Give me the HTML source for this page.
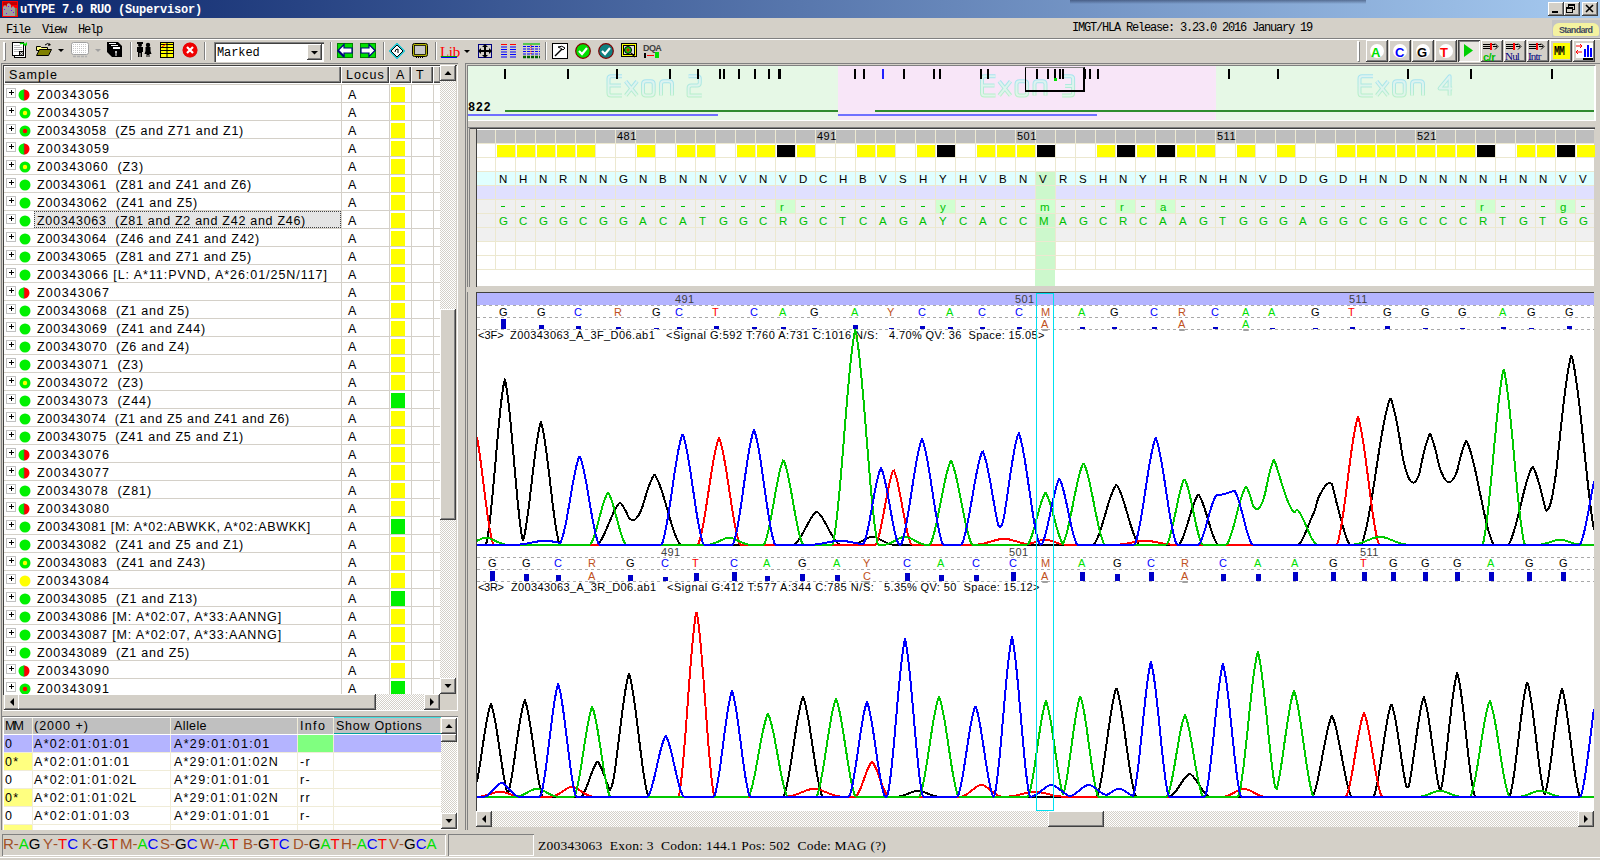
<!DOCTYPE html><html><head><meta charset="utf-8"><style>
*{margin:0;padding:0;box-sizing:border-box}
html,body{width:1600px;height:860px;overflow:hidden;background:#D4D0C8;position:relative;font-family:"Liberation Sans",sans-serif}
body>div,body>svg{position:absolute}
.t{white-space:pre;line-height:1}
.mono{font-family:"Liberation Mono",monospace}
.serif{font-family:"Liberation Serif",serif}
.raised{background:#D4D0C8;box-shadow:inset -1px -1px #404040,inset 1px 1px #FFFFFF,inset -2px -2px #808080,inset 2px 2px #D4D0C8}
.sunk{box-shadow:inset 1px 1px #808080,inset -1px -1px #FFFFFF}
.dith{background-color:#E8E6E0;background-image:repeating-linear-gradient(45deg,rgba(255,255,255,.5) 0 1px,transparent 1px 2px)}
</style></head><body>
<div style="left:0px;top:0px;width:1600px;height:18px;background:linear-gradient(to right,#0A246A,#A6CAF0)"></div>
<div style="left:1070px;top:0px;width:296px;height:4px;background:linear-gradient(rgba(20,30,60,.45),rgba(20,30,60,0))"></div>
<svg style="left:2px;top:1px" width="16" height="16" viewBox="0 0 16 16">
<rect x="0" y="0" width="16" height="16" fill="#FF0000"/><rect x="1" y="1" width="14" height="3" fill="#C00000"/>
<path d="M1 15 V6 L3 4 L5 6 V3 L7 2 L9 4 V7 L11 5 L13 7 V15 Z" fill="#A0A0A0"/>
<rect x="2" y="8" width="1" height="1" fill="#8000FF"/><rect x="6" y="5" width="1" height="1" fill="#8000FF"/><rect x="9" y="9" width="1" height="1" fill="#8000FF"/><rect x="4" y="12" width="1" height="1" fill="#8000FF"/><rect x="11" y="11" width="1" height="1" fill="#8000FF"/>
<rect x="13" y="7" width="2" height="8" fill="#808040"/></svg>
<div class="t" style="left:20px;top:3px;color:#fff;font:bold 12px 'Liberation Mono',monospace;letter-spacing:-0.2px">uTYPE 7.0 RUO (Supervisor)</div>
<div class="raised" style="left:1548px;top:2px;width:16px;height:14px"></div>
<div class="raised" style="left:1564px;top:2px;width:16px;height:14px"></div>
<div class="raised" style="left:1582px;top:2px;width:16px;height:14px"></div>
<div style="left:1552px;top:11px;width:6px;height:2px;background:#000"></div>
<svg style="left:1564px;top:2px" width="16" height="14"><rect x="4.5" y="2.5" width="6" height="5" fill="none" stroke="#000"/><rect x="4" y="2" width="7" height="2" fill="#000"/><rect x="2.5" y="5.5" width="6" height="5" fill="#D4D0C8" stroke="#000"/><rect x="2" y="5" width="7" height="2" fill="#000"/></svg>
<svg style="left:1582px;top:2px" width="16" height="14"><path d="M4 3 L11 10 M11 3 L4 10" stroke="#000" stroke-width="1.6"/></svg>
<div class="t" style="left:6px;top:23px;font:12px 'Liberation Mono',monospace;color:#000;letter-spacing:-1.2px">File</div>
<div class="t" style="left:42px;top:23px;font:12px 'Liberation Mono',monospace;color:#000;letter-spacing:-1.2px">View</div>
<div class="t" style="left:78px;top:23px;font:12px 'Liberation Mono',monospace;color:#000;letter-spacing:-1.2px">Help</div>
<div class="t" style="left:1072px;top:21px;font:12px 'Liberation Mono',monospace;color:#000;letter-spacing:-1.2px">IMGT/HLA Release: 3.23.0 2016 January 19</div>
<div style="left:1552px;top:20px;width:48px;height:17px;background:#C4C4C4"></div>
<div style="left:1553px;top:23px;width:46px;height:13px;background:#F4F2A0;border-radius:6px 6px 2px 2px"></div>
<div class="t" style="left:1559px;top:26px;font-family:'Liberation Sans',sans-serif;font-size:9px;font-weight:bold;letter-spacing:-0.714px;color:#404860;">Standard</div>
<div style="left:0px;top:38px;width:1600px;height:1px;background:#808080"></div>
<div style="left:0px;top:39px;width:1600px;height:1px;background:#FFFFFF"></div>
<div style="left:3px;top:42px;width:2px;height:18px;background:#fff;box-shadow:1px 1px #808080"></div>
<div style="left:130px;top:42px;width:1px;height:18px;background:#808080;box-shadow:1px 0 #fff"></div>
<div style="left:204px;top:42px;width:1px;height:18px;background:#808080;box-shadow:1px 0 #fff"></div>
<div style="left:330px;top:42px;width:1px;height:18px;background:#808080;box-shadow:1px 0 #fff"></div>
<div style="left:383px;top:42px;width:1px;height:18px;background:#808080;box-shadow:1px 0 #fff"></div>
<div style="left:435px;top:42px;width:1px;height:18px;background:#808080;box-shadow:1px 0 #fff"></div>
<div style="left:545px;top:42px;width:1px;height:18px;background:#808080;box-shadow:1px 0 #fff"></div>
<div style="left:214px;top:42px;width:110px;height:20px;background:#fff;box-shadow:inset 1px 1px #808080,inset 2px 2px #404040,inset -1px -1px #fff"></div>
<div class="t" style="left:217px;top:46px;font:12px 'Liberation Mono',monospace;letter-spacing:-0.1px;color:#000">Marked</div>
<div class="raised" style="left:307px;top:44px;width:15px;height:16px"></div>
<svg style="left:307px;top:44px" width="15" height="16"><path d="M4 7 L11 7 L7.5 10.5 Z" fill="#000"/></svg>
<svg style="left:12px;top:42px" width="16" height="16" viewBox="0 0 16 16"><rect x="2.5" y="2.5" width="11" height="13" fill="#fff" stroke="#000"/><rect x="0.5" y="0.5" width="11" height="13" fill="#fff" stroke="#000"/><path d="M2 3.5h6M2 5.5h8M2 7.5h8M2 9.5h5" stroke="#B8B8B8"/><rect x="7.5" y="9.5" width="4" height="4" fill="#fff" stroke="#000"/><circle cx="9.5" cy="11.5" r="1" fill="none" stroke="#000" stroke-width="0.7"/><path d="M8 2 q3 -2 5 1" stroke="#00E000" stroke-width="1.5" fill="none"/><path d="M11.5 3.5h3.5v-3.5z" fill="#00E000"/></svg>
<svg style="left:36px;top:42px" width="16" height="16" viewBox="0 0 16 16"><path d="M0.5 4.5h4l1 1h6v3h-11z" fill="#FFFF80" stroke="#000"/><path d="M0.5 13.5l3 -6h12l-3 6z" fill="#808000" stroke="#000"/><path d="M9 3q3 -3 5 0" stroke="#000" fill="none"/><path d="M13 1l2 2l-3 1z" fill="#000"/></svg>
<svg style="left:58px;top:49px" width="7" height="4" viewBox="0 0 7 4"><path d="M0 0h6l-3 3z" fill="#000"/></svg>
<svg style="left:71px;top:42px" width="18" height="16" viewBox="0 0 18 16"><rect x="0.5" y="0.5" width="17" height="12" rx="2" fill="#fff" stroke="#A0A0A0"/><path d="M2 2.5h14M2 4.5h14M2 6.5h14M2 8.5h14M2 10.5h14" stroke="#C8C8C8" stroke-dasharray="1 1"/><path d="M2 14.5h3M6 14.5h3M10 14.5h3M14 14.5h2" stroke="#B0B0B0" stroke-width="1.5"/></svg>
<svg style="left:95px;top:49px" width="7" height="4" viewBox="0 0 7 4"><path d="M0 0h6l-3 3z" fill="#A0A0A0"/></svg>
<svg style="left:107px;top:42px" width="16" height="16" viewBox="0 0 16 16"><path d="M0 0h11l4 4v11h-10l-5 -5z" fill="#000"/><path d="M2 1.5h7M4 3.5h7" stroke="#fff"/><rect x="6" y="5" width="7" height="2" fill="#fff"/><path d="M9 9v5M8 10h2" stroke="#fff"/></svg>
<svg style="left:136px;top:42px" width="16" height="16" viewBox="0 0 16 16"><circle cx="4" cy="3" r="2" fill="#000"/><rect x="1" y="0" width="6" height="2" fill="#000"/><path d="M1 5h6v5h-1v5h-1.5v-4h-1v4h-1.5v-5h-1z" fill="#000"/><circle cx="12" cy="3" r="2.2" fill="#000"/><path d="M9.5 5h5v4l1 3h-2v3h-1v-2h-1v2h-1v-3h-2l1 -3z" fill="#000"/></svg>
<svg style="left:160px;top:42px" width="14" height="16" viewBox="0 0 14 16"><rect x="0.5" y="0.5" width="13" height="15" fill="#FFFF00" stroke="#000"/><path d="M1 2.5h12M1 5.5h12M1 8.5h12M1 11.5h12M7 1v14" stroke="#000"/><path d="M2 5l4 -3" stroke="#FF0000"/></svg>
<svg style="left:182px;top:42px" width="16" height="16" viewBox="0 0 16 16"><circle cx="8" cy="8" r="7.5" fill="#E00000"/><circle cx="8.5" cy="8.5" r="7" fill="#808080" opacity="0.3"/><circle cx="8" cy="8" r="7.2" fill="#F00000"/><path d="M5 5l6 6M11 5l-6 6" stroke="#fff" stroke-width="2.2"/></svg>
<svg style="left:337px;top:43px" width="16" height="15" viewBox="0 0 16 15"><rect x="0.5" y="0.5" width="15" height="14" fill="#00E000" stroke="#008000"/><path d="M1 7.5l6 -6v3.5h8v5h-8v3.5z" fill="#fff" stroke="#000080" stroke-width="1.2"/><path d="M1 7.5l6 6" stroke="#000080" stroke-width="2.2"/></svg>
<svg style="left:360px;top:43px" width="16" height="15" viewBox="0 0 16 15"><rect x="0.5" y="0.5" width="15" height="14" fill="#00E000" stroke="#008000"/><path d="M15 7.5l-6 -6v3.5h-8v5h8v3.5z" fill="#fff" stroke="#000080" stroke-width="1.2"/></svg>
<svg style="left:389px;top:43px" width="16" height="16" viewBox="0 0 16 16"><path d="M8 0.5l7.5 7.5l-7.5 7.5l-7.5 -7.5z" fill="#fff" stroke="#00C0D0" stroke-width="1.2"/><path d="M8 2l6 6l-6 6l-6 -6z" fill="none" stroke="#000"/><path d="M6 9q0 -3 3 -3v4" stroke="#000" fill="none"/></svg>
<svg style="left:412px;top:43px" width="16" height="16" viewBox="0 0 16 16"><rect x="0.5" y="0.5" width="15" height="13" rx="2" fill="#FFFF00" stroke="#000"/><rect x="2.5" y="2.5" width="11" height="9" fill="#C8C8C8" stroke="#000" stroke-width="0.8"/><rect x="1.5" y="1.5" width="13" height="11" fill="none" stroke="#000" stroke-dasharray="1 1" stroke-width="0.6"/><path d="M4 14.5h8" stroke="#000" stroke-dasharray="1 1"/></svg>
<div class="t" style="left:440px;top:44px;font:15px 'Liberation Serif',serif;color:#FF0000;letter-spacing:-0.3px">Lib</div>
<div style="left:441px;top:56px;width:16px;height:1px;background:#00A000"></div>
<div style="left:441px;top:57px;width:16px;height:1px;background:#0000FF"></div>
<svg style="left:464px;top:50px" width="6" height="4" viewBox="0 0 6 4"><path d="M0 0h6l-3 3z" fill="#000"/></svg>
<svg style="left:477px;top:43px" width="16" height="16" viewBox="0 0 16 16"><rect x="1.5" y="1.5" width="13" height="13" fill="none" stroke="#000080"/><path d="M8 1l3 3h-2v3h3v-2l3 3l-3 3v-2h-3v3h2l-3 3l-3 -3h2v-3h-3v2l-3 -3l3 -3v2h3v-3h-2z" fill="#000"/></svg>
<svg style="left:501px;top:43px" width="15" height="16" viewBox="0 0 15 16"><path d="M0 1.5h6M9 1.5h6" stroke="#FF0000" stroke-width="1.2"/><path d="M0 4h6M9 4h6M0 6.5h6M9 6.5h6M0 9h6M9 9h6M0 11.5h6M9 11.5h6M0 14h6M9 14h6" stroke="#0000FF" stroke-width="1.2"/></svg>
<svg style="left:523px;top:43px" width="17" height="16" viewBox="0 0 17 16"><path d="M0 1h17" stroke="#00C000" stroke-width="1.2"/><path d="M0 3.5h17M0 6h17M0 8.5h17M0 11h17" stroke="#0000FF" stroke-dasharray="3 1"/><path d="M8 2v10" stroke="#FF0000" stroke-dasharray="1 1"/><path d="M0 14h17" stroke="#006000" stroke-width="2.5" stroke-dasharray="3 1"/></svg>
<svg style="left:552px;top:43px" width="16" height="16" viewBox="0 0 16 16"><rect x="0.5" y="0.5" width="15" height="15" fill="#fff" stroke="#000"/><path d="M3 13l7 -7" stroke="#000" stroke-width="1.5"/><path d="M6 4q4 -2 7 1l-2 2q-2 -2 -5 -3z" fill="none" stroke="#000"/></svg>
<svg style="left:575px;top:43px" width="16" height="16" viewBox="0 0 16 16"><circle cx="8" cy="8" r="7.3" fill="#00E000" stroke="#800000" stroke-width="1.2"/><path d="M4 8l3 3l5 -6" stroke="#fff" stroke-width="2.2" fill="none"/></svg>
<svg style="left:598px;top:43px" width="16" height="16" viewBox="0 0 16 16"><circle cx="8" cy="8" r="7.3" fill="#108080" stroke="#800000" stroke-width="1.2"/><path d="M4 8l3 3l5 -6" stroke="#fff" stroke-width="2.2" fill="none"/></svg>
<svg style="left:621px;top:43px" width="16" height="16" viewBox="0 0 16 16"><rect x="0.5" y="0.5" width="15" height="13" fill="#FFFF00" stroke="#000"/><rect x="2.5" y="2.5" width="11" height="9" fill="#E0E0E0" stroke="#000"/><circle cx="7" cy="7" r="3.5" fill="#00E000" stroke="#000"/><path d="M5 7h4M7 5v4" stroke="#F00000" stroke-width="1.2"/><path d="M10 10l4 4" stroke="#000" stroke-width="1.5"/></svg>
<div class="t" style="left:643px;top:43px;font:bold 9px 'Liberation Sans';color:#404040;letter-spacing:-0.6px">DQA</div>
<div style="left:644px;top:53px;width:2px;height:5px;background:#000"></div>
<div style="left:647px;top:55px;width:7px;height:1px;background:#FF0000;"></div>
<div style="left:655px;top:52px;width:4px;height:6px;background:#00E000"></div>
<div style="left:1357px;top:41px;width:2px;height:20px;background:#fff;box-shadow:1px 1px #808080"></div>
<div class="raised" style="left:1366px;top:40px;width:22px;height:22px"></div>
<div class="raised" style="left:1389px;top:40px;width:22px;height:22px"></div>
<div class="raised" style="left:1412px;top:40px;width:22px;height:22px"></div>
<div class="raised" style="left:1435px;top:40px;width:22px;height:22px"></div>
<div style="left:1458px;top:40px;width:22px;height:22px;background:#E8E6E0;box-shadow:inset 1px 1px #404040,inset -1px -1px #fff,inset 2px 2px #808080"></div>
<div class="raised" style="left:1481px;top:40px;width:22px;height:22px"></div>
<div class="raised" style="left:1504px;top:40px;width:22px;height:22px"></div>
<div class="raised" style="left:1527px;top:40px;width:22px;height:22px"></div>
<div class="raised" style="left:1550px;top:40px;width:22px;height:22px"></div>
<div class="raised" style="left:1573px;top:40px;width:22px;height:22px"></div>
<svg style="left:1369px;top:43px" width="16" height="16" viewBox="0 0 16 16"><circle cx="8" cy="8" r="7" fill="#fff"/></svg>
<div class="t" style="left:1371px;top:45px;font:bold 13px 'Liberation Sans';color:#00E000">A</div>
<svg style="left:1392px;top:43px" width="16" height="16" viewBox="0 0 16 16"><circle cx="8" cy="8" r="7" fill="#fff"/></svg>
<div class="t" style="left:1395px;top:45px;font:bold 13px 'Liberation Sans';color:#0000FF">C</div>
<svg style="left:1415px;top:43px" width="16" height="16" viewBox="0 0 16 16"><circle cx="8" cy="8" r="7" fill="#fff"/></svg>
<div class="t" style="left:1417px;top:45px;font:bold 13px 'Liberation Sans';color:#000000">G</div>
<svg style="left:1438px;top:43px" width="16" height="16" viewBox="0 0 16 16"><circle cx="8" cy="8" r="7" fill="#fff"/></svg>
<div class="t" style="left:1440px;top:45px;font:bold 13px 'Liberation Sans';color:#FF0000">T</div>
<svg style="left:1464px;top:44px" width="12" height="14" viewBox="0 0 12 14"><path d="M0 0l9 6.5l-9 6.5z" fill="#00D000"/></svg>
<svg style="left:1483px;top:42px" width="18" height="18" viewBox="0 0 18 18"><path d="M0 2.5h12M0 4.5h7M0 6.5h7M10 4.5h4" stroke="#000" stroke-width="1"/><path d="M12 1.5l3 3l-3 3" stroke="#000" fill="none"/><rect x="7" y="1" width="2" height="7" fill="#FF0000"/></svg>
<div class="t" style="left:1483px;top:51px;font:bold 11px 'Liberation Sans';color:#00C000;letter-spacing:-0.5px">c/r</div>
<svg style="left:1506px;top:42px" width="18" height="18" viewBox="0 0 18 18"><path d="M0 2.5h12M0 4.5h7M0 6.5h7M10 4.5h4" stroke="#000" stroke-width="1"/><path d="M12 1.5l3 3l-3 3" stroke="#000" fill="none"/><rect x="7" y="1" width="2" height="7" fill="#FF0000"/></svg>
<div class="t" style="left:1505px;top:50px;font:11px 'Liberation Serif';color:#000080;letter-spacing:-0.8px">Nul</div>
<svg style="left:1529px;top:42px" width="18" height="18" viewBox="0 0 18 18"><path d="M0 2.5h12M0 4.5h7M0 6.5h7M10 4.5h4" stroke="#000" stroke-width="1"/><path d="M12 1.5l3 3l-3 3" stroke="#000" fill="none"/><rect x="7" y="1" width="2" height="7" fill="#FF0000"/></svg>
<div class="t" style="left:1528px;top:50px;font:11px 'Liberation Serif';color:#000080;letter-spacing:-0.8px">Intr</div>
<div style="left:1553px;top:43px;width:17px;height:16px;background:#FFFF00"></div>
<div class="t" style="left:1554px;top:44px;font:bold 13px 'Liberation Mono';color:#000;letter-spacing:-1px;transform:scaleX(0.75);transform-origin:0 0">MM</div>
<div style="left:1576px;top:43px;width:17px;height:15px;background:#fff"></div>
<svg style="left:1575px;top:42px" width="18" height="18" viewBox="0 0 18 18"><path d="M1 4h6M5 2l2 2l-2 2" stroke="#FF0000" fill="none"/><path d="M1 10h6M3 8l-2 2l2 2" stroke="#FF0000" fill="none"/><rect x="9" y="7" width="2" height="8" fill="#0000FF"/><rect x="12" y="3" width="2" height="12" fill="#0000FF"/><rect x="15" y="6" width="2" height="9" fill="#0000FF"/><rect x="8" y="16" width="10" height="2" fill="#000"/></svg>
<div style="left:1px;top:63px;width:457px;height:1px;background:#808080"></div>
<div style="left:1px;top:63px;width:1px;height:767px;background:#808080"></div>
<div style="left:3px;top:65px;width:455px;height:1px;background:#404040"></div>
<div style="left:3px;top:65px;width:1px;height:630px;background:#404040"></div>
<div style="left:4px;top:66px;width:337px;height:17px;background:#D4D0C8;box-shadow:inset 1px 1px #fff,inset -1px -1px #404040,inset -2px -2px #808080"></div>
<div class="t" style="left:9px;top:68px;font:12.5px 'Liberation Sans',sans-serif;letter-spacing:1.1px;color:#000">Sample</div>
<div style="left:341px;top:66px;width:48px;height:17px;background:#D4D0C8;box-shadow:inset 1px 1px #fff,inset -1px -1px #404040,inset -2px -2px #808080"></div>
<div class="t" style="left:346px;top:68px;font:12.5px 'Liberation Sans',sans-serif;letter-spacing:1.1px;color:#000">Locus</div>
<div style="left:389px;top:66px;width:22px;height:17px;background:#D4D0C8;box-shadow:inset 1px 1px #fff,inset -1px -1px #404040,inset -2px -2px #808080"></div>
<div class="t" style="left:396px;top:68px;font:12.5px 'Liberation Sans',sans-serif;letter-spacing:1.1px;color:#000">A</div>
<div style="left:411px;top:66px;width:22px;height:17px;background:#D4D0C8;box-shadow:inset 1px 1px #fff,inset -1px -1px #404040,inset -2px -2px #808080"></div>
<div class="t" style="left:416px;top:68px;font:12.5px 'Liberation Sans',sans-serif;letter-spacing:1.1px;color:#000">T</div>
<div style="left:433px;top:66px;width:8px;height:17px;background:#D4D0C8;box-shadow:inset 1px 1px #fff,inset -1px -1px #404040,inset -2px -2px #808080"></div>
<div style="left:4px;top:83px;width:436px;height:612px;background:#fff"></div>
<div style="left:4px;top:84px;width:436px;height:1px;background:#D4D0C8"></div>
<div style="left:6px;top:88px;width:10px;height:10px;background:#fff;border:1px solid #C0C0C0"></div>
<div style="left:9px;top:92px;width:5px;height:1px;background:#000"></div>
<div style="left:11px;top:90px;width:1px;height:5px;background:#000"></div>
<svg style="left:18px;top:89px" width="12" height="12" viewBox="0 0 12 12"><path d="M6 0.5a5.5 5.5 0 0 0 0 11z" fill="#00F000"/><path d="M6 0.5a5.5 5.5 0 0 1 0 11z" fill="#FF0000"/><rect x="5.5" y="0" width="1" height="12" fill="#408040" opacity=".6"/></svg>
<div class="t" style="left:37px;top:89px;font-family:'Liberation Sans',sans-serif;font-size:12.5px;font-weight:normal;letter-spacing:1.082px;color:#000;">Z00343056</div>
<div class="t" style="left:348px;top:88px;font:12.5px 'Liberation Sans',sans-serif;letter-spacing:1.1px;color:#000">A</div>
<div style="left:391px;top:87px;width:14px;height:15px;background:#FFFF00"></div>
<div style="left:4px;top:102px;width:436px;height:1px;background:#D4D0C8"></div>
<div style="left:6px;top:106px;width:10px;height:10px;background:#fff;border:1px solid #C0C0C0"></div>
<div style="left:9px;top:110px;width:5px;height:1px;background:#000"></div>
<div style="left:11px;top:108px;width:1px;height:5px;background:#000"></div>
<svg style="left:19px;top:107px" width="12" height="12" viewBox="0 0 12 12"><circle cx="6" cy="6" r="5.5" fill="#00F000"/><circle cx="6" cy="6" r="2.2" fill="#FFFF00"/></svg>
<div class="t" style="left:37px;top:107px;font-family:'Liberation Sans',sans-serif;font-size:12.5px;font-weight:normal;letter-spacing:1.082px;color:#000;">Z00343057</div>
<div class="t" style="left:348px;top:106px;font:12.5px 'Liberation Sans',sans-serif;letter-spacing:1.1px;color:#000">A</div>
<div style="left:391px;top:105px;width:14px;height:15px;background:#FFFF00"></div>
<div style="left:4px;top:120px;width:436px;height:1px;background:#D4D0C8"></div>
<div style="left:6px;top:124px;width:10px;height:10px;background:#fff;border:1px solid #C0C0C0"></div>
<div style="left:9px;top:128px;width:5px;height:1px;background:#000"></div>
<div style="left:11px;top:126px;width:1px;height:5px;background:#000"></div>
<svg style="left:19px;top:125px" width="12" height="12" viewBox="0 0 12 12"><circle cx="6" cy="6" r="5.5" fill="#00F000"/><circle cx="6" cy="6" r="2.2" fill="#FF0000"/></svg>
<div class="t" style="left:37px;top:125px;font-family:'Liberation Sans',sans-serif;font-size:12.5px;font-weight:normal;letter-spacing:0.739px;color:#000;">Z00343058  (Z5 and Z71 and Z1)</div>
<div class="t" style="left:348px;top:124px;font:12.5px 'Liberation Sans',sans-serif;letter-spacing:1.1px;color:#000">A</div>
<div style="left:391px;top:123px;width:14px;height:15px;background:#FFFF00"></div>
<div style="left:4px;top:138px;width:436px;height:1px;background:#D4D0C8"></div>
<div style="left:6px;top:142px;width:10px;height:10px;background:#fff;border:1px solid #C0C0C0"></div>
<div style="left:9px;top:146px;width:5px;height:1px;background:#000"></div>
<div style="left:11px;top:144px;width:1px;height:5px;background:#000"></div>
<svg style="left:18px;top:143px" width="12" height="12" viewBox="0 0 12 12"><path d="M6 0.5a5.5 5.5 0 0 0 0 11z" fill="#00F000"/><path d="M6 0.5a5.5 5.5 0 0 1 0 11z" fill="#FF0000"/><rect x="5.5" y="0" width="1" height="12" fill="#408040" opacity=".6"/></svg>
<div class="t" style="left:37px;top:143px;font-family:'Liberation Sans',sans-serif;font-size:12.5px;font-weight:normal;letter-spacing:1.082px;color:#000;">Z00343059</div>
<div class="t" style="left:348px;top:142px;font:12.5px 'Liberation Sans',sans-serif;letter-spacing:1.1px;color:#000">A</div>
<div style="left:391px;top:141px;width:14px;height:15px;background:#FFFF00"></div>
<div style="left:4px;top:156px;width:436px;height:1px;background:#D4D0C8"></div>
<div style="left:6px;top:160px;width:10px;height:10px;background:#fff;border:1px solid #C0C0C0"></div>
<div style="left:9px;top:164px;width:5px;height:1px;background:#000"></div>
<div style="left:11px;top:162px;width:1px;height:5px;background:#000"></div>
<svg style="left:19px;top:161px" width="12" height="12" viewBox="0 0 12 12"><circle cx="6" cy="6" r="5.5" fill="#00F000"/><circle cx="6" cy="6" r="2.2" fill="#FFFF00"/></svg>
<div class="t" style="left:37px;top:161px;font-family:'Liberation Sans',sans-serif;font-size:12.5px;font-weight:normal;letter-spacing:0.926px;color:#000;">Z00343060  (Z3)</div>
<div class="t" style="left:348px;top:160px;font:12.5px 'Liberation Sans',sans-serif;letter-spacing:1.1px;color:#000">A</div>
<div style="left:391px;top:159px;width:14px;height:15px;background:#FFFF00"></div>
<div style="left:4px;top:174px;width:436px;height:1px;background:#D4D0C8"></div>
<div style="left:6px;top:178px;width:10px;height:10px;background:#fff;border:1px solid #C0C0C0"></div>
<div style="left:9px;top:182px;width:5px;height:1px;background:#000"></div>
<div style="left:11px;top:180px;width:1px;height:5px;background:#000"></div>
<svg style="left:19px;top:179px" width="12" height="12" viewBox="0 0 12 12"><circle cx="6" cy="6" r="5.5" fill="#00F000"/></svg>
<div class="t" style="left:37px;top:179px;font-family:'Liberation Sans',sans-serif;font-size:12.5px;font-weight:normal;letter-spacing:0.748px;color:#000;">Z00343061  (Z81 and Z41 and Z6)</div>
<div class="t" style="left:348px;top:178px;font:12.5px 'Liberation Sans',sans-serif;letter-spacing:1.1px;color:#000">A</div>
<div style="left:391px;top:177px;width:14px;height:15px;background:#FFFF00"></div>
<div style="left:4px;top:192px;width:436px;height:1px;background:#D4D0C8"></div>
<div style="left:6px;top:196px;width:10px;height:10px;background:#fff;border:1px solid #C0C0C0"></div>
<div style="left:9px;top:200px;width:5px;height:1px;background:#000"></div>
<div style="left:11px;top:198px;width:1px;height:5px;background:#000"></div>
<svg style="left:19px;top:197px" width="12" height="12" viewBox="0 0 12 12"><circle cx="6" cy="6" r="5.5" fill="#00F000"/></svg>
<div class="t" style="left:37px;top:197px;font-family:'Liberation Sans',sans-serif;font-size:12.5px;font-weight:normal;letter-spacing:0.806px;color:#000;">Z00343062  (Z41 and Z5)</div>
<div class="t" style="left:348px;top:196px;font:12.5px 'Liberation Sans',sans-serif;letter-spacing:1.1px;color:#000">A</div>
<div style="left:391px;top:195px;width:14px;height:15px;background:#FFFF00"></div>
<div style="left:4px;top:210px;width:436px;height:1px;background:#D4D0C8"></div>
<div style="left:34px;top:211px;width:307px;height:17px;background:#E4E4E4;outline:1px dotted #404040;outline-offset:-1px"></div>
<div style="left:6px;top:214px;width:10px;height:10px;background:#fff;border:1px solid #C0C0C0"></div>
<div style="left:9px;top:218px;width:5px;height:1px;background:#000"></div>
<div style="left:11px;top:216px;width:1px;height:5px;background:#000"></div>
<svg style="left:19px;top:215px" width="12" height="12" viewBox="0 0 12 12"><circle cx="6" cy="6" r="5.5" fill="#00F000"/></svg>
<div class="t" style="left:37px;top:215px;font-family:'Liberation Sans',sans-serif;font-size:12.5px;font-weight:normal;letter-spacing:0.714px;color:#000;">Z00343063  (Z81 and Z2 and Z42 and Z46)</div>
<div class="t" style="left:348px;top:214px;font:12.5px 'Liberation Sans',sans-serif;letter-spacing:1.1px;color:#000">A</div>
<div style="left:391px;top:213px;width:14px;height:15px;background:#FFFF00"></div>
<div style="left:4px;top:228px;width:436px;height:1px;background:#D4D0C8"></div>
<div style="left:6px;top:232px;width:10px;height:10px;background:#fff;border:1px solid #C0C0C0"></div>
<div style="left:9px;top:236px;width:5px;height:1px;background:#000"></div>
<div style="left:11px;top:234px;width:1px;height:5px;background:#000"></div>
<svg style="left:19px;top:233px" width="12" height="12" viewBox="0 0 12 12"><circle cx="6" cy="6" r="5.5" fill="#00F000"/></svg>
<div class="t" style="left:37px;top:233px;font-family:'Liberation Sans',sans-serif;font-size:12.5px;font-weight:normal;letter-spacing:0.758px;color:#000;">Z00343064  (Z46 and Z41 and Z42)</div>
<div class="t" style="left:348px;top:232px;font:12.5px 'Liberation Sans',sans-serif;letter-spacing:1.1px;color:#000">A</div>
<div style="left:391px;top:231px;width:14px;height:15px;background:#FFFF00"></div>
<div style="left:4px;top:246px;width:436px;height:1px;background:#D4D0C8"></div>
<div style="left:6px;top:250px;width:10px;height:10px;background:#fff;border:1px solid #C0C0C0"></div>
<div style="left:9px;top:254px;width:5px;height:1px;background:#000"></div>
<div style="left:11px;top:252px;width:1px;height:5px;background:#000"></div>
<svg style="left:19px;top:251px" width="12" height="12" viewBox="0 0 12 12"><circle cx="6" cy="6" r="5.5" fill="#00F000"/></svg>
<div class="t" style="left:37px;top:251px;font-family:'Liberation Sans',sans-serif;font-size:12.5px;font-weight:normal;letter-spacing:0.748px;color:#000;">Z00343065  (Z81 and Z71 and Z5)</div>
<div class="t" style="left:348px;top:250px;font:12.5px 'Liberation Sans',sans-serif;letter-spacing:1.1px;color:#000">A</div>
<div style="left:391px;top:249px;width:14px;height:15px;background:#FFFF00"></div>
<div style="left:4px;top:264px;width:436px;height:1px;background:#D4D0C8"></div>
<div style="left:6px;top:268px;width:10px;height:10px;background:#fff;border:1px solid #C0C0C0"></div>
<div style="left:9px;top:272px;width:5px;height:1px;background:#000"></div>
<div style="left:11px;top:270px;width:1px;height:5px;background:#000"></div>
<svg style="left:19px;top:269px" width="12" height="12" viewBox="0 0 12 12"><circle cx="6" cy="6" r="5.5" fill="#00F000"/></svg>
<div class="t" style="left:37px;top:269px;font-family:'Liberation Sans',sans-serif;font-size:12.5px;font-weight:normal;letter-spacing:0.955px;color:#000;">Z00343066 [L: A*11:PVND, A*26:01/25N/117]</div>
<div class="t" style="left:348px;top:268px;font:12.5px 'Liberation Sans',sans-serif;letter-spacing:1.1px;color:#000">A</div>
<div style="left:391px;top:267px;width:14px;height:15px;background:#FFFF00"></div>
<div style="left:4px;top:282px;width:436px;height:1px;background:#D4D0C8"></div>
<div style="left:6px;top:286px;width:10px;height:10px;background:#fff;border:1px solid #C0C0C0"></div>
<div style="left:9px;top:290px;width:5px;height:1px;background:#000"></div>
<div style="left:11px;top:288px;width:1px;height:5px;background:#000"></div>
<svg style="left:18px;top:287px" width="12" height="12" viewBox="0 0 12 12"><path d="M6 0.5a5.5 5.5 0 0 0 0 11z" fill="#00F000"/><path d="M6 0.5a5.5 5.5 0 0 1 0 11z" fill="#FF0000"/><rect x="5.5" y="0" width="1" height="12" fill="#408040" opacity=".6"/></svg>
<div class="t" style="left:37px;top:287px;font-family:'Liberation Sans',sans-serif;font-size:12.5px;font-weight:normal;letter-spacing:1.082px;color:#000;">Z00343067</div>
<div class="t" style="left:348px;top:286px;font:12.5px 'Liberation Sans',sans-serif;letter-spacing:1.1px;color:#000">A</div>
<div style="left:391px;top:285px;width:14px;height:15px;background:#FFFF00"></div>
<div style="left:4px;top:300px;width:436px;height:1px;background:#D4D0C8"></div>
<div style="left:6px;top:304px;width:10px;height:10px;background:#fff;border:1px solid #C0C0C0"></div>
<div style="left:9px;top:308px;width:5px;height:1px;background:#000"></div>
<div style="left:11px;top:306px;width:1px;height:5px;background:#000"></div>
<svg style="left:19px;top:305px" width="12" height="12" viewBox="0 0 12 12"><circle cx="6" cy="6" r="5.5" fill="#00F000"/></svg>
<div class="t" style="left:37px;top:305px;font-family:'Liberation Sans',sans-serif;font-size:12.5px;font-weight:normal;letter-spacing:0.795px;color:#000;">Z00343068  (Z1 and Z5)</div>
<div class="t" style="left:348px;top:304px;font:12.5px 'Liberation Sans',sans-serif;letter-spacing:1.1px;color:#000">A</div>
<div style="left:391px;top:303px;width:14px;height:15px;background:#FFFF00"></div>
<div style="left:4px;top:318px;width:436px;height:1px;background:#D4D0C8"></div>
<div style="left:6px;top:322px;width:10px;height:10px;background:#fff;border:1px solid #C0C0C0"></div>
<div style="left:9px;top:326px;width:5px;height:1px;background:#000"></div>
<div style="left:11px;top:324px;width:1px;height:5px;background:#000"></div>
<svg style="left:19px;top:323px" width="12" height="12" viewBox="0 0 12 12"><circle cx="6" cy="6" r="5.5" fill="#00F000"/></svg>
<div class="t" style="left:37px;top:323px;font-family:'Liberation Sans',sans-serif;font-size:12.5px;font-weight:normal;letter-spacing:0.816px;color:#000;">Z00343069  (Z41 and Z44)</div>
<div class="t" style="left:348px;top:322px;font:12.5px 'Liberation Sans',sans-serif;letter-spacing:1.1px;color:#000">A</div>
<div style="left:391px;top:321px;width:14px;height:15px;background:#FFFF00"></div>
<div style="left:4px;top:336px;width:436px;height:1px;background:#D4D0C8"></div>
<div style="left:6px;top:340px;width:10px;height:10px;background:#fff;border:1px solid #C0C0C0"></div>
<div style="left:9px;top:344px;width:5px;height:1px;background:#000"></div>
<div style="left:11px;top:342px;width:1px;height:5px;background:#000"></div>
<svg style="left:19px;top:341px" width="12" height="12" viewBox="0 0 12 12"><circle cx="6" cy="6" r="5.5" fill="#00F000"/></svg>
<div class="t" style="left:37px;top:341px;font-family:'Liberation Sans',sans-serif;font-size:12.5px;font-weight:normal;letter-spacing:0.795px;color:#000;">Z00343070  (Z6 and Z4)</div>
<div class="t" style="left:348px;top:340px;font:12.5px 'Liberation Sans',sans-serif;letter-spacing:1.1px;color:#000">A</div>
<div style="left:391px;top:339px;width:14px;height:15px;background:#FFFF00"></div>
<div style="left:4px;top:354px;width:436px;height:1px;background:#D4D0C8"></div>
<div style="left:6px;top:358px;width:10px;height:10px;background:#fff;border:1px solid #C0C0C0"></div>
<div style="left:9px;top:362px;width:5px;height:1px;background:#000"></div>
<div style="left:11px;top:360px;width:1px;height:5px;background:#000"></div>
<svg style="left:19px;top:359px" width="12" height="12" viewBox="0 0 12 12"><circle cx="6" cy="6" r="5.5" fill="#00F000"/></svg>
<div class="t" style="left:37px;top:359px;font-family:'Liberation Sans',sans-serif;font-size:12.5px;font-weight:normal;letter-spacing:0.926px;color:#000;">Z00343071  (Z3)</div>
<div class="t" style="left:348px;top:358px;font:12.5px 'Liberation Sans',sans-serif;letter-spacing:1.1px;color:#000">A</div>
<div style="left:391px;top:357px;width:14px;height:15px;background:#FFFF00"></div>
<div style="left:4px;top:372px;width:436px;height:1px;background:#D4D0C8"></div>
<div style="left:6px;top:376px;width:10px;height:10px;background:#fff;border:1px solid #C0C0C0"></div>
<div style="left:9px;top:380px;width:5px;height:1px;background:#000"></div>
<div style="left:11px;top:378px;width:1px;height:5px;background:#000"></div>
<svg style="left:19px;top:377px" width="12" height="12" viewBox="0 0 12 12"><circle cx="6" cy="6" r="5.5" fill="#00F000"/><circle cx="6" cy="6" r="2.2" fill="#FFFF00"/></svg>
<div class="t" style="left:37px;top:377px;font-family:'Liberation Sans',sans-serif;font-size:12.5px;font-weight:normal;letter-spacing:0.926px;color:#000;">Z00343072  (Z3)</div>
<div class="t" style="left:348px;top:376px;font:12.5px 'Liberation Sans',sans-serif;letter-spacing:1.1px;color:#000">A</div>
<div style="left:391px;top:375px;width:14px;height:15px;background:#FFFF00"></div>
<div style="left:4px;top:390px;width:436px;height:1px;background:#D4D0C8"></div>
<div style="left:6px;top:394px;width:10px;height:10px;background:#fff;border:1px solid #C0C0C0"></div>
<div style="left:9px;top:398px;width:5px;height:1px;background:#000"></div>
<div style="left:11px;top:396px;width:1px;height:5px;background:#000"></div>
<svg style="left:19px;top:395px" width="12" height="12" viewBox="0 0 12 12"><circle cx="6" cy="6" r="5.5" fill="#00F000"/></svg>
<div class="t" style="left:37px;top:395px;font-family:'Liberation Sans',sans-serif;font-size:12.5px;font-weight:normal;letter-spacing:0.934px;color:#000;">Z00343073  (Z44)</div>
<div class="t" style="left:348px;top:394px;font:12.5px 'Liberation Sans',sans-serif;letter-spacing:1.1px;color:#000">A</div>
<div style="left:391px;top:393px;width:14px;height:15px;background:#00F000"></div>
<div style="left:4px;top:408px;width:436px;height:1px;background:#D4D0C8"></div>
<div style="left:6px;top:412px;width:10px;height:10px;background:#fff;border:1px solid #C0C0C0"></div>
<div style="left:9px;top:416px;width:5px;height:1px;background:#000"></div>
<div style="left:11px;top:414px;width:1px;height:5px;background:#000"></div>
<svg style="left:19px;top:413px" width="12" height="12" viewBox="0 0 12 12"><circle cx="6" cy="6" r="5.5" fill="#00F000"/></svg>
<div class="t" style="left:37px;top:413px;font-family:'Liberation Sans',sans-serif;font-size:12.5px;font-weight:normal;letter-spacing:0.696px;color:#000;">Z00343074  (Z1 and Z5 and Z41 and Z6)</div>
<div class="t" style="left:348px;top:412px;font:12.5px 'Liberation Sans',sans-serif;letter-spacing:1.1px;color:#000">A</div>
<div style="left:391px;top:411px;width:14px;height:15px;background:#FFFF00"></div>
<div style="left:4px;top:426px;width:436px;height:1px;background:#D4D0C8"></div>
<div style="left:6px;top:430px;width:10px;height:10px;background:#fff;border:1px solid #C0C0C0"></div>
<div style="left:9px;top:434px;width:5px;height:1px;background:#000"></div>
<div style="left:11px;top:432px;width:1px;height:5px;background:#000"></div>
<svg style="left:19px;top:431px" width="12" height="12" viewBox="0 0 12 12"><circle cx="6" cy="6" r="5.5" fill="#00F000"/></svg>
<div class="t" style="left:37px;top:431px;font-family:'Liberation Sans',sans-serif;font-size:12.5px;font-weight:normal;letter-spacing:0.739px;color:#000;">Z00343075  (Z41 and Z5 and Z1)</div>
<div class="t" style="left:348px;top:430px;font:12.5px 'Liberation Sans',sans-serif;letter-spacing:1.1px;color:#000">A</div>
<div style="left:391px;top:429px;width:14px;height:15px;background:#FFFF00"></div>
<div style="left:4px;top:444px;width:436px;height:1px;background:#D4D0C8"></div>
<div style="left:6px;top:448px;width:10px;height:10px;background:#fff;border:1px solid #C0C0C0"></div>
<div style="left:9px;top:452px;width:5px;height:1px;background:#000"></div>
<div style="left:11px;top:450px;width:1px;height:5px;background:#000"></div>
<svg style="left:18px;top:449px" width="12" height="12" viewBox="0 0 12 12"><path d="M6 0.5a5.5 5.5 0 0 0 0 11z" fill="#00F000"/><path d="M6 0.5a5.5 5.5 0 0 1 0 11z" fill="#FF0000"/><rect x="5.5" y="0" width="1" height="12" fill="#408040" opacity=".6"/></svg>
<div class="t" style="left:37px;top:449px;font-family:'Liberation Sans',sans-serif;font-size:12.5px;font-weight:normal;letter-spacing:1.082px;color:#000;">Z00343076</div>
<div class="t" style="left:348px;top:448px;font:12.5px 'Liberation Sans',sans-serif;letter-spacing:1.1px;color:#000">A</div>
<div style="left:391px;top:447px;width:14px;height:15px;background:#FFFF00"></div>
<div style="left:4px;top:462px;width:436px;height:1px;background:#D4D0C8"></div>
<div style="left:6px;top:466px;width:10px;height:10px;background:#fff;border:1px solid #C0C0C0"></div>
<div style="left:9px;top:470px;width:5px;height:1px;background:#000"></div>
<div style="left:11px;top:468px;width:1px;height:5px;background:#000"></div>
<svg style="left:18px;top:467px" width="12" height="12" viewBox="0 0 12 12"><path d="M6 0.5a5.5 5.5 0 0 0 0 11z" fill="#00F000"/><path d="M6 0.5a5.5 5.5 0 0 1 0 11z" fill="#FF0000"/><rect x="5.5" y="0" width="1" height="12" fill="#408040" opacity=".6"/></svg>
<div class="t" style="left:37px;top:467px;font-family:'Liberation Sans',sans-serif;font-size:12.5px;font-weight:normal;letter-spacing:1.082px;color:#000;">Z00343077</div>
<div class="t" style="left:348px;top:466px;font:12.5px 'Liberation Sans',sans-serif;letter-spacing:1.1px;color:#000">A</div>
<div style="left:391px;top:465px;width:14px;height:15px;background:#FFFF00"></div>
<div style="left:4px;top:480px;width:436px;height:1px;background:#D4D0C8"></div>
<div style="left:6px;top:484px;width:10px;height:10px;background:#fff;border:1px solid #C0C0C0"></div>
<div style="left:9px;top:488px;width:5px;height:1px;background:#000"></div>
<div style="left:11px;top:486px;width:1px;height:5px;background:#000"></div>
<svg style="left:19px;top:485px" width="12" height="12" viewBox="0 0 12 12"><circle cx="6" cy="6" r="5.5" fill="#00F000"/></svg>
<div class="t" style="left:37px;top:485px;font-family:'Liberation Sans',sans-serif;font-size:12.5px;font-weight:normal;letter-spacing:0.934px;color:#000;">Z00343078  (Z81)</div>
<div class="t" style="left:348px;top:484px;font:12.5px 'Liberation Sans',sans-serif;letter-spacing:1.1px;color:#000">A</div>
<div style="left:391px;top:483px;width:14px;height:15px;background:#FFFF00"></div>
<div style="left:4px;top:498px;width:436px;height:1px;background:#D4D0C8"></div>
<div style="left:6px;top:502px;width:10px;height:10px;background:#fff;border:1px solid #C0C0C0"></div>
<div style="left:9px;top:506px;width:5px;height:1px;background:#000"></div>
<div style="left:11px;top:504px;width:1px;height:5px;background:#000"></div>
<svg style="left:18px;top:503px" width="12" height="12" viewBox="0 0 12 12"><path d="M6 0.5a5.5 5.5 0 0 0 0 11z" fill="#00F000"/><path d="M6 0.5a5.5 5.5 0 0 1 0 11z" fill="#FF0000"/><rect x="5.5" y="0" width="1" height="12" fill="#408040" opacity=".6"/></svg>
<div class="t" style="left:37px;top:503px;font-family:'Liberation Sans',sans-serif;font-size:12.5px;font-weight:normal;letter-spacing:1.082px;color:#000;">Z00343080</div>
<div class="t" style="left:348px;top:502px;font:12.5px 'Liberation Sans',sans-serif;letter-spacing:1.1px;color:#000">A</div>
<div style="left:391px;top:501px;width:14px;height:15px;background:#FFFF00"></div>
<div style="left:4px;top:516px;width:436px;height:1px;background:#D4D0C8"></div>
<div style="left:6px;top:520px;width:10px;height:10px;background:#fff;border:1px solid #C0C0C0"></div>
<div style="left:9px;top:524px;width:5px;height:1px;background:#000"></div>
<div style="left:11px;top:522px;width:1px;height:5px;background:#000"></div>
<svg style="left:19px;top:521px" width="12" height="12" viewBox="0 0 12 12"><circle cx="6" cy="6" r="5.5" fill="#00F000"/></svg>
<div class="t" style="left:37px;top:521px;font-family:'Liberation Sans',sans-serif;font-size:12.5px;font-weight:normal;letter-spacing:0.701px;color:#000;">Z00343081 [M: A*02:ABWKK, A*02:ABWKK]</div>
<div class="t" style="left:348px;top:520px;font:12.5px 'Liberation Sans',sans-serif;letter-spacing:1.1px;color:#000">A</div>
<div style="left:391px;top:519px;width:14px;height:15px;background:#00F000"></div>
<div style="left:4px;top:534px;width:436px;height:1px;background:#D4D0C8"></div>
<div style="left:6px;top:538px;width:10px;height:10px;background:#fff;border:1px solid #C0C0C0"></div>
<div style="left:9px;top:542px;width:5px;height:1px;background:#000"></div>
<div style="left:11px;top:540px;width:1px;height:5px;background:#000"></div>
<svg style="left:19px;top:539px" width="12" height="12" viewBox="0 0 12 12"><circle cx="6" cy="6" r="5.5" fill="#00F000"/></svg>
<div class="t" style="left:37px;top:539px;font-family:'Liberation Sans',sans-serif;font-size:12.5px;font-weight:normal;letter-spacing:0.739px;color:#000;">Z00343082  (Z41 and Z5 and Z1)</div>
<div class="t" style="left:348px;top:538px;font:12.5px 'Liberation Sans',sans-serif;letter-spacing:1.1px;color:#000">A</div>
<div style="left:391px;top:537px;width:14px;height:15px;background:#FFFF00"></div>
<div style="left:4px;top:552px;width:436px;height:1px;background:#D4D0C8"></div>
<div style="left:6px;top:556px;width:10px;height:10px;background:#fff;border:1px solid #C0C0C0"></div>
<div style="left:9px;top:560px;width:5px;height:1px;background:#000"></div>
<div style="left:11px;top:558px;width:1px;height:5px;background:#000"></div>
<svg style="left:19px;top:557px" width="12" height="12" viewBox="0 0 12 12"><circle cx="6" cy="6" r="5.5" fill="#00F000"/><circle cx="6" cy="6" r="2.2" fill="#FFFF00"/></svg>
<div class="t" style="left:37px;top:557px;font-family:'Liberation Sans',sans-serif;font-size:12.5px;font-weight:normal;letter-spacing:0.816px;color:#000;">Z00343083  (Z41 and Z43)</div>
<div class="t" style="left:348px;top:556px;font:12.5px 'Liberation Sans',sans-serif;letter-spacing:1.1px;color:#000">A</div>
<div style="left:391px;top:555px;width:14px;height:15px;background:#FFFF00"></div>
<div style="left:4px;top:570px;width:436px;height:1px;background:#D4D0C8"></div>
<div style="left:6px;top:574px;width:10px;height:10px;background:#fff;border:1px solid #C0C0C0"></div>
<div style="left:9px;top:578px;width:5px;height:1px;background:#000"></div>
<div style="left:11px;top:576px;width:1px;height:5px;background:#000"></div>
<svg style="left:19px;top:575px" width="12" height="12" viewBox="0 0 12 12"><circle cx="6" cy="6" r="5.5" fill="#FFFF00"/></svg>
<div class="t" style="left:37px;top:575px;font-family:'Liberation Sans',sans-serif;font-size:12.5px;font-weight:normal;letter-spacing:1.082px;color:#000;">Z00343084</div>
<div class="t" style="left:348px;top:574px;font:12.5px 'Liberation Sans',sans-serif;letter-spacing:1.1px;color:#000">A</div>
<div style="left:391px;top:573px;width:14px;height:15px;background:#FFFF00"></div>
<div style="left:4px;top:588px;width:436px;height:1px;background:#D4D0C8"></div>
<div style="left:6px;top:592px;width:10px;height:10px;background:#fff;border:1px solid #C0C0C0"></div>
<div style="left:9px;top:596px;width:5px;height:1px;background:#000"></div>
<div style="left:11px;top:594px;width:1px;height:5px;background:#000"></div>
<svg style="left:19px;top:593px" width="12" height="12" viewBox="0 0 12 12"><circle cx="6" cy="6" r="5.5" fill="#00F000"/></svg>
<div class="t" style="left:37px;top:593px;font-family:'Liberation Sans',sans-serif;font-size:12.5px;font-weight:normal;letter-spacing:0.806px;color:#000;">Z00343085  (Z1 and Z13)</div>
<div class="t" style="left:348px;top:592px;font:12.5px 'Liberation Sans',sans-serif;letter-spacing:1.1px;color:#000">A</div>
<div style="left:391px;top:591px;width:14px;height:15px;background:#00F000"></div>
<div style="left:4px;top:606px;width:436px;height:1px;background:#D4D0C8"></div>
<div style="left:6px;top:610px;width:10px;height:10px;background:#fff;border:1px solid #C0C0C0"></div>
<div style="left:9px;top:614px;width:5px;height:1px;background:#000"></div>
<div style="left:11px;top:612px;width:1px;height:5px;background:#000"></div>
<svg style="left:19px;top:611px" width="12" height="12" viewBox="0 0 12 12"><circle cx="6" cy="6" r="5.5" fill="#00F000"/></svg>
<div class="t" style="left:37px;top:611px;font-family:'Liberation Sans',sans-serif;font-size:12.5px;font-weight:normal;letter-spacing:0.850px;color:#000;">Z00343086 [M: A*02:07, A*33:AANNG]</div>
<div class="t" style="left:348px;top:610px;font:12.5px 'Liberation Sans',sans-serif;letter-spacing:1.1px;color:#000">A</div>
<div style="left:391px;top:609px;width:14px;height:15px;background:#FFFF00"></div>
<div style="left:4px;top:624px;width:436px;height:1px;background:#D4D0C8"></div>
<div style="left:6px;top:628px;width:10px;height:10px;background:#fff;border:1px solid #C0C0C0"></div>
<div style="left:9px;top:632px;width:5px;height:1px;background:#000"></div>
<div style="left:11px;top:630px;width:1px;height:5px;background:#000"></div>
<svg style="left:19px;top:629px" width="12" height="12" viewBox="0 0 12 12"><circle cx="6" cy="6" r="5.5" fill="#00F000"/></svg>
<div class="t" style="left:37px;top:629px;font-family:'Liberation Sans',sans-serif;font-size:12.5px;font-weight:normal;letter-spacing:0.850px;color:#000;">Z00343087 [M: A*02:07, A*33:AANNG]</div>
<div class="t" style="left:348px;top:628px;font:12.5px 'Liberation Sans',sans-serif;letter-spacing:1.1px;color:#000">A</div>
<div style="left:391px;top:627px;width:14px;height:15px;background:#FFFF00"></div>
<div style="left:4px;top:642px;width:436px;height:1px;background:#D4D0C8"></div>
<div style="left:6px;top:646px;width:10px;height:10px;background:#fff;border:1px solid #C0C0C0"></div>
<div style="left:9px;top:650px;width:5px;height:1px;background:#000"></div>
<div style="left:11px;top:648px;width:1px;height:5px;background:#000"></div>
<svg style="left:19px;top:647px" width="12" height="12" viewBox="0 0 12 12"><circle cx="6" cy="6" r="5.5" fill="#00F000"/></svg>
<div class="t" style="left:37px;top:647px;font-family:'Liberation Sans',sans-serif;font-size:12.5px;font-weight:normal;letter-spacing:0.795px;color:#000;">Z00343089  (Z1 and Z5)</div>
<div class="t" style="left:348px;top:646px;font:12.5px 'Liberation Sans',sans-serif;letter-spacing:1.1px;color:#000">A</div>
<div style="left:391px;top:645px;width:14px;height:15px;background:#FFFF00"></div>
<div style="left:4px;top:660px;width:436px;height:1px;background:#D4D0C8"></div>
<div style="left:6px;top:664px;width:10px;height:10px;background:#fff;border:1px solid #C0C0C0"></div>
<div style="left:9px;top:668px;width:5px;height:1px;background:#000"></div>
<div style="left:11px;top:666px;width:1px;height:5px;background:#000"></div>
<svg style="left:18px;top:665px" width="12" height="12" viewBox="0 0 12 12"><path d="M6 0.5a5.5 5.5 0 0 0 0 11z" fill="#00F000"/><path d="M6 0.5a5.5 5.5 0 0 1 0 11z" fill="#FF0000"/><rect x="5.5" y="0" width="1" height="12" fill="#408040" opacity=".6"/></svg>
<div class="t" style="left:37px;top:665px;font-family:'Liberation Sans',sans-serif;font-size:12.5px;font-weight:normal;letter-spacing:1.082px;color:#000;">Z00343090</div>
<div class="t" style="left:348px;top:664px;font:12.5px 'Liberation Sans',sans-serif;letter-spacing:1.1px;color:#000">A</div>
<div style="left:391px;top:663px;width:14px;height:15px;background:#FFFF00"></div>
<div style="left:4px;top:678px;width:436px;height:1px;background:#D4D0C8"></div>
<div style="left:6px;top:682px;width:10px;height:10px;background:#fff;border:1px solid #C0C0C0"></div>
<div style="left:9px;top:686px;width:5px;height:1px;background:#000"></div>
<div style="left:11px;top:684px;width:1px;height:5px;background:#000"></div>
<svg style="left:19px;top:683px" width="12" height="12" viewBox="0 0 12 12"><circle cx="6" cy="6" r="5.5" fill="#00F000"/><circle cx="6" cy="6" r="2.2" fill="#FF0000"/></svg>
<div class="t" style="left:37px;top:683px;font-family:'Liberation Sans',sans-serif;font-size:12.5px;font-weight:normal;letter-spacing:1.082px;color:#000;">Z00343091</div>
<div class="t" style="left:348px;top:682px;font:12.5px 'Liberation Sans',sans-serif;letter-spacing:1.1px;color:#000">A</div>
<div style="left:391px;top:681px;width:14px;height:15px;background:#00F000"></div>
<div style="left:341px;top:84px;width:1px;height:611px;background:#D4D0C8"></div>
<div style="left:389px;top:84px;width:1px;height:611px;background:#D4D0C8"></div>
<div style="left:411px;top:84px;width:1px;height:611px;background:#D4D0C8"></div>
<div style="left:433px;top:84px;width:1px;height:611px;background:#D4D0C8"></div>
<div style="left:440px;top:65px;width:16px;height:629px;background:repeating-conic-gradient(#D4D0C8 0 25%,#FFFFFF 0 50%) 0 0/2px 2px"></div>
<div class="raised" style="left:440px;top:65px;width:16px;height:16px"></div>
<svg style="left:440px;top:65px" width="16" height="16" viewBox="0 0 16 16"><path d="M4.5 10h7l-3.5 -4z" fill="#000"/></svg>
<div class="raised" style="left:440px;top:309px;width:16px;height:211px"></div>
<div class="raised" style="left:440px;top:678px;width:16px;height:16px"></div>
<svg style="left:440px;top:678px" width="16" height="16" viewBox="0 0 16 16"><path d="M4.5 6h7l-3.5 4z" fill="#000"/></svg>
<div style="left:4px;top:694px;width:436px;height:16px;background:repeating-conic-gradient(#D4D0C8 0 25%,#FFFFFF 0 50%) 0 0/2px 2px"></div>
<div class="raised" style="left:4px;top:694px;width:16px;height:16px"></div>
<svg style="left:4px;top:694px" width="16" height="16" viewBox="0 0 16 16"><path d="M6 8l4 -4v8z" fill="#000"/></svg>
<div class="raised" style="left:18px;top:694px;width:358px;height:16px"></div>
<div class="raised" style="left:424px;top:694px;width:16px;height:16px"></div>
<svg style="left:424px;top:694px" width="16" height="16" viewBox="0 0 16 16"><path d="M10 8l-4 -4v8z" fill="#000"/></svg>
<div style="left:440px;top:694px;width:16px;height:16px;background:#D4D0C8"></div>
<div style="left:3px;top:710px;width:455px;height:1px;background:#fff"></div>
<div style="left:457px;top:65px;width:1px;height:646px;background:#fff"></div>
<div style="left:1px;top:716px;width:457px;height:1px;background:#808080"></div>
<div style="left:3px;top:717px;width:455px;height:113px;background:#fff"></div>
<div style="left:4px;top:718px;width:437px;height:16px;background:#C0C0C0"></div>
<div style="left:32px;top:718px;width:1px;height:16px;background:#F0ECD8"></div>
<div class="t" style="left:5px;top:720px;font-family:'Liberation Sans',sans-serif;font-size:12.5px;font-weight:normal;letter-spacing:-2.000px;color:#000;">MM</div>
<div style="left:170px;top:718px;width:1px;height:16px;background:#F0ECD8"></div>
<div class="t" style="left:34px;top:720px;font-family:'Liberation Sans',sans-serif;font-size:12.5px;font-weight:normal;letter-spacing:1.000px;color:#000;">(2000 +)</div>
<div style="left:297px;top:718px;width:1px;height:16px;background:#F0ECD8"></div>
<div class="t" style="left:174px;top:720px;font-family:'Liberation Sans',sans-serif;font-size:12.5px;font-weight:normal;letter-spacing:0.400px;color:#000;">Allele</div>
<div style="left:333px;top:718px;width:1px;height:16px;background:#F0ECD8"></div>
<div class="t" style="left:300px;top:720px;font-family:'Liberation Sans',sans-serif;font-size:12.5px;font-weight:normal;letter-spacing:1.333px;color:#000;">Info</div>
<div style="left:440px;top:718px;width:1px;height:16px;background:#F0ECD8"></div>
<div class="t" style="left:336px;top:720px;font-family:'Liberation Sans',sans-serif;font-size:12.5px;font-weight:normal;letter-spacing:0.727px;color:#000;">Show Options</div>
<div style="left:334px;top:717px;width:107px;height:1px;background:#40E0E0"></div>
<div style="left:334px;top:733px;width:107px;height:1px;background:#00A0A0"></div>
<div style="left:4px;top:825px;width:29px;height:5px;background:#FFFF80"></div>
<div style="left:4px;top:735px;width:437px;height:17px;background:#B4B4FF"></div>
<div style="left:298px;top:735px;width:36px;height:17px;background:#80FF80"></div>
<div style="left:4px;top:752px;width:437px;height:1px;background:#F0ECD8"></div>
<div class="t" style="left:5px;top:737px;font:12.5px 'Liberation Sans',sans-serif;letter-spacing:1.25px;color:#000">0</div>
<div class="t" style="left:34px;top:738px;font-family:'Liberation Sans',sans-serif;font-size:12.5px;font-weight:normal;letter-spacing:1.333px;color:#000;">A*02:01:01:01</div>
<div class="t" style="left:174px;top:738px;font-family:'Liberation Sans',sans-serif;font-size:12.5px;font-weight:normal;letter-spacing:1.333px;color:#000;">A*29:01:01:01</div>
<div style="left:4px;top:753px;width:29px;height:17px;background:#FFFF80"></div>
<div style="left:4px;top:770px;width:437px;height:1px;background:#F0ECD8"></div>
<div class="t" style="left:5px;top:755px;font:12.5px 'Liberation Sans',sans-serif;letter-spacing:1.25px;color:#000">0*</div>
<div class="t" style="left:34px;top:756px;font-family:'Liberation Sans',sans-serif;font-size:12.5px;font-weight:normal;letter-spacing:1.333px;color:#000;">A*02:01:01:01</div>
<div class="t" style="left:174px;top:756px;font-family:'Liberation Sans',sans-serif;font-size:12.5px;font-weight:normal;letter-spacing:1.192px;color:#000;">A*29:01:01:02N</div>
<div class="t" style="left:300px;top:755px;font:12.5px 'Liberation Sans',sans-serif;letter-spacing:1.25px;color:#000">-r</div>
<div style="left:4px;top:788px;width:437px;height:1px;background:#F0ECD8"></div>
<div class="t" style="left:5px;top:773px;font:12.5px 'Liberation Sans',sans-serif;letter-spacing:1.25px;color:#000">0</div>
<div class="t" style="left:34px;top:774px;font-family:'Liberation Sans',sans-serif;font-size:12.5px;font-weight:normal;letter-spacing:1.231px;color:#000;">A*02:01:01:02L</div>
<div class="t" style="left:174px;top:774px;font-family:'Liberation Sans',sans-serif;font-size:12.5px;font-weight:normal;letter-spacing:1.333px;color:#000;">A*29:01:01:01</div>
<div class="t" style="left:300px;top:773px;font:12.5px 'Liberation Sans',sans-serif;letter-spacing:1.25px;color:#000">r-</div>
<div style="left:4px;top:789px;width:29px;height:17px;background:#FFFF80"></div>
<div style="left:4px;top:806px;width:437px;height:1px;background:#F0ECD8"></div>
<div class="t" style="left:5px;top:791px;font:12.5px 'Liberation Sans',sans-serif;letter-spacing:1.25px;color:#000">0*</div>
<div class="t" style="left:34px;top:792px;font-family:'Liberation Sans',sans-serif;font-size:12.5px;font-weight:normal;letter-spacing:1.231px;color:#000;">A*02:01:01:02L</div>
<div class="t" style="left:174px;top:792px;font-family:'Liberation Sans',sans-serif;font-size:12.5px;font-weight:normal;letter-spacing:1.192px;color:#000;">A*29:01:01:02N</div>
<div class="t" style="left:300px;top:791px;font:12.5px 'Liberation Sans',sans-serif;letter-spacing:1.25px;color:#000">rr</div>
<div style="left:4px;top:824px;width:437px;height:1px;background:#F0ECD8"></div>
<div class="t" style="left:5px;top:809px;font:12.5px 'Liberation Sans',sans-serif;letter-spacing:1.25px;color:#000">0</div>
<div class="t" style="left:34px;top:810px;font-family:'Liberation Sans',sans-serif;font-size:12.5px;font-weight:normal;letter-spacing:1.333px;color:#000;">A*02:01:01:03</div>
<div class="t" style="left:174px;top:810px;font-family:'Liberation Sans',sans-serif;font-size:12.5px;font-weight:normal;letter-spacing:1.333px;color:#000;">A*29:01:01:01</div>
<div class="t" style="left:300px;top:809px;font:12.5px 'Liberation Sans',sans-serif;letter-spacing:1.25px;color:#000">r-</div>
<div style="left:32px;top:735px;width:1px;height:95px;background:#F0ECD8"></div>
<div style="left:170px;top:735px;width:1px;height:95px;background:#F0ECD8"></div>
<div style="left:297px;top:735px;width:1px;height:95px;background:#F0ECD8"></div>
<div style="left:333px;top:735px;width:1px;height:95px;background:#F0ECD8"></div>
<div style="left:441px;top:718px;width:16px;height:111px;background:repeating-conic-gradient(#D4D0C8 0 25%,#FFFFFF 0 50%) 0 0/2px 2px"></div>
<div class="raised" style="left:441px;top:718px;width:16px;height:16px"></div>
<svg style="left:441px;top:718px" width="16" height="16" viewBox="0 0 16 16"><path d="M4.5 10h7l-3.5 -4z" fill="#000"/></svg>
<div class="raised" style="left:441px;top:734px;width:16px;height:8px"></div>
<div class="raised" style="left:441px;top:813px;width:16px;height:16px"></div>
<svg style="left:441px;top:813px" width="16" height="16" viewBox="0 0 16 16"><path d="M4.5 6h7l-3.5 4z" fill="#000"/></svg>
<div style="left:465px;top:63px;width:1px;height:767px;background:#808080"></div>
<div style="left:467px;top:65px;width:1px;height:222px;background:#808080"></div>
<div style="left:467px;top:292px;width:1px;height:538px;background:#808080"></div>
<div style="left:465px;top:63px;width:1135px;height:1px;background:#808080"></div>
<div style="left:468px;top:65px;width:1127px;height:1px;background:#808080"></div>
<div style="left:468px;top:66px;width:1127px;height:55px;background:#E6F8E6"></div>
<div style="left:838px;top:66px;width:378px;height:55px;background:#F8E6F8"></div>
<div style="left:468px;top:120px;width:1127px;height:1px;background:#fff"></div>
<div style="left:1594px;top:66px;width:2px;height:55px;background:#fff"></div>
<svg style="left:468px;top:66px" width="1127" height="54"><defs><linearGradient id="exg" x1="0" y1="0" x2="0" y2="1"><stop offset="0" stop-color="#A8E4F0"/><stop offset="1" stop-color="#B8F0C8"/></linearGradient></defs><g transform="translate(138.5,8.3)"><path d="M15.5,2 H4.5 Q2,2 2,4.5 V18.8 Q2,21.3 4.5,21.3 H15.5 M2,11.3 H14.5" fill="none" stroke="url(#exg)" stroke-width="4" stroke-linejoin="round"/><path d="M15.5,2 H4.5 Q2,2 2,4.5 V18.8 Q2,21.3 4.5,21.3 H15.5 M2,11.3 H14.5" fill="none" stroke="#E6F6F0" stroke-opacity="0.85" stroke-width="2" stroke-linejoin="round"/></g><g transform="translate(155.7,8.3)"><path d="M2,7 L13.3,21.3 M13.3,7 L2,21.3" fill="none" stroke="url(#exg)" stroke-width="4" stroke-linejoin="round"/><path d="M2,7 L13.3,21.3 M13.3,7 L2,21.3" fill="none" stroke="#E6F6F0" stroke-opacity="0.85" stroke-width="2" stroke-linejoin="round"/></g><g transform="translate(173.0,8.3)"><path d="M5,7 H9.7 Q12.7,7 12.7,10 V18.3 Q12.7,21.3 9.7,21.3 H5 Q2,21.3 2,18.3 V10 Q2,7 5,7 Z" fill="none" stroke="url(#exg)" stroke-width="4" stroke-linejoin="round"/><path d="M5,7 H9.7 Q12.7,7 12.7,10 V18.3 Q12.7,21.3 9.7,21.3 H5 Q2,21.3 2,18.3 V10 Q2,7 5,7 Z" fill="none" stroke="#E6F6F0" stroke-opacity="0.85" stroke-width="2" stroke-linejoin="round"/></g><g transform="translate(191.0,8.3)"><path d="M2,21.3 V10 Q2,7 5,7 H10 Q13,7 13,10 V21.3" fill="none" stroke="url(#exg)" stroke-width="4" stroke-linejoin="round"/><path d="M2,21.3 V10 Q2,7 5,7 H10 Q13,7 13,10 V21.3" fill="none" stroke="#E6F6F0" stroke-opacity="0.85" stroke-width="2" stroke-linejoin="round"/></g><g transform="translate(218.6,8.3)"><path d="M2,2 H10.5 Q13.2,2 13.2,4.5 V8.5 Q13.2,11.2 10.5,11.2 H4.5 Q2,11.2 2,13.7 V21.3 H15.2" fill="none" stroke="url(#exg)" stroke-width="4" stroke-linejoin="round"/><path d="M2,2 H10.5 Q13.2,2 13.2,4.5 V8.5 Q13.2,11.2 10.5,11.2 H4.5 Q2,11.2 2,13.7 V21.3 H15.2" fill="none" stroke="#E6F6F0" stroke-opacity="0.85" stroke-width="2" stroke-linejoin="round"/></g><g transform="translate(512.0,8.3)"><path d="M15.5,2 H4.5 Q2,2 2,4.5 V18.8 Q2,21.3 4.5,21.3 H15.5 M2,11.3 H14.5" fill="none" stroke="url(#exg)" stroke-width="4" stroke-linejoin="round"/><path d="M15.5,2 H4.5 Q2,2 2,4.5 V18.8 Q2,21.3 4.5,21.3 H15.5 M2,11.3 H14.5" fill="none" stroke="#E6F6F0" stroke-opacity="0.85" stroke-width="2" stroke-linejoin="round"/></g><g transform="translate(529.2,8.3)"><path d="M2,7 L13.3,21.3 M13.3,7 L2,21.3" fill="none" stroke="url(#exg)" stroke-width="4" stroke-linejoin="round"/><path d="M2,7 L13.3,21.3 M13.3,7 L2,21.3" fill="none" stroke="#E6F6F0" stroke-opacity="0.85" stroke-width="2" stroke-linejoin="round"/></g><g transform="translate(546.5,8.3)"><path d="M5,7 H9.7 Q12.7,7 12.7,10 V18.3 Q12.7,21.3 9.7,21.3 H5 Q2,21.3 2,18.3 V10 Q2,7 5,7 Z" fill="none" stroke="url(#exg)" stroke-width="4" stroke-linejoin="round"/><path d="M5,7 H9.7 Q12.7,7 12.7,10 V18.3 Q12.7,21.3 9.7,21.3 H5 Q2,21.3 2,18.3 V10 Q2,7 5,7 Z" fill="none" stroke="#E6F6F0" stroke-opacity="0.85" stroke-width="2" stroke-linejoin="round"/></g><g transform="translate(564.5,8.3)"><path d="M2,21.3 V10 Q2,7 5,7 H10 Q13,7 13,10 V21.3" fill="none" stroke="url(#exg)" stroke-width="4" stroke-linejoin="round"/><path d="M2,21.3 V10 Q2,7 5,7 H10 Q13,7 13,10 V21.3" fill="none" stroke="#E6F6F0" stroke-opacity="0.85" stroke-width="2" stroke-linejoin="round"/></g><g transform="translate(592.1,8.3)"><path d="M2,2 H10.5 Q13,2 13,4.5 V18.8 Q13,21.3 10.5,21.3 H2 M5,11.8 H13" fill="none" stroke="url(#exg)" stroke-width="4" stroke-linejoin="round"/><path d="M2,2 H10.5 Q13,2 13,4.5 V18.8 Q13,21.3 10.5,21.3 H2 M5,11.8 H13" fill="none" stroke="#E6F6F0" stroke-opacity="0.85" stroke-width="2" stroke-linejoin="round"/></g><g transform="translate(889.5,8.3)"><path d="M15.5,2 H4.5 Q2,2 2,4.5 V18.8 Q2,21.3 4.5,21.3 H15.5 M2,11.3 H14.5" fill="none" stroke="url(#exg)" stroke-width="4" stroke-linejoin="round"/><path d="M15.5,2 H4.5 Q2,2 2,4.5 V18.8 Q2,21.3 4.5,21.3 H15.5 M2,11.3 H14.5" fill="none" stroke="#E6F6F0" stroke-opacity="0.85" stroke-width="2" stroke-linejoin="round"/></g><g transform="translate(906.7,8.3)"><path d="M2,7 L13.3,21.3 M13.3,7 L2,21.3" fill="none" stroke="url(#exg)" stroke-width="4" stroke-linejoin="round"/><path d="M2,7 L13.3,21.3 M13.3,7 L2,21.3" fill="none" stroke="#E6F6F0" stroke-opacity="0.85" stroke-width="2" stroke-linejoin="round"/></g><g transform="translate(924.0,8.3)"><path d="M5,7 H9.7 Q12.7,7 12.7,10 V18.3 Q12.7,21.3 9.7,21.3 H5 Q2,21.3 2,18.3 V10 Q2,7 5,7 Z" fill="none" stroke="url(#exg)" stroke-width="4" stroke-linejoin="round"/><path d="M5,7 H9.7 Q12.7,7 12.7,10 V18.3 Q12.7,21.3 9.7,21.3 H5 Q2,21.3 2,18.3 V10 Q2,7 5,7 Z" fill="none" stroke="#E6F6F0" stroke-opacity="0.85" stroke-width="2" stroke-linejoin="round"/></g><g transform="translate(942.0,8.3)"><path d="M2,21.3 V10 Q2,7 5,7 H10 Q13,7 13,10 V21.3" fill="none" stroke="url(#exg)" stroke-width="4" stroke-linejoin="round"/><path d="M2,21.3 V10 Q2,7 5,7 H10 Q13,7 13,10 V21.3" fill="none" stroke="#E6F6F0" stroke-opacity="0.85" stroke-width="2" stroke-linejoin="round"/></g><g transform="translate(969.6,8.3)"><path d="M12,21.3 V2 L2,14.2 H14.5" fill="none" stroke="url(#exg)" stroke-width="4" stroke-linejoin="round"/><path d="M12,21.3 V2 L2,14.2 H14.5" fill="none" stroke="#E6F6F0" stroke-opacity="0.85" stroke-width="2" stroke-linejoin="round"/></g></svg>
<div style="left:504px;top:69px;width:2px;height:10px;background:#000"></div>
<div style="left:567px;top:69px;width:2px;height:10px;background:#000"></div>
<div style="left:616px;top:69px;width:2px;height:10px;background:#000"></div>
<div style="left:669px;top:69px;width:2px;height:10px;background:#000"></div>
<div style="left:697px;top:69px;width:2px;height:10px;background:#000"></div>
<div style="left:719px;top:69px;width:2px;height:10px;background:#000"></div>
<div style="left:723px;top:69px;width:2px;height:10px;background:#000"></div>
<div style="left:738px;top:69px;width:2px;height:10px;background:#000"></div>
<div style="left:754px;top:69px;width:2px;height:10px;background:#000"></div>
<div style="left:768px;top:69px;width:2px;height:10px;background:#000"></div>
<div style="left:778px;top:69px;width:3px;height:10px;background:#000"></div>
<div style="left:854px;top:69px;width:2px;height:10px;background:#000"></div>
<div style="left:863px;top:69px;width:2px;height:10px;background:#000"></div>
<div style="left:903px;top:69px;width:2px;height:10px;background:#000"></div>
<div style="left:933px;top:69px;width:2px;height:10px;background:#000"></div>
<div style="left:939px;top:69px;width:2px;height:10px;background:#000"></div>
<div style="left:980px;top:69px;width:2px;height:10px;background:#000"></div>
<div style="left:987px;top:69px;width:2px;height:10px;background:#000"></div>
<div style="left:1036px;top:69px;width:2px;height:10px;background:#000"></div>
<div style="left:1047px;top:69px;width:2px;height:10px;background:#000"></div>
<div style="left:1054px;top:69px;width:2px;height:10px;background:#000"></div>
<div style="left:1059px;top:69px;width:2px;height:10px;background:#000"></div>
<div style="left:1062px;top:69px;width:2px;height:10px;background:#000"></div>
<div style="left:1084px;top:69px;width:2px;height:10px;background:#000"></div>
<div style="left:1089px;top:69px;width:2px;height:10px;background:#000"></div>
<div style="left:1097px;top:69px;width:2px;height:10px;background:#000"></div>
<div style="left:1228px;top:69px;width:2px;height:10px;background:#000"></div>
<div style="left:1277px;top:69px;width:2px;height:10px;background:#000"></div>
<div style="left:1407px;top:69px;width:2px;height:10px;background:#000"></div>
<div style="left:1470px;top:69px;width:2px;height:10px;background:#000"></div>
<div style="left:1551px;top:69px;width:2px;height:10px;background:#000"></div>
<div style="left:882px;top:69px;width:2px;height:10px;background:#2020FF"></div>
<div style="left:1025px;top:67px;width:60px;height:25px;border:1px solid #000;border-top-color:#808080;border-right-width:2px;border-bottom-width:2px"></div>
<div style="left:1054px;top:78px;width:3px;height:3px;background:#00E000"></div>
<div class="t" style="left:468px;top:102px;font-family:'Liberation Mono',monospace;font-size:12px;font-weight:bold;letter-spacing:0.500px;color:#000;">822</div>
<div style="left:505px;top:110px;width:333px;height:2px;background:#2E8B2E"></div>
<div style="left:875px;top:110px;width:719px;height:2px;background:#2E8B2E"></div>
<div style="left:468px;top:114px;width:250px;height:2px;background:#7070FF"></div>
<div style="left:838px;top:114px;width:259px;height:2px;background:#7070FF"></div>
<div style="left:468px;top:127px;width:1127px;height:1px;background:#808080"></div>
<div style="left:469px;top:128px;width:1px;height:159px;background:#808080"></div>
<div style="left:470px;top:128px;width:1125px;height:1px;background:#404040"></div>
<div style="left:476px;top:129px;width:1px;height:158px;background:#404040"></div>
<div style="left:477px;top:129px;width:1117px;height:157px;background:#fff"></div>
<div style="left:477px;top:130px;width:1117px;height:13px;background:#BEBEBE"></div>
<div style="left:477px;top:171px;width:1117px;height:14px;background:#E0FFFF"></div>
<div style="left:477px;top:185px;width:1117px;height:14px;background:#E0E0FF"></div>
<div style="left:477px;top:199px;width:1117px;height:42px;background:#F0F0F0"></div>
<div style="left:1035px;top:171px;width:20px;height:115px;background:#CCF8CC"></div>
<div style="left:497px;top:145px;width:18px;height:12px;background:#FFFF00"></div>
<div style="left:517px;top:145px;width:18px;height:12px;background:#FFFF00"></div>
<div style="left:537px;top:145px;width:18px;height:12px;background:#FFFF00"></div>
<div style="left:557px;top:145px;width:18px;height:12px;background:#FFFF00"></div>
<div style="left:577px;top:145px;width:18px;height:12px;background:#FFFF00"></div>
<div style="left:637px;top:145px;width:18px;height:12px;background:#FFFF00"></div>
<div style="left:677px;top:145px;width:18px;height:12px;background:#FFFF00"></div>
<div style="left:697px;top:145px;width:18px;height:12px;background:#FFFF00"></div>
<div style="left:737px;top:145px;width:18px;height:12px;background:#FFFF00"></div>
<div style="left:757px;top:145px;width:18px;height:12px;background:#FFFF00"></div>
<div style="left:777px;top:145px;width:18px;height:12px;background:#000"></div>
<div style="left:797px;top:145px;width:18px;height:12px;background:#FFFF00"></div>
<div style="left:857px;top:145px;width:18px;height:12px;background:#FFFF00"></div>
<div style="left:877px;top:145px;width:18px;height:12px;background:#FFFF00"></div>
<div style="left:917px;top:145px;width:18px;height:12px;background:#FFFF00"></div>
<div style="left:937px;top:145px;width:18px;height:12px;background:#000"></div>
<div style="left:977px;top:145px;width:18px;height:12px;background:#FFFF00"></div>
<div style="left:997px;top:145px;width:18px;height:12px;background:#FFFF00"></div>
<div style="left:1017px;top:145px;width:18px;height:12px;background:#FFFF00"></div>
<div style="left:1037px;top:145px;width:18px;height:12px;background:#000"></div>
<div style="left:1097px;top:145px;width:18px;height:12px;background:#FFFF00"></div>
<div style="left:1117px;top:145px;width:18px;height:12px;background:#000"></div>
<div style="left:1137px;top:145px;width:18px;height:12px;background:#FFFF00"></div>
<div style="left:1157px;top:145px;width:18px;height:12px;background:#000"></div>
<div style="left:1177px;top:145px;width:18px;height:12px;background:#FFFF00"></div>
<div style="left:1197px;top:145px;width:18px;height:12px;background:#FFFF00"></div>
<div style="left:1237px;top:145px;width:18px;height:12px;background:#FFFF00"></div>
<div style="left:1277px;top:145px;width:18px;height:12px;background:#FFFF00"></div>
<div style="left:1337px;top:145px;width:18px;height:12px;background:#FFFF00"></div>
<div style="left:1357px;top:145px;width:18px;height:12px;background:#FFFF00"></div>
<div style="left:1377px;top:145px;width:18px;height:12px;background:#FFFF00"></div>
<div style="left:1397px;top:145px;width:18px;height:12px;background:#FFFF00"></div>
<div style="left:1417px;top:145px;width:18px;height:12px;background:#FFFF00"></div>
<div style="left:1437px;top:145px;width:18px;height:12px;background:#FFFF00"></div>
<div style="left:1457px;top:145px;width:18px;height:12px;background:#FFFF00"></div>
<div style="left:1477px;top:145px;width:18px;height:12px;background:#000"></div>
<div style="left:1517px;top:145px;width:18px;height:12px;background:#FFFF00"></div>
<div style="left:1537px;top:145px;width:18px;height:12px;background:#FFFF00"></div>
<div style="left:1557px;top:145px;width:18px;height:12px;background:#000"></div>
<div style="left:1577px;top:145px;width:18px;height:12px;background:#FFFF00"></div>
<div style="left:477px;top:143px;width:1117px;height:1px;background:#ECE8D0"></div>
<div style="left:477px;top:157px;width:1117px;height:1px;background:#ECE8D0"></div>
<div style="left:477px;top:171px;width:1117px;height:1px;background:#ECE8D0"></div>
<div style="left:477px;top:185px;width:1117px;height:1px;background:#ECE8D0"></div>
<div style="left:477px;top:199px;width:1117px;height:1px;background:#ECE8D0"></div>
<div style="left:477px;top:213px;width:1117px;height:1px;background:#ECE8D0"></div>
<div style="left:477px;top:227px;width:1117px;height:1px;background:#ECE8D0"></div>
<div style="left:477px;top:241px;width:1117px;height:1px;background:#ECE8D0"></div>
<div style="left:477px;top:255px;width:1117px;height:1px;background:#ECE8D0"></div>
<div style="left:477px;top:269px;width:1117px;height:1px;background:#ECE8D0"></div>
<div style="left:495px;top:130px;width:1px;height:140px;background:#ECE8D0"></div>
<div style="left:515px;top:130px;width:1px;height:140px;background:#ECE8D0"></div>
<div style="left:535px;top:130px;width:1px;height:140px;background:#ECE8D0"></div>
<div style="left:555px;top:130px;width:1px;height:140px;background:#ECE8D0"></div>
<div style="left:575px;top:130px;width:1px;height:140px;background:#ECE8D0"></div>
<div style="left:595px;top:130px;width:1px;height:140px;background:#ECE8D0"></div>
<div style="left:615px;top:130px;width:1px;height:140px;background:#ECE8D0"></div>
<div style="left:635px;top:130px;width:1px;height:140px;background:#ECE8D0"></div>
<div style="left:655px;top:130px;width:1px;height:140px;background:#ECE8D0"></div>
<div style="left:675px;top:130px;width:1px;height:140px;background:#ECE8D0"></div>
<div style="left:695px;top:130px;width:1px;height:140px;background:#ECE8D0"></div>
<div style="left:715px;top:130px;width:1px;height:140px;background:#ECE8D0"></div>
<div style="left:735px;top:130px;width:1px;height:140px;background:#ECE8D0"></div>
<div style="left:755px;top:130px;width:1px;height:140px;background:#ECE8D0"></div>
<div style="left:775px;top:130px;width:1px;height:140px;background:#ECE8D0"></div>
<div style="left:795px;top:130px;width:1px;height:140px;background:#ECE8D0"></div>
<div style="left:815px;top:130px;width:1px;height:140px;background:#ECE8D0"></div>
<div style="left:835px;top:130px;width:1px;height:140px;background:#ECE8D0"></div>
<div style="left:855px;top:130px;width:1px;height:140px;background:#ECE8D0"></div>
<div style="left:875px;top:130px;width:1px;height:140px;background:#ECE8D0"></div>
<div style="left:895px;top:130px;width:1px;height:140px;background:#ECE8D0"></div>
<div style="left:915px;top:130px;width:1px;height:140px;background:#ECE8D0"></div>
<div style="left:935px;top:130px;width:1px;height:140px;background:#ECE8D0"></div>
<div style="left:955px;top:130px;width:1px;height:140px;background:#ECE8D0"></div>
<div style="left:975px;top:130px;width:1px;height:140px;background:#ECE8D0"></div>
<div style="left:995px;top:130px;width:1px;height:140px;background:#ECE8D0"></div>
<div style="left:1015px;top:130px;width:1px;height:140px;background:#ECE8D0"></div>
<div style="left:1035px;top:130px;width:1px;height:140px;background:#ECE8D0"></div>
<div style="left:1055px;top:130px;width:1px;height:140px;background:#ECE8D0"></div>
<div style="left:1075px;top:130px;width:1px;height:140px;background:#ECE8D0"></div>
<div style="left:1095px;top:130px;width:1px;height:140px;background:#ECE8D0"></div>
<div style="left:1115px;top:130px;width:1px;height:140px;background:#ECE8D0"></div>
<div style="left:1135px;top:130px;width:1px;height:140px;background:#ECE8D0"></div>
<div style="left:1155px;top:130px;width:1px;height:140px;background:#ECE8D0"></div>
<div style="left:1175px;top:130px;width:1px;height:140px;background:#ECE8D0"></div>
<div style="left:1195px;top:130px;width:1px;height:140px;background:#ECE8D0"></div>
<div style="left:1215px;top:130px;width:1px;height:140px;background:#ECE8D0"></div>
<div style="left:1235px;top:130px;width:1px;height:140px;background:#ECE8D0"></div>
<div style="left:1255px;top:130px;width:1px;height:140px;background:#ECE8D0"></div>
<div style="left:1275px;top:130px;width:1px;height:140px;background:#ECE8D0"></div>
<div style="left:1295px;top:130px;width:1px;height:140px;background:#ECE8D0"></div>
<div style="left:1315px;top:130px;width:1px;height:140px;background:#ECE8D0"></div>
<div style="left:1335px;top:130px;width:1px;height:140px;background:#ECE8D0"></div>
<div style="left:1355px;top:130px;width:1px;height:140px;background:#ECE8D0"></div>
<div style="left:1375px;top:130px;width:1px;height:140px;background:#ECE8D0"></div>
<div style="left:1395px;top:130px;width:1px;height:140px;background:#ECE8D0"></div>
<div style="left:1415px;top:130px;width:1px;height:140px;background:#ECE8D0"></div>
<div style="left:1435px;top:130px;width:1px;height:140px;background:#ECE8D0"></div>
<div style="left:1455px;top:130px;width:1px;height:140px;background:#ECE8D0"></div>
<div style="left:1475px;top:130px;width:1px;height:140px;background:#ECE8D0"></div>
<div style="left:1495px;top:130px;width:1px;height:140px;background:#ECE8D0"></div>
<div style="left:1515px;top:130px;width:1px;height:140px;background:#ECE8D0"></div>
<div style="left:1535px;top:130px;width:1px;height:140px;background:#ECE8D0"></div>
<div style="left:1555px;top:130px;width:1px;height:140px;background:#ECE8D0"></div>
<div style="left:1575px;top:130px;width:1px;height:140px;background:#ECE8D0"></div>
<div class="t" style="left:499px;top:173px;font:11.5px 'Liberation Sans',sans-serif;color:#000">N</div>
<div class="t" style="left:499px;top:215px;font:11.5px 'Liberation Sans',sans-serif;color:#00C000">G</div>
<div style="left:501px;top:206px;width:4px;height:1px;background:#00C000"></div>
<div class="t" style="left:519px;top:173px;font:11.5px 'Liberation Sans',sans-serif;color:#000">H</div>
<div class="t" style="left:519px;top:215px;font:11.5px 'Liberation Sans',sans-serif;color:#00C000">C</div>
<div style="left:521px;top:206px;width:4px;height:1px;background:#00C000"></div>
<div class="t" style="left:539px;top:173px;font:11.5px 'Liberation Sans',sans-serif;color:#000">N</div>
<div class="t" style="left:539px;top:215px;font:11.5px 'Liberation Sans',sans-serif;color:#00C000">G</div>
<div style="left:541px;top:206px;width:4px;height:1px;background:#00C000"></div>
<div class="t" style="left:559px;top:173px;font:11.5px 'Liberation Sans',sans-serif;color:#000">R</div>
<div class="t" style="left:559px;top:215px;font:11.5px 'Liberation Sans',sans-serif;color:#00C000">G</div>
<div style="left:561px;top:206px;width:4px;height:1px;background:#00C000"></div>
<div class="t" style="left:579px;top:173px;font:11.5px 'Liberation Sans',sans-serif;color:#000">N</div>
<div class="t" style="left:579px;top:215px;font:11.5px 'Liberation Sans',sans-serif;color:#00C000">C</div>
<div style="left:581px;top:206px;width:4px;height:1px;background:#00C000"></div>
<div class="t" style="left:599px;top:173px;font:11.5px 'Liberation Sans',sans-serif;color:#000">N</div>
<div class="t" style="left:599px;top:215px;font:11.5px 'Liberation Sans',sans-serif;color:#00C000">G</div>
<div style="left:601px;top:206px;width:4px;height:1px;background:#00C000"></div>
<div class="t" style="left:619px;top:173px;font:11.5px 'Liberation Sans',sans-serif;color:#000">G</div>
<div class="t" style="left:619px;top:215px;font:11.5px 'Liberation Sans',sans-serif;color:#00C000">G</div>
<div style="left:621px;top:206px;width:4px;height:1px;background:#00C000"></div>
<div class="t" style="left:639px;top:173px;font:11.5px 'Liberation Sans',sans-serif;color:#000">N</div>
<div class="t" style="left:639px;top:215px;font:11.5px 'Liberation Sans',sans-serif;color:#00C000">A</div>
<div style="left:641px;top:206px;width:4px;height:1px;background:#00C000"></div>
<div class="t" style="left:659px;top:173px;font:11.5px 'Liberation Sans',sans-serif;color:#000">B</div>
<div class="t" style="left:659px;top:215px;font:11.5px 'Liberation Sans',sans-serif;color:#00C000">C</div>
<div style="left:661px;top:206px;width:4px;height:1px;background:#00C000"></div>
<div class="t" style="left:679px;top:173px;font:11.5px 'Liberation Sans',sans-serif;color:#000">N</div>
<div class="t" style="left:679px;top:215px;font:11.5px 'Liberation Sans',sans-serif;color:#00C000">A</div>
<div style="left:681px;top:206px;width:4px;height:1px;background:#00C000"></div>
<div class="t" style="left:699px;top:173px;font:11.5px 'Liberation Sans',sans-serif;color:#000">N</div>
<div class="t" style="left:699px;top:215px;font:11.5px 'Liberation Sans',sans-serif;color:#00C000">T</div>
<div style="left:701px;top:206px;width:4px;height:1px;background:#00C000"></div>
<div class="t" style="left:719px;top:173px;font:11.5px 'Liberation Sans',sans-serif;color:#000">V</div>
<div class="t" style="left:719px;top:215px;font:11.5px 'Liberation Sans',sans-serif;color:#00C000">G</div>
<div style="left:721px;top:206px;width:4px;height:1px;background:#00C000"></div>
<div class="t" style="left:739px;top:173px;font:11.5px 'Liberation Sans',sans-serif;color:#000">V</div>
<div class="t" style="left:739px;top:215px;font:11.5px 'Liberation Sans',sans-serif;color:#00C000">G</div>
<div style="left:741px;top:206px;width:4px;height:1px;background:#00C000"></div>
<div class="t" style="left:759px;top:173px;font:11.5px 'Liberation Sans',sans-serif;color:#000">N</div>
<div class="t" style="left:759px;top:215px;font:11.5px 'Liberation Sans',sans-serif;color:#00C000">C</div>
<div style="left:761px;top:206px;width:4px;height:1px;background:#00C000"></div>
<div class="t" style="left:779px;top:173px;font:11.5px 'Liberation Sans',sans-serif;color:#000">V</div>
<div class="t" style="left:779px;top:215px;font:11.5px 'Liberation Sans',sans-serif;color:#00C000">R</div>
<div style="left:776px;top:200px;width:19px;height:13px;background:#D0FFD0"></div>
<div class="t" style="left:780px;top:201px;font:11.5px 'Liberation Sans',sans-serif;color:#00C000">r</div>
<div class="t" style="left:799px;top:173px;font:11.5px 'Liberation Sans',sans-serif;color:#000">D</div>
<div class="t" style="left:799px;top:215px;font:11.5px 'Liberation Sans',sans-serif;color:#00C000">G</div>
<div style="left:801px;top:206px;width:4px;height:1px;background:#00C000"></div>
<div class="t" style="left:819px;top:173px;font:11.5px 'Liberation Sans',sans-serif;color:#000">C</div>
<div class="t" style="left:819px;top:215px;font:11.5px 'Liberation Sans',sans-serif;color:#00C000">C</div>
<div style="left:821px;top:206px;width:4px;height:1px;background:#00C000"></div>
<div class="t" style="left:839px;top:173px;font:11.5px 'Liberation Sans',sans-serif;color:#000">H</div>
<div class="t" style="left:839px;top:215px;font:11.5px 'Liberation Sans',sans-serif;color:#00C000">T</div>
<div style="left:841px;top:206px;width:4px;height:1px;background:#00C000"></div>
<div class="t" style="left:859px;top:173px;font:11.5px 'Liberation Sans',sans-serif;color:#000">B</div>
<div class="t" style="left:859px;top:215px;font:11.5px 'Liberation Sans',sans-serif;color:#00C000">C</div>
<div style="left:861px;top:206px;width:4px;height:1px;background:#00C000"></div>
<div class="t" style="left:879px;top:173px;font:11.5px 'Liberation Sans',sans-serif;color:#000">V</div>
<div class="t" style="left:879px;top:215px;font:11.5px 'Liberation Sans',sans-serif;color:#00C000">A</div>
<div style="left:881px;top:206px;width:4px;height:1px;background:#00C000"></div>
<div class="t" style="left:899px;top:173px;font:11.5px 'Liberation Sans',sans-serif;color:#000">S</div>
<div class="t" style="left:899px;top:215px;font:11.5px 'Liberation Sans',sans-serif;color:#00C000">G</div>
<div style="left:901px;top:206px;width:4px;height:1px;background:#00C000"></div>
<div class="t" style="left:919px;top:173px;font:11.5px 'Liberation Sans',sans-serif;color:#000">H</div>
<div class="t" style="left:919px;top:215px;font:11.5px 'Liberation Sans',sans-serif;color:#00C000">A</div>
<div style="left:921px;top:206px;width:4px;height:1px;background:#00C000"></div>
<div class="t" style="left:939px;top:173px;font:11.5px 'Liberation Sans',sans-serif;color:#000">Y</div>
<div class="t" style="left:939px;top:215px;font:11.5px 'Liberation Sans',sans-serif;color:#00C000">Y</div>
<div style="left:936px;top:200px;width:19px;height:13px;background:#D0FFD0"></div>
<div class="t" style="left:940px;top:201px;font:11.5px 'Liberation Sans',sans-serif;color:#00C000">y</div>
<div class="t" style="left:959px;top:173px;font:11.5px 'Liberation Sans',sans-serif;color:#000">H</div>
<div class="t" style="left:959px;top:215px;font:11.5px 'Liberation Sans',sans-serif;color:#00C000">C</div>
<div style="left:961px;top:206px;width:4px;height:1px;background:#00C000"></div>
<div class="t" style="left:979px;top:173px;font:11.5px 'Liberation Sans',sans-serif;color:#000">V</div>
<div class="t" style="left:979px;top:215px;font:11.5px 'Liberation Sans',sans-serif;color:#00C000">A</div>
<div style="left:981px;top:206px;width:4px;height:1px;background:#00C000"></div>
<div class="t" style="left:999px;top:173px;font:11.5px 'Liberation Sans',sans-serif;color:#000">B</div>
<div class="t" style="left:999px;top:215px;font:11.5px 'Liberation Sans',sans-serif;color:#00C000">C</div>
<div style="left:1001px;top:206px;width:4px;height:1px;background:#00C000"></div>
<div class="t" style="left:1019px;top:173px;font:11.5px 'Liberation Sans',sans-serif;color:#000">N</div>
<div class="t" style="left:1019px;top:215px;font:11.5px 'Liberation Sans',sans-serif;color:#00C000">C</div>
<div style="left:1021px;top:206px;width:4px;height:1px;background:#00C000"></div>
<div class="t" style="left:1039px;top:173px;font:11.5px 'Liberation Sans',sans-serif;color:#000">V</div>
<div class="t" style="left:1039px;top:215px;font:11.5px 'Liberation Sans',sans-serif;color:#00C000">M</div>
<div style="left:1036px;top:200px;width:19px;height:13px;background:#D0FFD0"></div>
<div class="t" style="left:1040px;top:201px;font:11.5px 'Liberation Sans',sans-serif;color:#00C000">m</div>
<div class="t" style="left:1059px;top:173px;font:11.5px 'Liberation Sans',sans-serif;color:#000">R</div>
<div class="t" style="left:1059px;top:215px;font:11.5px 'Liberation Sans',sans-serif;color:#00C000">A</div>
<div style="left:1061px;top:206px;width:4px;height:1px;background:#00C000"></div>
<div class="t" style="left:1079px;top:173px;font:11.5px 'Liberation Sans',sans-serif;color:#000">S</div>
<div class="t" style="left:1079px;top:215px;font:11.5px 'Liberation Sans',sans-serif;color:#00C000">G</div>
<div style="left:1081px;top:206px;width:4px;height:1px;background:#00C000"></div>
<div class="t" style="left:1099px;top:173px;font:11.5px 'Liberation Sans',sans-serif;color:#000">H</div>
<div class="t" style="left:1099px;top:215px;font:11.5px 'Liberation Sans',sans-serif;color:#00C000">C</div>
<div style="left:1101px;top:206px;width:4px;height:1px;background:#00C000"></div>
<div class="t" style="left:1119px;top:173px;font:11.5px 'Liberation Sans',sans-serif;color:#000">N</div>
<div class="t" style="left:1119px;top:215px;font:11.5px 'Liberation Sans',sans-serif;color:#00C000">R</div>
<div style="left:1116px;top:200px;width:19px;height:13px;background:#D0FFD0"></div>
<div class="t" style="left:1120px;top:201px;font:11.5px 'Liberation Sans',sans-serif;color:#00C000">r</div>
<div class="t" style="left:1139px;top:173px;font:11.5px 'Liberation Sans',sans-serif;color:#000">Y</div>
<div class="t" style="left:1139px;top:215px;font:11.5px 'Liberation Sans',sans-serif;color:#00C000">C</div>
<div style="left:1141px;top:206px;width:4px;height:1px;background:#00C000"></div>
<div class="t" style="left:1159px;top:173px;font:11.5px 'Liberation Sans',sans-serif;color:#000">H</div>
<div class="t" style="left:1159px;top:215px;font:11.5px 'Liberation Sans',sans-serif;color:#00C000">A</div>
<div style="left:1156px;top:200px;width:19px;height:13px;background:#D0FFD0"></div>
<div class="t" style="left:1160px;top:201px;font:11.5px 'Liberation Sans',sans-serif;color:#00C000">a</div>
<div class="t" style="left:1179px;top:173px;font:11.5px 'Liberation Sans',sans-serif;color:#000">R</div>
<div class="t" style="left:1179px;top:215px;font:11.5px 'Liberation Sans',sans-serif;color:#00C000">A</div>
<div style="left:1181px;top:206px;width:4px;height:1px;background:#00C000"></div>
<div class="t" style="left:1199px;top:173px;font:11.5px 'Liberation Sans',sans-serif;color:#000">N</div>
<div class="t" style="left:1199px;top:215px;font:11.5px 'Liberation Sans',sans-serif;color:#00C000">G</div>
<div style="left:1201px;top:206px;width:4px;height:1px;background:#00C000"></div>
<div class="t" style="left:1219px;top:173px;font:11.5px 'Liberation Sans',sans-serif;color:#000">H</div>
<div class="t" style="left:1219px;top:215px;font:11.5px 'Liberation Sans',sans-serif;color:#00C000">T</div>
<div style="left:1221px;top:206px;width:4px;height:1px;background:#00C000"></div>
<div class="t" style="left:1239px;top:173px;font:11.5px 'Liberation Sans',sans-serif;color:#000">N</div>
<div class="t" style="left:1239px;top:215px;font:11.5px 'Liberation Sans',sans-serif;color:#00C000">G</div>
<div style="left:1241px;top:206px;width:4px;height:1px;background:#00C000"></div>
<div class="t" style="left:1259px;top:173px;font:11.5px 'Liberation Sans',sans-serif;color:#000">V</div>
<div class="t" style="left:1259px;top:215px;font:11.5px 'Liberation Sans',sans-serif;color:#00C000">G</div>
<div style="left:1261px;top:206px;width:4px;height:1px;background:#00C000"></div>
<div class="t" style="left:1279px;top:173px;font:11.5px 'Liberation Sans',sans-serif;color:#000">D</div>
<div class="t" style="left:1279px;top:215px;font:11.5px 'Liberation Sans',sans-serif;color:#00C000">G</div>
<div style="left:1281px;top:206px;width:4px;height:1px;background:#00C000"></div>
<div class="t" style="left:1299px;top:173px;font:11.5px 'Liberation Sans',sans-serif;color:#000">D</div>
<div class="t" style="left:1299px;top:215px;font:11.5px 'Liberation Sans',sans-serif;color:#00C000">A</div>
<div style="left:1301px;top:206px;width:4px;height:1px;background:#00C000"></div>
<div class="t" style="left:1319px;top:173px;font:11.5px 'Liberation Sans',sans-serif;color:#000">G</div>
<div class="t" style="left:1319px;top:215px;font:11.5px 'Liberation Sans',sans-serif;color:#00C000">G</div>
<div style="left:1321px;top:206px;width:4px;height:1px;background:#00C000"></div>
<div class="t" style="left:1339px;top:173px;font:11.5px 'Liberation Sans',sans-serif;color:#000">D</div>
<div class="t" style="left:1339px;top:215px;font:11.5px 'Liberation Sans',sans-serif;color:#00C000">G</div>
<div style="left:1341px;top:206px;width:4px;height:1px;background:#00C000"></div>
<div class="t" style="left:1359px;top:173px;font:11.5px 'Liberation Sans',sans-serif;color:#000">H</div>
<div class="t" style="left:1359px;top:215px;font:11.5px 'Liberation Sans',sans-serif;color:#00C000">C</div>
<div style="left:1361px;top:206px;width:4px;height:1px;background:#00C000"></div>
<div class="t" style="left:1379px;top:173px;font:11.5px 'Liberation Sans',sans-serif;color:#000">N</div>
<div class="t" style="left:1379px;top:215px;font:11.5px 'Liberation Sans',sans-serif;color:#00C000">G</div>
<div style="left:1381px;top:206px;width:4px;height:1px;background:#00C000"></div>
<div class="t" style="left:1399px;top:173px;font:11.5px 'Liberation Sans',sans-serif;color:#000">D</div>
<div class="t" style="left:1399px;top:215px;font:11.5px 'Liberation Sans',sans-serif;color:#00C000">G</div>
<div style="left:1401px;top:206px;width:4px;height:1px;background:#00C000"></div>
<div class="t" style="left:1419px;top:173px;font:11.5px 'Liberation Sans',sans-serif;color:#000">N</div>
<div class="t" style="left:1419px;top:215px;font:11.5px 'Liberation Sans',sans-serif;color:#00C000">C</div>
<div style="left:1421px;top:206px;width:4px;height:1px;background:#00C000"></div>
<div class="t" style="left:1439px;top:173px;font:11.5px 'Liberation Sans',sans-serif;color:#000">N</div>
<div class="t" style="left:1439px;top:215px;font:11.5px 'Liberation Sans',sans-serif;color:#00C000">C</div>
<div style="left:1441px;top:206px;width:4px;height:1px;background:#00C000"></div>
<div class="t" style="left:1459px;top:173px;font:11.5px 'Liberation Sans',sans-serif;color:#000">N</div>
<div class="t" style="left:1459px;top:215px;font:11.5px 'Liberation Sans',sans-serif;color:#00C000">C</div>
<div style="left:1461px;top:206px;width:4px;height:1px;background:#00C000"></div>
<div class="t" style="left:1479px;top:173px;font:11.5px 'Liberation Sans',sans-serif;color:#000">N</div>
<div class="t" style="left:1479px;top:215px;font:11.5px 'Liberation Sans',sans-serif;color:#00C000">R</div>
<div style="left:1476px;top:200px;width:19px;height:13px;background:#D0FFD0"></div>
<div class="t" style="left:1480px;top:201px;font:11.5px 'Liberation Sans',sans-serif;color:#00C000">r</div>
<div class="t" style="left:1499px;top:173px;font:11.5px 'Liberation Sans',sans-serif;color:#000">H</div>
<div class="t" style="left:1499px;top:215px;font:11.5px 'Liberation Sans',sans-serif;color:#00C000">T</div>
<div style="left:1501px;top:206px;width:4px;height:1px;background:#00C000"></div>
<div class="t" style="left:1519px;top:173px;font:11.5px 'Liberation Sans',sans-serif;color:#000">N</div>
<div class="t" style="left:1519px;top:215px;font:11.5px 'Liberation Sans',sans-serif;color:#00C000">G</div>
<div style="left:1521px;top:206px;width:4px;height:1px;background:#00C000"></div>
<div class="t" style="left:1539px;top:173px;font:11.5px 'Liberation Sans',sans-serif;color:#000">N</div>
<div class="t" style="left:1539px;top:215px;font:11.5px 'Liberation Sans',sans-serif;color:#00C000">T</div>
<div style="left:1541px;top:206px;width:4px;height:1px;background:#00C000"></div>
<div class="t" style="left:1559px;top:173px;font:11.5px 'Liberation Sans',sans-serif;color:#000">V</div>
<div class="t" style="left:1559px;top:215px;font:11.5px 'Liberation Sans',sans-serif;color:#00C000">G</div>
<div style="left:1556px;top:200px;width:19px;height:13px;background:#D0FFD0"></div>
<div class="t" style="left:1560px;top:201px;font:11.5px 'Liberation Sans',sans-serif;color:#00C000">g</div>
<div class="t" style="left:1579px;top:173px;font:11.5px 'Liberation Sans',sans-serif;color:#000">V</div>
<div class="t" style="left:1579px;top:215px;font:11.5px 'Liberation Sans',sans-serif;color:#00C000">G</div>
<div style="left:1581px;top:206px;width:4px;height:1px;background:#00C000"></div>
<div class="t" style="left:617px;top:131px;font-family:'Liberation Sans',sans-serif;font-size:11px;font-weight:normal;letter-spacing:0.500px;color:#000;">481</div>
<div class="t" style="left:817px;top:131px;font-family:'Liberation Sans',sans-serif;font-size:11px;font-weight:normal;letter-spacing:0.500px;color:#000;">491</div>
<div class="t" style="left:1017px;top:131px;font-family:'Liberation Sans',sans-serif;font-size:11px;font-weight:normal;letter-spacing:0.500px;color:#000;">501</div>
<div class="t" style="left:1217px;top:131px;font-family:'Liberation Sans',sans-serif;font-size:11px;font-weight:normal;letter-spacing:0.500px;color:#000;">511</div>
<div class="t" style="left:1417px;top:131px;font-family:'Liberation Sans',sans-serif;font-size:11px;font-weight:normal;letter-spacing:0.500px;color:#000;">521</div>
<div style="left:476px;top:292px;width:1118px;height:1px;background:#404040"></div>
<div style="left:476px;top:292px;width:1px;height:519px;background:#404040"></div>
<div style="left:477px;top:293px;width:1117px;height:518px;background:#fff"></div>
<div style="left:477px;top:293px;width:1117px;height:12px;background:#B4B4FF"></div>
<div style="left:477px;top:305px;width:1117px;height:1px;background-image:repeating-linear-gradient(to right,#A8A8A8 0 3px,transparent 3px 6px)"></div>
<div style="left:477px;top:317px;width:1117px;height:1px;background-image:repeating-linear-gradient(to right,#A8A8A8 0 3px,transparent 3px 6px)"></div>
<div style="left:477px;top:329px;width:1117px;height:1px;background-image:repeating-linear-gradient(to right,#A8A8A8 0 3px,transparent 3px 6px)"></div>
<div style="left:477px;top:557px;width:1117px;height:1px;background-image:repeating-linear-gradient(to right,#A8A8A8 0 3px,transparent 3px 6px)"></div>
<div style="left:477px;top:569px;width:1117px;height:1px;background-image:repeating-linear-gradient(to right,#A8A8A8 0 3px,transparent 3px 6px)"></div>
<div style="left:477px;top:581px;width:1117px;height:1px;background-image:repeating-linear-gradient(to right,#A8A8A8 0 3px,transparent 3px 6px)"></div>
<div class="t" style="left:499px;top:306px;font:11px 'Liberation Sans',sans-serif;color:#000000">G</div>
<div style="left:501px;top:319px;width:5px;height:10px;background:#0000C8"></div>
<div class="t" style="left:537px;top:306px;font:11px 'Liberation Sans',sans-serif;color:#000000">G</div>
<div style="left:539px;top:325px;width:5px;height:4px;background:#0000C8"></div>
<div class="t" style="left:574px;top:306px;font:11px 'Liberation Sans',sans-serif;color:#0000FF">C</div>
<div style="left:576px;top:326px;width:5px;height:3px;background:#0000C8"></div>
<div class="t" style="left:614px;top:306px;font:11px 'Liberation Sans',sans-serif;color:#C05020">R</div>
<div style="left:616px;top:327px;width:5px;height:2px;background:#0000C8"></div>
<div class="t" style="left:652px;top:306px;font:11px 'Liberation Sans',sans-serif;color:#000000">G</div>
<div style="left:654px;top:328px;width:5px;height:1px;background:#0000C8"></div>
<div class="t" style="left:675px;top:306px;font:11px 'Liberation Sans',sans-serif;color:#0000FF">C</div>
<div style="left:677px;top:327px;width:5px;height:2px;background:#0000C8"></div>
<div class="t" style="left:712px;top:306px;font:11px 'Liberation Sans',sans-serif;color:#FF0000">T</div>
<div style="left:714px;top:326px;width:5px;height:3px;background:#0000C8"></div>
<div class="t" style="left:750px;top:306px;font:11px 'Liberation Sans',sans-serif;color:#0000FF">C</div>
<div style="left:752px;top:327px;width:5px;height:2px;background:#0000C8"></div>
<div class="t" style="left:779px;top:306px;font:11px 'Liberation Sans',sans-serif;color:#00E000">A</div>
<div style="left:781px;top:327px;width:5px;height:2px;background:#0000C8"></div>
<div class="t" style="left:810px;top:306px;font:11px 'Liberation Sans',sans-serif;color:#000000">G</div>
<div style="left:812px;top:328px;width:5px;height:1px;background:#0000C8"></div>
<div class="t" style="left:851px;top:306px;font:11px 'Liberation Sans',sans-serif;color:#00E000">A</div>
<div style="left:853px;top:325px;width:5px;height:4px;background:#0000C8"></div>
<div class="t" style="left:887px;top:306px;font:11px 'Liberation Sans',sans-serif;color:#C05020">Y</div>
<div style="left:889px;top:328px;width:5px;height:1px;background:#0000C8"></div>
<div class="t" style="left:918px;top:306px;font:11px 'Liberation Sans',sans-serif;color:#0000FF">C</div>
<div style="left:920px;top:326px;width:5px;height:3px;background:#0000C8"></div>
<div class="t" style="left:946px;top:306px;font:11px 'Liberation Sans',sans-serif;color:#00E000">A</div>
<div style="left:948px;top:327px;width:5px;height:2px;background:#0000C8"></div>
<div class="t" style="left:978px;top:306px;font:11px 'Liberation Sans',sans-serif;color:#0000FF">C</div>
<div style="left:980px;top:327px;width:5px;height:2px;background:#0000C8"></div>
<div class="t" style="left:1015px;top:306px;font:11px 'Liberation Sans',sans-serif;color:#0000FF">C</div>
<div style="left:1017px;top:327px;width:5px;height:2px;background:#0000C8"></div>
<div class="t" style="left:1041px;top:306px;font:11px 'Liberation Sans',sans-serif;color:#C05020">M</div>
<div class="t" style="left:1041px;top:318px;font:11px 'Liberation Sans',sans-serif;color:#C05020">A</div>
<div style="left:1042px;top:329px;width:6px;height:2px;background:#A0A0A0;border-radius:2px"></div>
<div class="t" style="left:1078px;top:306px;font:11px 'Liberation Sans',sans-serif;color:#00E000">A</div>
<div style="left:1080px;top:327px;width:5px;height:2px;background:#0000C8"></div>
<div class="t" style="left:1110px;top:306px;font:11px 'Liberation Sans',sans-serif;color:#000000">G</div>
<div style="left:1112px;top:327px;width:5px;height:2px;background:#0000C8"></div>
<div class="t" style="left:1150px;top:306px;font:11px 'Liberation Sans',sans-serif;color:#0000FF">C</div>
<div style="left:1152px;top:327px;width:5px;height:2px;background:#0000C8"></div>
<div class="t" style="left:1178px;top:306px;font:11px 'Liberation Sans',sans-serif;color:#C05020">R</div>
<div class="t" style="left:1178px;top:318px;font:11px 'Liberation Sans',sans-serif;color:#C05020">A</div>
<div style="left:1179px;top:329px;width:6px;height:2px;background:#A0A0A0;border-radius:2px"></div>
<div class="t" style="left:1211px;top:306px;font:11px 'Liberation Sans',sans-serif;color:#0000FF">C</div>
<div style="left:1213px;top:327px;width:5px;height:2px;background:#0000C8"></div>
<div class="t" style="left:1242px;top:306px;font:11px 'Liberation Sans',sans-serif;color:#00E000">A</div>
<div class="t" style="left:1242px;top:318px;font:11px 'Liberation Sans',sans-serif;color:#00E000">A</div>
<div style="left:1243px;top:329px;width:6px;height:2px;background:#A0A0A0;border-radius:2px"></div>
<div class="t" style="left:1268px;top:306px;font:11px 'Liberation Sans',sans-serif;color:#00E000">A</div>
<div style="left:1270px;top:328px;width:5px;height:1px;background:#0000C8"></div>
<div class="t" style="left:1311px;top:306px;font:11px 'Liberation Sans',sans-serif;color:#000000">G</div>
<div style="left:1313px;top:328px;width:5px;height:1px;background:#0000C8"></div>
<div class="t" style="left:1348px;top:306px;font:11px 'Liberation Sans',sans-serif;color:#FF0000">T</div>
<div style="left:1350px;top:327px;width:5px;height:2px;background:#0000C8"></div>
<div class="t" style="left:1383px;top:306px;font:11px 'Liberation Sans',sans-serif;color:#000000">G</div>
<div style="left:1385px;top:326px;width:5px;height:3px;background:#0000C8"></div>
<div class="t" style="left:1421px;top:306px;font:11px 'Liberation Sans',sans-serif;color:#000000">G</div>
<div style="left:1423px;top:328px;width:5px;height:1px;background:#0000C8"></div>
<div class="t" style="left:1458px;top:306px;font:11px 'Liberation Sans',sans-serif;color:#000000">G</div>
<div style="left:1460px;top:328px;width:5px;height:1px;background:#0000C8"></div>
<div class="t" style="left:1499px;top:306px;font:11px 'Liberation Sans',sans-serif;color:#00E000">A</div>
<div style="left:1501px;top:327px;width:5px;height:2px;background:#0000C8"></div>
<div class="t" style="left:1527px;top:306px;font:11px 'Liberation Sans',sans-serif;color:#000000">G</div>
<div style="left:1529px;top:328px;width:5px;height:1px;background:#0000C8"></div>
<div class="t" style="left:1565px;top:306px;font:11px 'Liberation Sans',sans-serif;color:#000000">G</div>
<div style="left:1567px;top:326px;width:5px;height:3px;background:#0000C8"></div>
<div class="t" style="left:488px;top:557px;font:11px 'Liberation Sans',sans-serif;color:#000000">G</div>
<div style="left:490px;top:571px;width:5px;height:10px;background:#0000C8"></div>
<div class="t" style="left:522px;top:557px;font:11px 'Liberation Sans',sans-serif;color:#000000">G</div>
<div style="left:524px;top:574px;width:5px;height:7px;background:#0000C8"></div>
<div class="t" style="left:554px;top:557px;font:11px 'Liberation Sans',sans-serif;color:#0000FF">C</div>
<div style="left:556px;top:575px;width:5px;height:6px;background:#0000C8"></div>
<div class="t" style="left:588px;top:557px;font:11px 'Liberation Sans',sans-serif;color:#C05020">R</div>
<div class="t" style="left:588px;top:570px;font:11px 'Liberation Sans',sans-serif;color:#C05020">A</div>
<div style="left:589px;top:581px;width:6px;height:2px;background:#A0A0A0;border-radius:2px"></div>
<div class="t" style="left:626px;top:557px;font:11px 'Liberation Sans',sans-serif;color:#000000">G</div>
<div style="left:628px;top:575px;width:5px;height:6px;background:#0000C8"></div>
<div class="t" style="left:661px;top:557px;font:11px 'Liberation Sans',sans-serif;color:#0000FF">C</div>
<div style="left:663px;top:577px;width:5px;height:4px;background:#0000C8"></div>
<div class="t" style="left:692px;top:557px;font:11px 'Liberation Sans',sans-serif;color:#FF0000">T</div>
<div style="left:694px;top:573px;width:5px;height:8px;background:#0000C8"></div>
<div class="t" style="left:730px;top:557px;font:11px 'Liberation Sans',sans-serif;color:#0000FF">C</div>
<div style="left:732px;top:572px;width:5px;height:9px;background:#0000C8"></div>
<div class="t" style="left:763px;top:557px;font:11px 'Liberation Sans',sans-serif;color:#00E000">A</div>
<div style="left:765px;top:576px;width:5px;height:5px;background:#0000C8"></div>
<div class="t" style="left:798px;top:557px;font:11px 'Liberation Sans',sans-serif;color:#000000">G</div>
<div style="left:800px;top:574px;width:5px;height:7px;background:#0000C8"></div>
<div class="t" style="left:833px;top:557px;font:11px 'Liberation Sans',sans-serif;color:#00E000">A</div>
<div style="left:835px;top:575px;width:5px;height:6px;background:#0000C8"></div>
<div class="t" style="left:863px;top:557px;font:11px 'Liberation Sans',sans-serif;color:#C05020">Y</div>
<div class="t" style="left:863px;top:570px;font:11px 'Liberation Sans',sans-serif;color:#C05020">C</div>
<div style="left:864px;top:581px;width:6px;height:2px;background:#A0A0A0;border-radius:2px"></div>
<div class="t" style="left:903px;top:557px;font:11px 'Liberation Sans',sans-serif;color:#0000FF">C</div>
<div style="left:905px;top:573px;width:5px;height:8px;background:#0000C8"></div>
<div class="t" style="left:937px;top:557px;font:11px 'Liberation Sans',sans-serif;color:#00E000">A</div>
<div style="left:939px;top:575px;width:5px;height:6px;background:#0000C8"></div>
<div class="t" style="left:972px;top:557px;font:11px 'Liberation Sans',sans-serif;color:#0000FF">C</div>
<div style="left:974px;top:575px;width:5px;height:6px;background:#0000C8"></div>
<div class="t" style="left:1009px;top:557px;font:11px 'Liberation Sans',sans-serif;color:#0000FF">C</div>
<div style="left:1011px;top:572px;width:5px;height:9px;background:#0000C8"></div>
<div class="t" style="left:1041px;top:557px;font:11px 'Liberation Sans',sans-serif;color:#C05020">M</div>
<div class="t" style="left:1041px;top:570px;font:11px 'Liberation Sans',sans-serif;color:#C05020">A</div>
<div style="left:1042px;top:581px;width:6px;height:2px;background:#A0A0A0;border-radius:2px"></div>
<div class="t" style="left:1078px;top:557px;font:11px 'Liberation Sans',sans-serif;color:#00E000">A</div>
<div style="left:1080px;top:572px;width:5px;height:9px;background:#0000C8"></div>
<div class="t" style="left:1113px;top:557px;font:11px 'Liberation Sans',sans-serif;color:#000000">G</div>
<div style="left:1115px;top:574px;width:5px;height:7px;background:#0000C8"></div>
<div class="t" style="left:1147px;top:557px;font:11px 'Liberation Sans',sans-serif;color:#0000FF">C</div>
<div style="left:1149px;top:572px;width:5px;height:9px;background:#0000C8"></div>
<div class="t" style="left:1181px;top:557px;font:11px 'Liberation Sans',sans-serif;color:#C05020">R</div>
<div class="t" style="left:1181px;top:570px;font:11px 'Liberation Sans',sans-serif;color:#C05020">A</div>
<div style="left:1182px;top:581px;width:6px;height:2px;background:#A0A0A0;border-radius:2px"></div>
<div class="t" style="left:1219px;top:557px;font:11px 'Liberation Sans',sans-serif;color:#0000FF">C</div>
<div style="left:1221px;top:574px;width:5px;height:7px;background:#0000C8"></div>
<div class="t" style="left:1254px;top:557px;font:11px 'Liberation Sans',sans-serif;color:#00E000">A</div>
<div style="left:1256px;top:574px;width:5px;height:7px;background:#0000C8"></div>
<div class="t" style="left:1291px;top:557px;font:11px 'Liberation Sans',sans-serif;color:#00E000">A</div>
<div style="left:1293px;top:572px;width:5px;height:9px;background:#0000C8"></div>
<div class="t" style="left:1329px;top:557px;font:11px 'Liberation Sans',sans-serif;color:#000000">G</div>
<div style="left:1331px;top:572px;width:5px;height:9px;background:#0000C8"></div>
<div class="t" style="left:1360px;top:557px;font:11px 'Liberation Sans',sans-serif;color:#FF0000">T</div>
<div style="left:1362px;top:572px;width:5px;height:9px;background:#0000C8"></div>
<div class="t" style="left:1389px;top:557px;font:11px 'Liberation Sans',sans-serif;color:#000000">G</div>
<div style="left:1391px;top:572px;width:5px;height:9px;background:#0000C8"></div>
<div class="t" style="left:1421px;top:557px;font:11px 'Liberation Sans',sans-serif;color:#000000">G</div>
<div style="left:1423px;top:572px;width:5px;height:9px;background:#0000C8"></div>
<div class="t" style="left:1453px;top:557px;font:11px 'Liberation Sans',sans-serif;color:#000000">G</div>
<div style="left:1455px;top:572px;width:5px;height:9px;background:#0000C8"></div>
<div class="t" style="left:1487px;top:557px;font:11px 'Liberation Sans',sans-serif;color:#00E000">A</div>
<div style="left:1489px;top:572px;width:5px;height:9px;background:#0000C8"></div>
<div class="t" style="left:1525px;top:557px;font:11px 'Liberation Sans',sans-serif;color:#000000">G</div>
<div style="left:1527px;top:572px;width:5px;height:9px;background:#0000C8"></div>
<div class="t" style="left:1559px;top:557px;font:11px 'Liberation Sans',sans-serif;color:#000000">G</div>
<div style="left:1561px;top:572px;width:5px;height:9px;background:#0000C8"></div>
<div class="t" style="left:675px;top:293px;font:11px 'Liberation Sans';color:#404040;letter-spacing:0.4px">491</div>
<div class="t" style="left:1015px;top:293px;font:11px 'Liberation Sans';color:#404040;letter-spacing:0.4px">501</div>
<div class="t" style="left:1349px;top:293px;font:11px 'Liberation Sans';color:#404040;letter-spacing:0.4px">511</div>
<div class="t" style="left:661px;top:546px;font:11px 'Liberation Sans';color:#404040;letter-spacing:0.4px">491</div>
<div class="t" style="left:1009px;top:546px;font:11px 'Liberation Sans';color:#404040;letter-spacing:0.4px">501</div>
<div class="t" style="left:1360px;top:546px;font:11px 'Liberation Sans';color:#404040;letter-spacing:0.4px">511</div>
<div class="t" style="left:478px;top:330px;font-family:'Liberation Sans',sans-serif;font-size:11px;font-weight:normal;letter-spacing:0.000px;color:#000;">&lt;3F&gt;</div>
<div class="t" style="left:510px;top:330px;font-family:'Liberation Sans',sans-serif;font-size:11px;font-weight:normal;letter-spacing:0.429px;color:#000;">Z00343063_A_3F_D06.ab1</div>
<div class="t" style="left:666px;top:330px;font-family:'Liberation Sans',sans-serif;font-size:11px;font-weight:normal;letter-spacing:0.500px;color:#000;">&lt;Signal G:592 T:760 A:731 C:1016 N/S:</div>
<div class="t" style="left:889px;top:330px;font-family:'Liberation Sans',sans-serif;font-size:11px;font-weight:normal;letter-spacing:0.385px;color:#000;">4.70% QV: 36  Space: 15.05&gt;</div>
<div class="t" style="left:478px;top:582px;font-family:'Liberation Sans',sans-serif;font-size:11px;font-weight:normal;letter-spacing:-0.333px;color:#000;">&lt;3R&gt;</div>
<div class="t" style="left:511px;top:582px;font-family:'Liberation Sans',sans-serif;font-size:11px;font-weight:normal;letter-spacing:0.381px;color:#000;">Z00343063_A_3R_D06.ab1</div>
<div class="t" style="left:667px;top:582px;font-family:'Liberation Sans',sans-serif;font-size:11px;font-weight:normal;letter-spacing:0.543px;color:#000;">&lt;Signal G:412 T:577 A:344 C:785 N/S:</div>
<div class="t" style="left:884px;top:582px;font-family:'Liberation Sans',sans-serif;font-size:11px;font-weight:normal;letter-spacing:0.385px;color:#000;">5.35% QV: 50  Space: 15.12&gt;</div>
<svg style="left:0;top:0" width="1600" height="860"><defs><clipPath id="cp"><rect x="477" y="293" width="1117" height="518"/></clipPath></defs><g clip-path="url(#cp)"><path d="M477,544.5 L478,544.5 L479,544.5 L480,544.5 L481,544.5 L482,544.5 L483,544.5 L484,544.5 L485,544.5 L486,544.5 L487,540.8 L488,534.8 L489,527.7 L490,519.6 L491,510.5 L492,500.5 L493,489.9 L494,478.9 L495,467.5 L496,456.0 L497,444.6 L498,433.5 L499,422.9 L500,412.9 L501,403.8 L502,395.6 L503,388.5 L504,382.5 L505,379.4 L506,384.7 L507,391.2 L508,398.8 L509,407.3 L510,416.8 L511,427.1 L512,437.9 L513,449.1 L514,460.6 L515,472.1 L516,483.3 L517,494.2 L518,504.6 L519,514.2 L520,522.9 L521,530.7 L522,537.3 L523,540.4 L524,537.8 L525,532.6 L526,526.7 L527,520.0 L528,512.7 L529,504.9 L530,496.7 L531,488.3 L532,479.8 L533,471.3 L534,463.1 L535,455.2 L536,447.7 L537,440.9 L538,434.7 L539,429.4 L540,424.8 L541,421.8 L542,425.7 L543,430.4 L544,435.9 L545,442.2 L546,449.2 L547,456.7 L548,464.7 L549,473.0 L550,481.5 L551,490.0 L552,498.4 L553,506.5 L554,514.2 L555,521.4 L556,527.9 L557,533.7 L558,538.7 L559,542.9 L560,544.5 L561,544.5 L562,544.5 L563,544.5 L564,544.5 L565,544.5 L566,544.5 L567,544.5 L568,544.5 L569,544.5 L570,544.5 L571,544.5 L572,544.5 L573,544.5 L574,544.5 L575,544.5 L576,544.5 L577,544.5 L578,544.5 L579,544.5 L580,544.5 L581,544.5 L582,544.5 L583,544.5 L584,544.5 L585,544.5 L586,544.5 L587,544.5 L588,544.5 L589,544.5 L590,544.5 L591,544.5 L592,544.5 L593,544.5 L594,544.5 L595,544.5 L596,544.5 L597,544.5 L598,544.1 L599,543.0 L600,541.7 L601,540.1 L602,538.4 L603,536.6 L604,534.5 L605,532.4 L606,530.1 L607,527.8 L608,525.4 L609,523.0 L610,520.6 L611,518.2 L612,515.9 L613,513.7 L614,511.6 L615,509.7 L616,507.9 L617,506.2 L618,504.8 L619,503.5 L620,502.5 L621,503.5 L622,504.8 L623,506.2 L624,507.9 L625,509.7 L626,511.6 L627,513.7 L628,515.9 L629,518.1 L630,519.0 L631,519.6 L632,519.9 L633,520.0 L634,519.9 L635,519.4 L636,518.6 L637,517.5 L638,516.2 L639,514.5 L640,512.6 L641,510.4 L642,508.1 L643,504.9 L644,501.5 L645,498.1 L646,494.8 L647,491.7 L648,488.7 L649,485.9 L650,483.3 L651,480.9 L652,478.7 L653,476.8 L654,475.2 L655,475.2 L656,476.8 L657,478.7 L658,480.9 L659,483.3 L660,485.9 L661,488.7 L662,491.7 L663,494.8 L664,498.1 L665,501.5 L666,504.9 L667,508.4 L668,512.0 L669,515.4 L670,518.9 L671,522.2 L672,525.5 L673,528.6 L674,531.5 L675,534.2 L676,536.7 L677,539.0 L678,541.1 L679,542.8 L680,544.4 L681,544.5 L682,544.5 L683,544.5 L684,544.5 L685,544.5 L686,544.5 L687,544.5 L688,544.5 L689,544.5 L690,544.5 L691,544.5 L692,544.5 L693,544.5 L694,544.5 L695,544.5 L696,544.5 L697,544.5 L698,544.5 L699,544.5 L700,544.5 L701,544.5 L702,544.5 L703,544.5 L704,544.5 L705,544.5 L706,544.5 L707,544.5 L708,544.5 L709,544.5 L710,544.5 L711,544.5 L712,544.5 L713,544.5 L714,544.5 L715,544.5 L716,544.5 L717,544.5 L718,544.5 L719,544.5 L720,544.5 L721,544.5 L722,544.5 L723,544.5 L724,544.5 L725,544.5 L726,544.5 L727,544.5 L728,544.5 L729,544.5 L730,544.5 L731,544.5 L732,544.5 L733,544.5 L734,544.5 L735,544.5 L736,544.5 L737,544.5 L738,544.5 L739,544.5 L740,544.5 L741,544.5 L742,544.5 L743,544.5 L744,544.5 L745,544.5 L746,544.5 L747,544.5 L748,544.5 L749,544.5 L750,544.5 L751,544.5 L752,544.5 L753,544.5 L754,544.5 L755,544.5 L756,544.5 L757,544.5 L758,544.5 L759,544.5 L760,544.5 L761,544.5 L762,544.5 L763,544.5 L764,544.5 L765,544.5 L766,544.5 L767,544.5 L768,544.5 L769,544.5 L770,544.5 L771,544.5 L772,544.5 L773,544.5 L774,544.5 L775,544.5 L776,544.5 L777,544.5 L778,544.5 L779,544.5 L780,544.5 L781,544.5 L782,544.5 L783,544.5 L784,544.5 L785,544.5 L786,544.5 L787,544.5 L788,544.5 L789,544.5 L790,544.5 L791,544.5 L792,544.5 L793,544.5 L794,544.5 L795,544.0 L796,543.1 L797,542.0 L798,540.8 L799,539.5 L800,538.0 L801,536.3 L802,534.6 L803,532.9 L804,531.0 L805,529.1 L806,527.2 L807,525.4 L808,523.5 L809,521.7 L810,520.0 L811,518.4 L812,516.8 L813,515.4 L814,514.2 L815,513.1 L816,512.1 L817,511.7 L818,512.5 L819,513.5 L820,514.7 L821,516.0 L822,517.4 L823,519.0 L824,520.7 L825,522.4 L826,524.2 L827,526.1 L828,528.0 L829,529.9 L830,531.8 L831,533.6 L832,535.3 L833,537.0 L834,538.6 L835,540.0 L836,541.3 L837,542.5 L838,543.5 L839,544.3 L840,544.5 L841,544.5 L842,544.5 L843,544.5 L844,544.5 L845,544.5 L846,544.5 L847,544.5 L848,544.5 L849,544.5 L850,544.5 L851,544.5 L852,544.5 L853,544.5 L854,544.3 L855,544.1 L856,543.7 L857,543.4 L858,543.0 L859,542.5 L860,542.0 L861,541.5 L862,541.0 L863,540.4 L864,539.9 L865,539.4 L866,538.9 L867,538.4 L868,538.0 L869,537.5 L870,537.2 L871,536.9 L872,536.6 L873,536.6 L874,536.9 L875,537.2 L876,537.5 L877,538.0 L878,538.4 L879,538.9 L880,539.4 L881,539.9 L882,540.4 L883,541.0 L884,541.5 L885,542.0 L886,542.5 L887,543.0 L888,543.4 L889,543.7 L890,544.1 L891,544.3 L892,544.5 L893,544.5 L894,544.5 L895,544.5 L896,544.5 L897,544.5 L898,544.5 L899,544.5 L900,544.5 L901,544.5 L902,544.5 L903,544.5 L904,544.5 L905,544.5 L906,544.5 L907,544.5 L908,544.5 L909,544.5 L910,544.5 L911,544.5 L912,544.5 L913,544.5 L914,544.5 L915,544.5 L916,544.5 L917,544.5 L918,544.5 L919,544.5 L920,544.5 L921,544.5 L922,544.5 L923,544.5 L924,544.5 L925,544.5 L926,544.5 L927,544.5 L928,544.5 L929,544.5 L930,544.5 L931,544.5 L932,544.5 L933,544.5 L934,544.5 L935,544.5 L936,544.5 L937,544.5 L938,544.5 L939,544.5 L940,544.5 L941,544.5 L942,544.5 L943,544.5 L944,544.5 L945,544.5 L946,544.5 L947,544.5 L948,544.5 L949,544.5 L950,544.5 L951,544.5 L952,544.5 L953,544.5 L954,544.5 L955,544.5 L956,544.5 L957,544.5 L958,544.5 L959,544.5 L960,544.5 L961,544.5 L962,544.5 L963,544.5 L964,544.5 L965,544.5 L966,544.5 L967,544.5 L968,544.5 L969,544.5 L970,544.5 L971,544.5 L972,544.5 L973,544.5 L974,544.5 L975,544.5 L976,544.5 L977,544.5 L978,544.5 L979,544.5 L980,544.5 L981,544.5 L982,544.5 L983,544.5 L984,544.5 L985,544.5 L986,544.5 L987,544.5 L988,544.5 L989,544.5 L990,544.5 L991,544.5 L992,544.5 L993,544.5 L994,544.5 L995,544.5 L996,544.5 L997,544.5 L998,544.5 L999,544.5 L1000,544.5 L1001,544.5 L1002,544.5 L1003,544.5 L1004,544.5 L1005,544.5 L1006,544.5 L1007,544.5 L1008,544.5 L1009,544.5 L1010,544.5 L1011,544.5 L1012,544.5 L1013,544.5 L1014,544.5 L1015,544.5 L1016,544.5 L1017,544.5 L1018,544.5 L1019,544.5 L1020,544.5 L1021,544.5 L1022,544.5 L1023,544.5 L1024,544.5 L1025,544.5 L1026,544.5 L1027,544.5 L1028,544.5 L1029,544.5 L1030,544.5 L1031,544.5 L1032,544.5 L1033,544.5 L1034,544.5 L1035,544.5 L1036,544.5 L1037,544.5 L1038,544.5 L1039,544.5 L1040,544.5 L1041,544.5 L1042,544.5 L1043,544.5 L1044,544.5 L1045,544.5 L1046,544.5 L1047,544.5 L1048,544.5 L1049,544.5 L1050,544.5 L1051,544.5 L1052,544.5 L1053,544.5 L1054,544.5 L1055,544.5 L1056,544.5 L1057,544.5 L1058,544.5 L1059,544.5 L1060,544.5 L1061,544.5 L1062,544.5 L1063,544.5 L1064,544.5 L1065,544.5 L1066,544.5 L1067,544.5 L1068,544.5 L1069,544.5 L1070,544.5 L1071,544.5 L1072,544.5 L1073,544.5 L1074,544.5 L1075,544.5 L1076,544.5 L1077,544.5 L1078,544.5 L1079,544.5 L1080,544.5 L1081,544.5 L1082,544.5 L1083,544.5 L1084,544.5 L1085,544.5 L1086,544.5 L1087,544.5 L1088,544.5 L1089,544.5 L1090,544.5 L1091,544.5 L1092,544.5 L1093,544.5 L1094,544.5 L1095,543.0 L1096,541.2 L1097,539.2 L1098,536.8 L1099,534.3 L1100,531.5 L1101,528.5 L1102,525.3 L1103,522.0 L1104,518.6 L1105,515.2 L1106,511.7 L1107,508.3 L1108,505.0 L1109,501.8 L1110,498.7 L1111,495.8 L1112,493.2 L1113,490.7 L1114,488.6 L1115,486.7 L1116,485.1 L1117,485.4 L1118,487.0 L1119,489.0 L1120,491.2 L1121,493.7 L1122,496.4 L1123,499.3 L1124,502.4 L1125,505.7 L1126,509.0 L1127,512.4 L1128,515.9 L1129,519.3 L1130,522.7 L1131,525.9 L1132,529.1 L1133,532.0 L1134,534.8 L1135,537.3 L1136,539.6 L1137,541.6 L1138,543.3 L1139,544.5 L1140,544.5 L1141,544.5 L1142,544.5 L1143,544.5 L1144,544.5 L1145,544.5 L1146,544.5 L1147,544.5 L1148,544.5 L1149,544.5 L1150,544.5 L1151,544.5 L1152,544.5 L1153,544.5 L1154,544.5 L1155,544.5 L1156,544.5 L1157,544.5 L1158,544.5 L1159,544.5 L1160,544.5 L1161,544.5 L1162,544.5 L1163,544.5 L1164,544.5 L1165,544.5 L1166,544.5 L1167,544.5 L1168,544.5 L1169,544.5 L1170,544.5 L1171,544.5 L1172,544.5 L1173,544.5 L1174,544.5 L1175,544.5 L1176,544.5 L1177,544.5 L1178,544.5 L1179,544.5 L1180,543.4 L1181,541.6 L1182,539.6 L1183,537.2 L1184,534.6 L1185,531.7 L1186,528.7 L1187,525.5 L1188,522.2 L1189,518.8 L1190,515.5 L1191,512.2 L1192,509.1 L1193,506.1 L1194,503.3 L1195,500.8 L1196,498.6 L1197,496.6 L1198,495.0 L1199,495.3 L1200,497.0 L1201,499.0 L1202,501.3 L1203,503.9 L1204,506.7 L1205,509.7 L1206,512.9 L1207,516.2 L1208,519.5 L1209,522.8 L1210,526.1 L1211,529.3 L1212,532.3 L1213,535.1 L1214,537.7 L1215,540.0 L1216,542.0 L1217,543.7 L1218,544.5 L1219,544.5 L1220,544.5 L1221,544.5 L1222,544.5 L1223,544.5 L1224,544.5 L1225,544.5 L1226,544.5 L1227,544.5 L1228,544.5 L1229,544.5 L1230,544.5 L1231,544.5 L1232,544.5 L1233,544.5 L1234,544.5 L1235,544.5 L1236,544.5 L1237,544.5 L1238,544.5 L1239,544.5 L1240,544.5 L1241,544.5 L1242,544.5 L1243,544.5 L1244,544.5 L1245,544.5 L1246,544.5 L1247,544.5 L1248,544.5 L1249,544.5 L1250,544.5 L1251,544.5 L1252,544.5 L1253,544.5 L1254,544.5 L1255,544.5 L1256,544.5 L1257,544.5 L1258,544.5 L1259,544.5 L1260,544.5 L1261,544.5 L1262,544.5 L1263,544.5 L1264,544.5 L1265,544.5 L1266,544.5 L1267,544.5 L1268,544.5 L1269,544.5 L1270,544.5 L1271,544.5 L1272,544.5 L1273,544.5 L1274,544.5 L1275,544.5 L1276,544.5 L1277,544.5 L1278,544.5 L1279,544.5 L1280,544.5 L1281,544.5 L1282,544.5 L1283,544.5 L1284,544.5 L1285,544.5 L1286,544.5 L1287,544.5 L1288,544.5 L1289,544.5 L1290,544.5 L1291,544.5 L1292,544.5 L1293,544.5 L1294,544.5 L1295,544.5 L1296,544.5 L1297,544.5 L1298,544.5 L1299,544.3 L1300,543.1 L1301,541.7 L1302,540.1 L1303,538.2 L1304,536.1 L1305,533.9 L1306,531.5 L1307,529.0 L1308,526.5 L1309,524.0 L1310,521.5 L1311,519.0 L1312,516.7 L1313,514.5 L1314,512.4 L1315,509.6 L1316,506.1 L1317,502.4 L1318,498.6 L1319,496.7 L1320,494.7 L1321,492.8 L1322,491.0 L1323,489.2 L1324,487.6 L1325,486.2 L1326,485.1 L1327,484.2 L1328,483.6 L1329,483.3 L1330,483.3 L1331,483.6 L1332,484.1 L1333,487.9 L1334,491.8 L1335,496.0 L1336,500.2 L1337,504.5 L1338,508.1 L1339,511.7 L1340,515.5 L1341,519.3 L1342,523.0 L1343,526.7 L1344,530.3 L1345,533.6 L1346,536.6 L1347,539.3 L1348,541.6 L1349,543.5 L1350,544.5 L1351,544.5 L1352,544.5 L1353,544.5 L1354,544.5 L1355,544.5 L1356,544.5 L1357,544.5 L1358,544.5 L1359,544.5 L1360,544.5 L1361,544.5 L1362,543.4 L1363,540.5 L1364,537.1 L1365,533.3 L1366,529.1 L1367,524.5 L1368,519.6 L1369,514.3 L1370,508.7 L1371,502.8 L1372,496.7 L1373,490.5 L1374,484.1 L1375,477.6 L1376,471.0 L1377,464.4 L1378,457.9 L1379,451.5 L1380,445.3 L1381,439.2 L1382,433.3 L1383,427.7 L1384,422.4 L1385,417.5 L1386,412.9 L1387,408.7 L1388,404.9 L1389,401.5 L1390,398.6 L1391,399.1 L1392,402.1 L1393,405.6 L1394,409.5 L1395,413.8 L1396,418.4 L1397,423.5 L1398,428.8 L1399,434.5 L1400,440.4 L1401,446.5 L1402,452.8 L1403,458.8 L1404,463.0 L1405,466.9 L1406,470.5 L1407,473.6 L1408,476.3 L1409,478.5 L1410,480.3 L1411,481.6 L1412,482.3 L1413,482.6 L1414,482.5 L1415,481.8 L1416,480.7 L1417,479.2 L1418,477.3 L1419,475.0 L1420,470.4 L1421,465.6 L1422,460.9 L1423,456.4 L1424,452.1 L1425,448.2 L1426,444.6 L1427,441.3 L1428,438.3 L1429,435.7 L1430,433.5 L1431,435.7 L1432,438.3 L1433,441.3 L1434,444.6 L1435,448.2 L1436,452.1 L1437,456.4 L1438,460.9 L1439,465.6 L1440,468.6 L1441,471.2 L1442,473.6 L1443,475.8 L1444,477.7 L1445,479.2 L1446,480.5 L1447,481.4 L1448,481.9 L1449,482.1 L1450,481.9 L1451,481.4 L1452,480.5 L1453,479.3 L1454,477.7 L1455,475.9 L1456,473.8 L1457,471.5 L1458,467.4 L1459,463.2 L1460,459.1 L1461,455.4 L1462,451.9 L1463,448.7 L1464,445.8 L1465,443.3 L1466,441.1 L1467,441.9 L1468,444.2 L1469,446.9 L1470,449.9 L1471,453.2 L1472,456.8 L1473,460.7 L1474,464.8 L1475,469.2 L1476,473.7 L1477,478.4 L1478,483.2 L1479,488.1 L1480,493.0 L1481,497.9 L1482,502.8 L1483,507.5 L1484,512.2 L1485,516.7 L1486,521.0 L1487,525.1 L1488,528.9 L1489,532.5 L1490,535.7 L1491,538.6 L1492,541.2 L1493,543.5 L1494,544.5 L1495,544.5 L1496,544.5 L1497,544.5 L1498,544.5 L1499,544.5 L1500,544.5 L1501,544.5 L1502,544.5 L1503,544.5 L1504,544.5 L1505,544.5 L1506,544.5 L1507,544.5 L1508,544.5 L1509,543.8 L1510,541.9 L1511,539.6 L1512,537.1 L1513,534.2 L1514,531.1 L1515,527.6 L1516,524.0 L1517,520.2 L1518,516.2 L1519,512.2 L1520,508.0 L1521,503.8 L1522,499.7 L1523,495.6 L1524,491.6 L1525,487.7 L1526,484.1 L1527,480.6 L1528,477.4 L1529,474.5 L1530,471.8 L1531,469.5 L1532,467.5 L1533,467.2 L1534,469.1 L1535,471.4 L1536,473.9 L1537,476.8 L1538,479.9 L1539,483.4 L1540,487.0 L1541,490.8 L1542,494.8 L1543,498.8 L1544,503.0 L1545,507.2 L1546,510.6 L1547,510.5 L1548,509.5 L1549,507.8 L1550,505.2 L1551,501.7 L1552,497.5 L1553,492.4 L1554,486.6 L1555,480.1 L1556,473.0 L1557,464.7 L1558,455.2 L1559,445.7 L1560,436.2 L1561,426.8 L1562,417.6 L1563,408.8 L1564,400.2 L1565,392.2 L1566,384.6 L1567,377.6 L1568,371.2 L1569,365.5 L1570,360.4 L1571,356.0 L1572,356.9 L1573,361.4 L1574,366.5 L1575,372.4 L1576,378.9 L1577,386.1 L1578,393.7 L1579,401.9 L1580,410.5 L1581,419.4 L1582,428.7 L1583,438.1 L1584,447.6 L1585,457.1 L1586,466.6 L1587,475.9 L1588,485.0 L1589,493.7 L1590,502.0 L1591,509.9 L1592,517.3 L1593,524.0 L1594,530.2" fill="none" stroke="#000000" stroke-width="2" stroke-linejoin="round" shape-rendering="crispEdges"/><path d="M477,437.4 L478,443.2 L479,449.6 L480,456.6 L481,464.0 L482,471.7 L483,479.7 L484,487.7 L485,495.7 L486,503.5 L487,511.0 L488,518.0 L489,524.6 L490,530.5 L491,535.7 L492,540.2 L493,543.9 L494,544.5 L495,544.5 L496,544.5 L497,544.5 L498,544.5 L499,544.5 L500,544.5 L501,544.5 L502,544.5 L503,544.5 L504,544.5 L505,544.5 L506,544.5 L507,544.5 L508,544.5 L509,544.5 L510,544.5 L511,544.5 L512,544.5 L513,544.5 L514,544.5 L515,544.5 L516,544.5 L517,544.5 L518,544.5 L519,544.5 L520,544.5 L521,544.5 L522,544.5 L523,544.5 L524,544.5 L525,544.5 L526,544.5 L527,544.5 L528,544.5 L529,544.5 L530,544.5 L531,544.5 L532,544.5 L533,544.5 L534,544.5 L535,544.5 L536,544.5 L537,544.5 L538,544.5 L539,544.5 L540,544.5 L541,544.5 L542,544.5 L543,544.5 L544,544.5 L545,544.5 L546,544.5 L547,544.5 L548,544.5 L549,544.5 L550,544.5 L551,544.5 L552,544.5 L553,544.5 L554,544.5 L555,544.5 L556,544.5 L557,544.5 L558,544.5 L559,544.5 L560,544.5 L561,544.5 L562,544.5 L563,544.5 L564,544.5 L565,544.5 L566,544.5 L567,544.5 L568,544.5 L569,544.5 L570,544.5 L571,544.5 L572,544.5 L573,544.5 L574,544.5 L575,544.5 L576,544.5 L577,544.5 L578,544.5 L579,544.5 L580,544.5 L581,544.5 L582,544.5 L583,544.5 L584,544.5 L585,544.5 L586,544.5 L587,544.5 L588,544.5 L589,544.5 L590,544.5 L591,544.5 L592,544.5 L593,544.5 L594,544.5 L595,544.5 L596,544.5 L597,544.5 L598,544.5 L599,544.5 L600,544.5 L601,544.5 L602,544.5 L603,544.5 L604,544.5 L605,544.5 L606,544.5 L607,544.5 L608,544.5 L609,544.5 L610,544.5 L611,544.5 L612,544.5 L613,544.5 L614,544.5 L615,544.5 L616,544.5 L617,544.5 L618,544.5 L619,544.5 L620,544.5 L621,544.5 L622,544.5 L623,544.5 L624,544.5 L625,544.5 L626,544.5 L627,544.5 L628,544.5 L629,544.5 L630,544.5 L631,544.5 L632,544.5 L633,544.5 L634,544.5 L635,544.5 L636,544.5 L637,544.5 L638,544.5 L639,544.5 L640,544.5 L641,544.5 L642,544.5 L643,544.5 L644,544.5 L645,544.5 L646,544.5 L647,544.5 L648,544.5 L649,544.5 L650,544.5 L651,544.5 L652,544.5 L653,544.5 L654,544.5 L655,544.5 L656,544.5 L657,544.5 L658,544.5 L659,544.5 L660,544.5 L661,544.5 L662,544.5 L663,544.5 L664,544.5 L665,544.5 L666,544.5 L667,544.5 L668,544.5 L669,544.5 L670,544.5 L671,544.5 L672,544.5 L673,544.5 L674,544.5 L675,544.5 L676,544.5 L677,544.5 L678,544.5 L679,544.5 L680,544.5 L681,544.5 L682,544.5 L683,544.5 L684,544.5 L685,544.5 L686,544.5 L687,544.5 L688,544.5 L689,544.5 L690,544.5 L691,544.5 L692,544.5 L693,544.5 L694,544.5 L695,544.5 L696,544.5 L697,544.5 L698,544.5 L699,542.2 L700,538.9 L701,534.9 L702,530.4 L703,525.4 L704,520.0 L705,514.1 L706,507.9 L707,501.5 L708,495.0 L709,488.4 L710,481.8 L711,475.3 L712,469.1 L713,463.2 L714,457.6 L715,452.5 L716,447.9 L717,443.9 L718,440.4 L719,437.5 L720,440.4 L721,443.9 L722,447.9 L723,452.5 L724,457.6 L725,463.2 L726,469.1 L727,475.3 L728,481.8 L729,488.4 L730,495.0 L731,501.5 L732,507.9 L733,514.1 L734,520.0 L735,525.4 L736,530.4 L737,534.9 L738,538.9 L739,542.2 L740,544.5 L741,544.5 L742,544.5 L743,544.5 L744,544.5 L745,544.5 L746,544.5 L747,544.5 L748,544.5 L749,544.5 L750,544.5 L751,544.5 L752,544.5 L753,544.5 L754,544.5 L755,544.5 L756,544.5 L757,544.5 L758,544.5 L759,544.5 L760,544.5 L761,544.5 L762,544.5 L763,544.5 L764,544.5 L765,544.5 L766,544.5 L767,544.5 L768,544.5 L769,544.5 L770,544.5 L771,544.5 L772,544.5 L773,544.5 L774,544.5 L775,544.5 L776,544.5 L777,544.5 L778,544.5 L779,544.5 L780,544.5 L781,544.5 L782,544.5 L783,544.5 L784,544.5 L785,544.5 L786,544.5 L787,544.5 L788,544.5 L789,544.5 L790,544.5 L791,544.5 L792,544.5 L793,544.5 L794,544.5 L795,544.5 L796,544.5 L797,544.5 L798,544.5 L799,544.5 L800,544.5 L801,544.5 L802,544.5 L803,544.5 L804,544.5 L805,544.5 L806,544.5 L807,544.5 L808,544.5 L809,544.5 L810,544.5 L811,544.5 L812,544.5 L813,544.5 L814,544.5 L815,544.5 L816,544.5 L817,544.5 L818,544.5 L819,544.5 L820,544.5 L821,544.5 L822,544.5 L823,544.5 L824,544.5 L825,544.5 L826,544.5 L827,544.5 L828,544.5 L829,544.5 L830,544.5 L831,544.5 L832,544.5 L833,544.5 L834,544.5 L835,544.5 L836,544.5 L837,544.5 L838,544.5 L839,544.5 L840,544.5 L841,544.5 L842,544.5 L843,544.5 L844,544.5 L845,544.5 L846,544.5 L847,544.5 L848,544.5 L849,544.5 L850,544.5 L851,544.5 L852,544.5 L853,544.5 L854,544.5 L855,544.5 L856,544.5 L857,544.5 L858,544.5 L859,544.5 L860,544.5 L861,544.5 L862,544.5 L863,544.5 L864,544.5 L865,544.5 L866,544.5 L867,544.5 L868,544.5 L869,544.5 L870,544.5 L871,544.5 L872,544.5 L873,544.5 L874,544.5 L875,544.5 L876,544.5 L877,542.1 L878,539.1 L879,535.5 L880,531.4 L881,526.9 L882,522.0 L883,516.8 L884,511.4 L885,505.9 L886,500.5 L887,495.1 L888,490.0 L889,485.3 L890,480.9 L891,477.0 L892,473.7 L893,470.9 L894,470.4 L895,473.1 L896,476.3 L897,480.1 L898,484.4 L899,489.1 L900,494.1 L901,499.4 L902,504.8 L903,510.3 L904,515.7 L905,520.9 L906,525.9 L907,530.5 L908,534.7 L909,538.4 L910,541.5 L911,544.1 L912,544.5 L913,544.5 L914,544.5 L915,544.5 L916,544.5 L917,544.5 L918,544.5 L919,544.5 L920,544.5 L921,544.5 L922,544.5 L923,544.5 L924,544.5 L925,544.5 L926,544.5 L927,544.5 L928,544.5 L929,544.5 L930,544.5 L931,544.5 L932,544.5 L933,544.5 L934,544.5 L935,544.5 L936,544.5 L937,544.5 L938,544.5 L939,544.5 L940,544.5 L941,544.5 L942,544.5 L943,544.5 L944,544.5 L945,544.5 L946,544.5 L947,544.5 L948,544.5 L949,544.5 L950,544.5 L951,544.5 L952,544.5 L953,544.5 L954,544.5 L955,544.5 L956,544.5 L957,544.5 L958,544.5 L959,544.5 L960,544.5 L961,544.5 L962,544.5 L963,544.5 L964,544.5 L965,544.5 L966,544.5 L967,544.5 L968,544.5 L969,544.5 L970,544.5 L971,544.5 L972,544.5 L973,544.5 L974,544.5 L975,544.5 L976,544.5 L977,544.5 L978,544.5 L979,544.4 L980,544.3 L981,544.1 L982,543.9 L983,543.7 L984,543.5 L985,543.3 L986,543.0 L987,542.7 L988,542.4 L989,542.2 L990,541.9 L991,541.6 L992,541.3 L993,541.0 L994,540.7 L995,540.4 L996,540.1 L997,539.8 L998,539.6 L999,539.4 L1000,539.1 L1001,539.0 L1002,538.8 L1003,538.6 L1004,538.5 L1005,538.6 L1006,538.8 L1007,539.0 L1008,539.1 L1009,539.4 L1010,539.6 L1011,539.8 L1012,540.1 L1013,540.4 L1014,540.7 L1015,541.0 L1016,541.3 L1017,541.6 L1018,541.9 L1019,542.2 L1020,542.4 L1021,542.7 L1022,543.0 L1023,543.3 L1024,543.5 L1025,543.7 L1026,543.9 L1027,543.9 L1028,543.9 L1029,543.8 L1030,543.7 L1031,543.4 L1032,543.1 L1033,542.8 L1034,542.5 L1035,542.1 L1036,541.8 L1037,541.5 L1038,541.1 L1039,540.8 L1040,540.5 L1041,540.3 L1042,540.0 L1043,539.8 L1044,539.6 L1045,539.5 L1046,539.6 L1047,539.8 L1048,540.0 L1049,540.3 L1050,540.5 L1051,540.8 L1052,541.1 L1053,541.5 L1054,541.8 L1055,542.1 L1056,542.5 L1057,542.8 L1058,543.1 L1059,543.4 L1060,543.7 L1061,543.9 L1062,544.1 L1063,544.3 L1064,544.5 L1065,544.5 L1066,544.5 L1067,544.5 L1068,544.5 L1069,544.5 L1070,544.5 L1071,544.5 L1072,544.5 L1073,544.5 L1074,544.5 L1075,544.5 L1076,544.5 L1077,544.5 L1078,544.5 L1079,544.5 L1080,544.5 L1081,544.5 L1082,544.5 L1083,544.5 L1084,544.5 L1085,544.5 L1086,544.5 L1087,544.5 L1088,544.5 L1089,544.5 L1090,544.5 L1091,544.5 L1092,544.5 L1093,544.5 L1094,544.5 L1095,544.5 L1096,544.5 L1097,544.5 L1098,544.5 L1099,544.5 L1100,544.5 L1101,544.5 L1102,544.5 L1103,544.5 L1104,544.5 L1105,544.5 L1106,544.5 L1107,544.5 L1108,544.5 L1109,544.5 L1110,544.5 L1111,544.5 L1112,544.5 L1113,544.5 L1114,544.5 L1115,544.5 L1116,544.5 L1117,544.5 L1118,544.5 L1119,544.5 L1120,544.5 L1121,544.4 L1122,544.2 L1123,544.1 L1124,544.0 L1125,543.8 L1126,543.7 L1127,543.5 L1128,543.3 L1129,543.1 L1130,542.9 L1131,542.7 L1132,542.5 L1133,542.3 L1134,542.1 L1135,541.9 L1136,541.8 L1137,541.6 L1138,541.4 L1139,541.2 L1140,541.1 L1141,540.9 L1142,540.8 L1143,540.7 L1144,540.6 L1145,540.5 L1146,540.6 L1147,540.7 L1148,540.8 L1149,540.9 L1150,541.1 L1151,541.2 L1152,541.4 L1153,541.6 L1154,541.8 L1155,541.9 L1156,542.1 L1157,542.3 L1158,542.5 L1159,542.7 L1160,542.9 L1161,543.1 L1162,543.3 L1163,543.5 L1164,543.7 L1165,543.8 L1166,544.0 L1167,544.1 L1168,544.2 L1169,544.4 L1170,544.5 L1171,544.5 L1172,544.5 L1173,544.5 L1174,544.5 L1175,544.5 L1176,544.5 L1177,544.5 L1178,544.5 L1179,544.5 L1180,544.5 L1181,544.5 L1182,544.5 L1183,544.5 L1184,544.5 L1185,544.5 L1186,544.5 L1187,544.5 L1188,544.5 L1189,544.5 L1190,544.5 L1191,544.5 L1192,544.5 L1193,544.5 L1194,544.5 L1195,544.5 L1196,544.5 L1197,544.5 L1198,544.5 L1199,544.5 L1200,544.5 L1201,544.5 L1202,544.5 L1203,544.5 L1204,544.5 L1205,544.5 L1206,544.5 L1207,544.5 L1208,544.5 L1209,544.5 L1210,544.5 L1211,544.5 L1212,544.5 L1213,544.5 L1214,544.5 L1215,544.5 L1216,544.5 L1217,544.5 L1218,544.5 L1219,544.5 L1220,544.5 L1221,544.5 L1222,544.5 L1223,544.5 L1224,544.5 L1225,544.5 L1226,544.5 L1227,544.5 L1228,544.5 L1229,544.5 L1230,544.5 L1231,544.5 L1232,544.5 L1233,544.5 L1234,544.5 L1235,544.5 L1236,544.5 L1237,544.5 L1238,544.5 L1239,544.5 L1240,544.5 L1241,544.5 L1242,544.5 L1243,544.5 L1244,544.5 L1245,544.5 L1246,544.5 L1247,544.5 L1248,544.5 L1249,544.5 L1250,544.5 L1251,544.5 L1252,544.5 L1253,544.5 L1254,544.5 L1255,544.5 L1256,544.5 L1257,544.5 L1258,544.5 L1259,544.5 L1260,544.5 L1261,544.5 L1262,544.5 L1263,544.5 L1264,544.5 L1265,544.5 L1266,544.5 L1267,544.5 L1268,544.5 L1269,544.5 L1270,544.5 L1271,544.5 L1272,544.5 L1273,544.5 L1274,544.5 L1275,544.5 L1276,544.5 L1277,544.5 L1278,544.5 L1279,544.5 L1280,544.5 L1281,544.5 L1282,544.5 L1283,544.5 L1284,544.5 L1285,544.5 L1286,544.5 L1287,544.5 L1288,544.5 L1289,544.5 L1290,544.5 L1291,544.5 L1292,544.5 L1293,544.5 L1294,544.5 L1295,544.5 L1296,544.5 L1297,544.5 L1298,544.5 L1299,544.5 L1300,544.5 L1301,544.5 L1302,544.5 L1303,544.5 L1304,544.5 L1305,544.5 L1306,544.5 L1307,544.5 L1308,544.5 L1309,544.5 L1310,544.5 L1311,544.5 L1312,544.5 L1313,544.5 L1314,544.5 L1315,544.5 L1316,544.5 L1317,544.5 L1318,544.5 L1319,544.5 L1320,544.5 L1321,544.5 L1322,544.5 L1323,544.5 L1324,544.5 L1325,544.5 L1326,544.5 L1327,544.5 L1328,544.5 L1329,544.5 L1330,544.5 L1331,544.5 L1332,544.5 L1333,544.5 L1334,544.5 L1335,544.5 L1336,544.5 L1337,544.5 L1338,541.8 L1339,537.8 L1340,533.1 L1341,527.7 L1342,521.7 L1343,515.1 L1344,508.1 L1345,500.7 L1346,493.1 L1347,485.2 L1348,477.3 L1349,469.5 L1350,461.8 L1351,454.3 L1352,447.2 L1353,440.6 L1354,434.5 L1355,429.0 L1356,424.1 L1357,419.9 L1358,416.5 L1359,419.9 L1360,424.1 L1361,429.0 L1362,434.5 L1363,440.6 L1364,447.2 L1365,454.3 L1366,461.8 L1367,469.5 L1368,477.3 L1369,485.2 L1370,493.1 L1371,500.7 L1372,508.1 L1373,515.1 L1374,521.7 L1375,527.7 L1376,533.1 L1377,537.8 L1378,541.8 L1379,544.5 L1380,544.5 L1381,544.5 L1382,544.5 L1383,544.5 L1384,544.5 L1385,544.5 L1386,544.5 L1387,544.5 L1388,544.5 L1389,544.5 L1390,544.5 L1391,544.5 L1392,544.5 L1393,544.5 L1394,544.5 L1395,544.5 L1396,544.5 L1397,544.5 L1398,544.5 L1399,544.5 L1400,544.5 L1401,544.5 L1402,544.5 L1403,544.5 L1404,544.5 L1405,544.5 L1406,544.5 L1407,544.5 L1408,544.5 L1409,544.5 L1410,544.5 L1411,544.5 L1412,544.5 L1413,544.5 L1414,544.5 L1415,544.5 L1416,544.5 L1417,544.5 L1418,544.5 L1419,544.5 L1420,544.5 L1421,544.5 L1422,544.5 L1423,544.5 L1424,544.5 L1425,544.5 L1426,544.5 L1427,544.5 L1428,544.5 L1429,544.5 L1430,544.5 L1431,544.5 L1432,544.5 L1433,544.5 L1434,544.5 L1435,544.5 L1436,544.5 L1437,544.5 L1438,544.5 L1439,544.5 L1440,544.5 L1441,544.5 L1442,544.5 L1443,544.5 L1444,544.5 L1445,544.5 L1446,544.5 L1447,544.5 L1448,544.5 L1449,544.5 L1450,544.5 L1451,544.5 L1452,544.5 L1453,544.5 L1454,544.5 L1455,544.5 L1456,544.5 L1457,544.5 L1458,544.5 L1459,544.5 L1460,544.5 L1461,544.5 L1462,544.5 L1463,544.5 L1464,544.5 L1465,544.5 L1466,544.5 L1467,544.5 L1468,544.5 L1469,544.5 L1470,544.5 L1471,544.5 L1472,544.5 L1473,544.5 L1474,544.5 L1475,544.5 L1476,544.5 L1477,544.5 L1478,544.5 L1479,544.5 L1480,544.5 L1481,544.5 L1482,544.5 L1483,544.5 L1484,544.5 L1485,544.5 L1486,544.5 L1487,544.5 L1488,544.5 L1489,544.5 L1490,544.5 L1491,544.5 L1492,544.5 L1493,544.5 L1494,544.5 L1495,544.5 L1496,544.5 L1497,544.5 L1498,544.5 L1499,544.5 L1500,544.5 L1501,544.5 L1502,544.5 L1503,544.5 L1504,544.5 L1505,544.5 L1506,544.5 L1507,544.5 L1508,544.5 L1509,544.5 L1510,544.5 L1511,544.5 L1512,544.5 L1513,544.5 L1514,544.5 L1515,544.5 L1516,544.5 L1517,544.5 L1518,544.5 L1519,544.5 L1520,544.5 L1521,544.5 L1522,544.5 L1523,544.5 L1524,544.5 L1525,544.5 L1526,544.5 L1527,544.5 L1528,544.5 L1529,544.5 L1530,544.5 L1531,544.5 L1532,544.5 L1533,544.5 L1534,544.5 L1535,544.5 L1536,544.5 L1537,544.5 L1538,544.5 L1539,544.5 L1540,544.5 L1541,544.5 L1542,544.5 L1543,544.5 L1544,544.5 L1545,544.5 L1546,544.5 L1547,544.5 L1548,544.5 L1549,544.5 L1550,544.5 L1551,544.5 L1552,544.5 L1553,544.5 L1554,544.5 L1555,544.5 L1556,544.5 L1557,544.5 L1558,544.5 L1559,544.5 L1560,544.5 L1561,544.5 L1562,544.5 L1563,544.5 L1564,544.5 L1565,544.5 L1566,544.5 L1567,544.5 L1568,544.5 L1569,544.5 L1570,544.5 L1571,544.5 L1572,544.5 L1573,544.5 L1574,544.5 L1575,544.5 L1576,544.5 L1577,544.5 L1578,544.5 L1579,544.5 L1580,544.5 L1581,544.5 L1582,544.5 L1583,544.5 L1584,544.5 L1585,544.5 L1586,544.5 L1587,544.5 L1588,544.5 L1589,544.5 L1590,544.5 L1591,544.5 L1592,544.5 L1593,544.5 L1594,544.5" fill="none" stroke="#FF0000" stroke-width="2" stroke-linejoin="round" shape-rendering="crispEdges"/><path d="M477,540.7 L478,540.3 L479,539.8 L480,539.4 L481,539.0 L482,538.6 L483,538.3 L484,538.0 L485,537.7 L486,537.5 L487,537.7 L488,538.0 L489,538.3 L490,538.6 L491,539.0 L492,539.4 L493,539.8 L494,540.3 L495,540.7 L496,541.2 L497,541.7 L498,542.1 L499,542.5 L500,543.0 L501,543.3 L502,543.7 L503,544.0 L504,544.2 L505,544.5 L506,544.5 L507,544.5 L508,544.5 L509,544.5 L510,544.5 L511,544.5 L512,544.5 L513,544.5 L514,544.5 L515,544.5 L516,544.5 L517,544.5 L518,544.5 L519,544.5 L520,544.5 L521,544.5 L522,544.5 L523,544.5 L524,544.5 L525,544.5 L526,544.5 L527,544.5 L528,544.5 L529,544.5 L530,544.5 L531,544.5 L532,544.5 L533,544.5 L534,544.5 L535,544.5 L536,544.5 L537,544.5 L538,544.5 L539,544.5 L540,544.5 L541,544.5 L542,544.5 L543,544.5 L544,544.5 L545,544.5 L546,544.5 L547,544.5 L548,544.5 L549,544.5 L550,544.5 L551,544.5 L552,544.5 L553,544.5 L554,544.5 L555,544.5 L556,544.5 L557,544.5 L558,544.5 L559,544.5 L560,544.5 L561,544.5 L562,544.5 L563,544.5 L564,544.5 L565,544.5 L566,544.5 L567,544.5 L568,544.5 L569,544.5 L570,544.5 L571,544.5 L572,544.5 L573,544.5 L574,544.5 L575,544.5 L576,544.5 L577,544.5 L578,544.5 L579,544.5 L580,544.5 L581,544.5 L582,544.5 L583,544.5 L584,544.5 L585,544.5 L586,544.5 L587,544.5 L588,544.5 L589,544.5 L590,544.5 L591,543.5 L592,541.6 L593,539.3 L594,536.6 L595,533.6 L596,530.3 L597,526.7 L598,523.0 L599,519.3 L600,515.5 L601,511.7 L602,508.1 L603,504.7 L604,501.6 L605,498.8 L606,496.3 L607,494.2 L608,492.5 L609,494.2 L610,496.3 L611,498.8 L612,501.6 L613,504.7 L614,508.1 L615,511.7 L616,515.5 L617,519.3 L618,523.0 L619,526.7 L620,530.3 L621,533.6 L622,536.6 L623,539.3 L624,541.6 L625,543.5 L626,544.5 L627,544.5 L628,544.5 L629,544.5 L630,544.5 L631,544.5 L632,544.5 L633,544.5 L634,544.5 L635,544.5 L636,544.5 L637,544.5 L638,544.5 L639,544.5 L640,544.5 L641,544.5 L642,544.5 L643,544.5 L644,544.5 L645,544.5 L646,544.5 L647,544.5 L648,544.5 L649,544.5 L650,544.5 L651,544.5 L652,544.5 L653,544.5 L654,544.5 L655,544.5 L656,544.5 L657,544.5 L658,544.5 L659,544.5 L660,544.5 L661,544.5 L662,544.5 L663,544.5 L664,544.5 L665,544.5 L666,544.5 L667,544.5 L668,544.5 L669,544.5 L670,544.5 L671,544.5 L672,544.5 L673,544.5 L674,544.5 L675,544.5 L676,544.5 L677,544.5 L678,544.5 L679,544.5 L680,544.5 L681,544.5 L682,544.5 L683,544.5 L684,544.5 L685,544.5 L686,544.5 L687,544.5 L688,544.5 L689,544.5 L690,544.5 L691,544.5 L692,544.5 L693,544.5 L694,544.5 L695,544.5 L696,544.5 L697,544.5 L698,544.5 L699,544.5 L700,544.5 L701,544.5 L702,544.5 L703,544.5 L704,544.5 L705,544.5 L706,544.5 L707,544.5 L708,544.5 L709,544.5 L710,544.5 L711,544.2 L712,544.0 L713,543.7 L714,543.3 L715,543.0 L716,542.5 L717,542.1 L718,541.7 L719,541.2 L720,540.7 L721,540.3 L722,539.8 L723,539.4 L724,539.0 L725,538.6 L726,538.3 L727,538.0 L728,537.7 L729,537.5 L730,537.7 L731,538.0 L732,538.3 L733,538.6 L734,539.0 L735,539.4 L736,539.8 L737,540.3 L738,540.7 L739,541.2 L740,541.7 L741,542.1 L742,542.5 L743,543.0 L744,543.3 L745,543.7 L746,544.0 L747,544.2 L748,544.5 L749,544.5 L750,544.5 L751,544.5 L752,544.5 L753,544.5 L754,544.5 L755,544.5 L756,544.5 L757,544.5 L758,544.5 L759,544.5 L760,544.5 L761,544.5 L762,544.5 L763,544.5 L764,544.5 L765,542.5 L766,539.6 L767,536.1 L768,532.1 L769,527.7 L770,522.8 L771,517.6 L772,512.2 L773,506.5 L774,500.9 L775,495.2 L776,489.6 L777,484.3 L778,479.2 L779,474.5 L780,470.2 L781,466.4 L782,463.2 L783,460.4 L784,460.9 L785,463.8 L786,467.1 L787,471.1 L788,475.4 L789,480.2 L790,485.3 L791,490.7 L792,496.3 L793,502.0 L794,507.7 L795,513.3 L796,518.7 L797,523.8 L798,528.6 L799,532.9 L800,536.9 L801,540.2 L802,543.1 L803,544.5 L804,544.5 L805,544.5 L806,544.5 L807,544.5 L808,544.5 L809,544.5 L810,544.5 L811,544.5 L812,544.5 L813,544.5 L814,544.5 L815,544.5 L816,544.5 L817,544.5 L818,544.5 L819,544.5 L820,544.5 L821,544.5 L822,544.5 L823,544.5 L824,544.5 L825,544.5 L826,544.5 L827,544.5 L828,544.5 L829,544.5 L830,544.5 L831,544.5 L832,544.5 L833,544.0 L834,538.6 L835,532.0 L836,524.5 L837,516.0 L838,506.7 L839,496.5 L840,485.6 L841,474.2 L842,462.3 L843,450.1 L844,437.7 L845,425.4 L846,413.1 L847,401.2 L848,389.6 L849,378.6 L850,368.3 L851,358.8 L852,350.1 L853,342.4 L854,335.7 L855,330.0 L856,332.1 L857,338.2 L858,345.3 L859,353.4 L860,362.5 L861,372.3 L862,382.9 L863,394.2 L864,405.9 L865,418.0 L866,430.3 L867,442.7 L868,455.0 L869,467.1 L870,478.8 L871,490.1 L872,500.7 L873,510.5 L874,519.6 L875,527.7 L876,534.8 L877,540.9 L878,544.5 L879,544.5 L880,544.5 L881,544.5 L882,544.5 L883,544.5 L884,544.5 L885,544.5 L886,544.5 L887,544.2 L888,543.9 L889,543.6 L890,543.2 L891,542.7 L892,542.3 L893,541.8 L894,541.2 L895,540.7 L896,540.2 L897,539.6 L898,539.1 L899,538.6 L900,538.2 L901,537.7 L902,537.4 L903,537.0 L904,536.7 L905,536.5 L906,536.7 L907,537.0 L908,537.4 L909,537.7 L910,538.2 L911,538.6 L912,539.1 L913,539.6 L914,540.2 L915,540.7 L916,541.2 L917,541.8 L918,542.3 L919,542.7 L920,543.2 L921,543.6 L922,543.9 L923,544.2 L924,544.5 L925,544.5 L926,544.5 L927,544.5 L928,544.5 L929,544.5 L930,544.5 L931,542.7 L932,540.1 L933,537.0 L934,533.5 L935,529.5 L936,525.2 L937,520.6 L938,515.8 L939,510.8 L940,505.6 L941,500.4 L942,495.3 L943,490.2 L944,485.3 L945,480.7 L946,476.3 L947,472.3 L948,468.7 L949,465.5 L950,462.8 L951,460.5 L952,462.8 L953,465.5 L954,468.7 L955,472.3 L956,476.3 L957,480.7 L958,485.3 L959,490.2 L960,495.3 L961,500.4 L962,505.6 L963,510.8 L964,515.8 L965,520.6 L966,525.2 L967,529.5 L968,533.5 L969,537.0 L970,540.1 L971,542.7 L972,544.5 L973,544.5 L974,544.5 L975,544.5 L976,544.5 L977,544.5 L978,544.5 L979,544.5 L980,544.5 L981,544.5 L982,544.5 L983,544.5 L984,544.5 L985,544.5 L986,544.5 L987,544.5 L988,544.5 L989,544.5 L990,544.5 L991,544.5 L992,544.5 L993,544.5 L994,544.5 L995,544.5 L996,544.5 L997,544.5 L998,544.5 L999,544.5 L1000,544.5 L1001,544.5 L1002,544.5 L1003,544.5 L1004,544.5 L1005,544.5 L1006,544.5 L1007,544.5 L1008,544.5 L1009,544.5 L1010,544.5 L1011,544.5 L1012,544.5 L1013,544.5 L1014,544.5 L1015,544.5 L1016,544.5 L1017,544.5 L1018,544.5 L1019,544.5 L1020,544.5 L1021,544.5 L1022,544.5 L1023,544.5 L1024,544.5 L1025,544.5 L1026,544.5 L1027,544.5 L1028,544.4 L1029,542.6 L1030,540.5 L1031,538.0 L1032,535.1 L1033,531.9 L1034,528.5 L1035,524.9 L1036,521.2 L1037,517.4 L1038,513.6 L1039,509.9 L1040,506.4 L1041,503.1 L1042,500.1 L1043,497.5 L1044,495.2 L1045,493.3 L1046,493.3 L1047,495.2 L1048,497.5 L1049,500.1 L1050,503.1 L1051,506.4 L1052,509.9 L1053,513.6 L1054,517.4 L1055,521.2 L1056,524.9 L1057,528.5 L1058,531.9 L1059,535.1 L1060,538.0 L1061,540.5 L1062,542.6 L1063,543.7 L1064,541.5 L1065,538.7 L1066,535.5 L1067,531.9 L1068,527.8 L1069,523.5 L1070,518.9 L1071,514.0 L1072,509.1 L1073,504.0 L1074,498.9 L1075,494.0 L1076,489.1 L1077,484.4 L1078,480.0 L1079,475.9 L1080,472.2 L1081,468.9 L1082,466.0 L1083,463.5 L1084,463.5 L1085,466.0 L1086,468.9 L1087,472.2 L1088,475.9 L1089,480.0 L1090,484.4 L1091,489.1 L1092,494.0 L1093,498.9 L1094,504.0 L1095,509.1 L1096,514.0 L1097,518.9 L1098,523.5 L1099,527.8 L1100,531.9 L1101,535.5 L1102,538.7 L1103,541.5 L1104,543.9 L1105,544.5 L1106,544.5 L1107,544.5 L1108,544.5 L1109,544.5 L1110,544.5 L1111,544.5 L1112,544.5 L1113,544.5 L1114,544.5 L1115,544.5 L1116,544.5 L1117,544.5 L1118,544.5 L1119,544.5 L1120,544.5 L1121,544.5 L1122,544.5 L1123,544.5 L1124,544.5 L1125,544.5 L1126,544.5 L1127,544.5 L1128,544.5 L1129,544.5 L1130,544.5 L1131,544.5 L1132,544.5 L1133,544.5 L1134,544.5 L1135,544.5 L1136,544.5 L1137,544.5 L1138,544.5 L1139,544.5 L1140,544.5 L1141,544.5 L1142,544.5 L1143,544.5 L1144,544.5 L1145,544.5 L1146,544.5 L1147,544.5 L1148,544.5 L1149,544.5 L1150,544.5 L1151,544.5 L1152,544.5 L1153,544.5 L1154,544.5 L1155,544.5 L1156,544.5 L1157,544.5 L1158,544.5 L1159,544.5 L1160,544.5 L1161,544.5 L1162,544.5 L1163,544.5 L1164,544.5 L1165,544.5 L1166,544.5 L1167,544.3 L1168,542.1 L1169,539.4 L1170,536.2 L1171,532.6 L1172,528.6 L1173,524.2 L1174,519.6 L1175,514.9 L1176,510.1 L1177,505.3 L1178,500.6 L1179,496.1 L1180,492.0 L1181,488.2 L1182,484.8 L1183,481.9 L1184,479.5 L1185,479.5 L1186,481.9 L1187,484.8 L1188,488.2 L1189,492.0 L1190,496.1 L1191,500.6 L1192,505.3 L1193,510.1 L1194,514.9 L1195,519.6 L1196,524.2 L1197,528.6 L1198,532.6 L1199,536.2 L1200,539.4 L1201,542.1 L1202,544.3 L1203,544.5 L1204,544.5 L1205,544.5 L1206,544.5 L1207,544.5 L1208,544.5 L1209,544.5 L1210,544.5 L1211,544.5 L1212,544.5 L1213,544.5 L1214,544.5 L1215,544.5 L1216,544.5 L1217,544.5 L1218,544.5 L1219,544.5 L1220,544.5 L1221,544.5 L1222,544.5 L1223,544.5 L1224,544.5 L1225,544.5 L1226,544.5 L1227,544.2 L1228,542.4 L1229,540.2 L1230,537.7 L1231,534.9 L1232,531.7 L1233,528.3 L1234,524.7 L1235,520.9 L1236,517.1 L1237,513.2 L1238,509.3 L1239,505.6 L1240,502.0 L1241,498.6 L1242,495.5 L1243,492.7 L1244,490.3 L1245,488.2 L1246,486.5 L1247,488.2 L1248,490.3 L1249,492.7 L1250,495.5 L1251,498.6 L1252,502.0 L1253,505.6 L1254,507.3 L1255,508.4 L1256,509.1 L1257,509.4 L1258,509.1 L1259,508.3 L1260,507.1 L1261,505.3 L1262,503.1 L1263,500.4 L1264,497.3 L1265,493.9 L1266,489.1 L1267,484.1 L1268,479.4 L1269,475.1 L1270,471.1 L1271,467.4 L1272,464.3 L1273,461.5 L1274,459.7 L1275,462.0 L1276,464.9 L1277,468.1 L1278,471.6 L1279,474.7 L1280,477.8 L1281,481.0 L1282,484.3 L1283,487.5 L1284,490.6 L1285,493.7 L1286,496.6 L1287,499.4 L1288,501.9 L1289,504.2 L1290,506.3 L1291,508.1 L1292,509.6 L1293,510.8 L1294,511.7 L1295,511.8 L1296,510.5 L1297,509.5 L1298,510.5 L1299,511.8 L1300,513.3 L1301,515.0 L1302,516.8 L1303,518.9 L1304,521.0 L1305,523.3 L1306,525.6 L1307,527.9 L1308,530.3 L1309,532.5 L1310,534.7 L1311,536.8 L1312,538.7 L1313,540.4 L1314,541.9 L1315,543.2 L1316,544.3 L1317,544.5 L1318,544.5 L1319,544.5 L1320,544.5 L1321,544.5 L1322,544.5 L1323,544.5 L1324,544.5 L1325,544.5 L1326,544.5 L1327,544.5 L1328,544.5 L1329,544.5 L1330,544.5 L1331,544.5 L1332,544.5 L1333,544.5 L1334,544.5 L1335,544.5 L1336,544.5 L1337,544.5 L1338,544.5 L1339,544.5 L1340,544.5 L1341,544.5 L1342,544.5 L1343,544.5 L1344,544.5 L1345,544.5 L1346,544.5 L1347,544.5 L1348,544.5 L1349,544.5 L1350,544.5 L1351,544.5 L1352,544.5 L1353,544.5 L1354,544.5 L1355,544.4 L1356,544.2 L1357,544.0 L1358,543.7 L1359,543.5 L1360,543.2 L1361,542.8 L1362,542.5 L1363,542.1 L1364,541.8 L1365,541.4 L1366,541.0 L1367,540.6 L1368,540.2 L1369,539.8 L1370,539.4 L1371,539.0 L1372,538.6 L1373,538.3 L1374,538.0 L1375,537.6 L1376,537.4 L1377,537.1 L1378,536.9 L1379,536.7 L1380,536.5 L1381,536.7 L1382,536.9 L1383,537.1 L1384,537.4 L1385,537.6 L1386,538.0 L1387,538.3 L1388,538.6 L1389,539.0 L1390,539.4 L1391,539.8 L1392,540.2 L1393,540.6 L1394,541.0 L1395,541.4 L1396,541.8 L1397,542.1 L1398,542.5 L1399,542.8 L1400,543.2 L1401,543.5 L1402,543.7 L1403,544.0 L1404,544.2 L1405,544.4 L1406,544.5 L1407,544.5 L1408,544.5 L1409,544.5 L1410,544.5 L1411,544.5 L1412,544.5 L1413,544.5 L1414,544.5 L1415,544.5 L1416,544.5 L1417,544.5 L1418,544.5 L1419,544.5 L1420,544.5 L1421,544.5 L1422,544.5 L1423,544.5 L1424,544.5 L1425,544.5 L1426,544.5 L1427,544.5 L1428,544.5 L1429,544.5 L1430,544.5 L1431,544.5 L1432,544.5 L1433,544.5 L1434,544.5 L1435,544.5 L1436,544.5 L1437,544.5 L1438,544.5 L1439,544.5 L1440,544.5 L1441,544.5 L1442,544.5 L1443,544.5 L1444,544.5 L1445,544.5 L1446,544.5 L1447,544.5 L1448,544.5 L1449,544.5 L1450,544.5 L1451,544.5 L1452,544.5 L1453,544.5 L1454,544.5 L1455,544.5 L1456,544.5 L1457,544.5 L1458,544.5 L1459,544.5 L1460,544.5 L1461,544.5 L1462,544.5 L1463,544.5 L1464,544.5 L1465,544.5 L1466,544.5 L1467,544.5 L1468,544.5 L1469,544.5 L1470,544.5 L1471,544.5 L1472,544.5 L1473,544.5 L1474,544.5 L1475,544.5 L1476,544.5 L1477,544.5 L1478,544.5 L1479,544.5 L1480,544.5 L1481,544.5 L1482,544.5 L1483,544.1 L1484,539.2 L1485,533.4 L1486,526.6 L1487,519.0 L1488,510.5 L1489,501.3 L1490,491.5 L1491,481.2 L1492,470.6 L1493,459.8 L1494,448.9 L1495,438.1 L1496,427.6 L1497,417.5 L1498,407.9 L1499,399.0 L1500,390.8 L1501,383.5 L1502,377.1 L1503,371.7 L1504,369.8 L1505,374.8 L1506,380.9 L1507,387.8 L1508,395.7 L1509,404.3 L1510,413.6 L1511,423.5 L1512,433.9 L1513,444.6 L1514,455.4 L1515,466.3 L1516,477.0 L1517,487.4 L1518,497.4 L1519,506.9 L1520,515.7 L1521,523.7 L1522,530.8 L1523,537.0 L1524,542.3 L1525,544.5 L1526,544.5 L1527,544.5 L1528,544.5 L1529,544.5 L1530,544.5 L1531,544.5 L1532,544.5 L1533,544.5 L1534,544.5 L1535,544.5 L1536,544.5 L1537,544.5 L1538,544.5 L1539,544.5 L1540,544.5 L1541,544.5 L1542,544.3 L1543,544.1 L1544,543.9 L1545,543.7 L1546,543.4 L1547,543.1 L1548,542.8 L1549,542.5 L1550,542.1 L1551,541.8 L1552,541.5 L1553,541.1 L1554,540.8 L1555,540.5 L1556,540.3 L1557,540.0 L1558,539.8 L1559,539.6 L1560,539.5 L1561,539.6 L1562,539.8 L1563,540.0 L1564,540.3 L1565,540.5 L1566,540.8 L1567,541.1 L1568,541.5 L1569,541.8 L1570,542.1 L1571,542.5 L1572,542.8 L1573,543.1 L1574,543.4 L1575,543.7 L1576,543.9 L1577,544.1 L1578,544.3 L1579,544.5 L1580,544.5 L1581,544.5 L1582,544.5 L1583,544.5 L1584,544.5 L1585,544.5 L1586,544.5 L1587,544.5 L1588,544.5 L1589,544.5 L1590,544.5 L1591,544.5 L1592,544.5 L1593,544.5 L1594,544.5" fill="none" stroke="#00C800" stroke-width="2" stroke-linejoin="round" shape-rendering="crispEdges"/><path d="M477,544.5 L478,544.5 L479,544.5 L480,544.5 L481,544.5 L482,544.5 L483,544.5 L484,544.5 L485,544.5 L486,544.5 L487,544.5 L488,544.5 L489,544.5 L490,544.5 L491,544.5 L492,544.5 L493,544.5 L494,544.5 L495,544.5 L496,544.5 L497,544.5 L498,544.5 L499,544.5 L500,544.5 L501,544.5 L502,544.5 L503,544.5 L504,544.5 L505,544.5 L506,544.5 L507,544.5 L508,544.5 L509,544.5 L510,544.5 L511,544.5 L512,544.5 L513,544.5 L514,544.5 L515,544.5 L516,544.5 L517,544.5 L518,544.5 L519,544.5 L520,544.5 L521,544.4 L522,544.2 L523,544.1 L524,544.0 L525,543.8 L526,543.7 L527,543.5 L528,543.3 L529,543.1 L530,542.9 L531,542.7 L532,542.5 L533,542.3 L534,542.1 L535,541.9 L536,541.8 L537,541.6 L538,541.4 L539,541.2 L540,541.1 L541,540.9 L542,540.8 L543,540.7 L544,540.6 L545,540.5 L546,540.6 L547,540.7 L548,540.8 L549,540.9 L550,541.1 L551,541.2 L552,541.4 L553,541.6 L554,541.8 L555,541.9 L556,542.1 L557,542.3 L558,542.5 L559,542.7 L560,542.9 L561,541.6 L562,538.9 L563,535.5 L564,531.6 L565,527.2 L566,522.3 L567,517.1 L568,511.5 L569,505.8 L570,500.0 L571,494.1 L572,488.2 L573,482.6 L574,477.2 L575,472.2 L576,467.6 L577,463.5 L578,460.0 L579,457.0 L580,456.5 L581,459.3 L582,462.8 L583,466.7 L584,471.2 L585,476.2 L586,481.5 L587,487.1 L588,492.9 L589,498.8 L590,504.8 L591,510.6 L592,516.3 L593,521.8 L594,526.9 L595,531.5 L596,535.7 L597,539.4 L598,542.5 L599,544.5 L600,544.5 L601,544.5 L602,544.5 L603,544.5 L604,544.5 L605,544.5 L606,544.5 L607,544.5 L608,544.5 L609,544.5 L610,544.5 L611,544.5 L612,544.5 L613,544.5 L614,544.5 L615,544.5 L616,544.5 L617,544.5 L618,544.5 L619,544.5 L620,544.5 L621,544.5 L622,544.5 L623,544.5 L624,544.5 L625,544.5 L626,544.5 L627,544.5 L628,544.5 L629,544.5 L630,544.5 L631,544.5 L632,544.5 L633,544.5 L634,544.5 L635,544.5 L636,544.5 L637,544.5 L638,544.5 L639,544.5 L640,544.5 L641,544.5 L642,544.5 L643,544.5 L644,544.5 L645,544.5 L646,544.5 L647,544.5 L648,544.5 L649,544.5 L650,544.5 L651,544.5 L652,544.5 L653,544.5 L654,544.5 L655,544.5 L656,544.5 L657,544.5 L658,544.5 L659,544.5 L660,544.5 L661,544.5 L662,544.0 L663,540.8 L664,537.1 L665,532.8 L666,527.9 L667,522.5 L668,516.7 L669,510.4 L670,503.9 L671,497.2 L672,490.4 L673,483.5 L674,476.7 L675,470.1 L676,463.8 L677,457.8 L678,452.2 L679,447.1 L680,442.5 L681,438.6 L682,435.2 L683,434.6 L684,437.9 L685,441.7 L686,446.2 L687,451.1 L688,456.6 L689,462.6 L690,468.8 L691,475.4 L692,482.2 L693,489.0 L694,495.8 L695,502.6 L696,509.2 L697,515.4 L698,521.4 L699,526.9 L700,531.8 L701,536.3 L702,540.1 L703,543.4 L704,544.5 L705,544.5 L706,544.5 L707,544.5 L708,544.5 L709,544.5 L710,544.5 L711,544.5 L712,544.5 L713,544.5 L714,544.5 L715,544.5 L716,544.5 L717,544.5 L718,544.5 L719,544.5 L720,544.5 L721,544.5 L722,544.5 L723,544.5 L724,544.5 L725,544.5 L726,544.5 L727,544.5 L728,544.5 L729,544.5 L730,544.5 L731,544.5 L732,544.5 L733,544.5 L734,542.1 L735,538.5 L736,534.2 L737,529.4 L738,524.0 L739,518.1 L740,511.8 L741,505.2 L742,498.3 L743,491.3 L744,484.2 L745,477.1 L746,470.2 L747,463.5 L748,457.1 L749,451.1 L750,445.6 L751,440.7 L752,436.3 L753,432.6 L754,429.5 L755,432.6 L756,436.3 L757,440.7 L758,445.6 L759,451.1 L760,457.1 L761,463.5 L762,470.2 L763,477.1 L764,484.2 L765,491.3 L766,498.3 L767,505.2 L768,511.8 L769,518.1 L770,524.0 L771,529.4 L772,534.2 L773,538.5 L774,542.1 L775,544.5 L776,544.5 L777,544.5 L778,544.5 L779,544.5 L780,544.5 L781,544.5 L782,544.5 L783,544.5 L784,544.5 L785,544.5 L786,544.5 L787,544.5 L788,544.5 L789,544.5 L790,544.5 L791,544.5 L792,544.5 L793,544.5 L794,544.5 L795,544.5 L796,544.5 L797,544.5 L798,544.5 L799,544.5 L800,544.5 L801,544.5 L802,544.5 L803,544.5 L804,544.5 L805,544.5 L806,544.5 L807,544.5 L808,544.5 L809,544.5 L810,544.5 L811,544.5 L812,544.5 L813,544.5 L814,544.5 L815,544.5 L816,544.4 L817,544.2 L818,544.1 L819,544.0 L820,543.8 L821,543.7 L822,543.5 L823,543.3 L824,543.1 L825,542.9 L826,542.7 L827,542.5 L828,542.3 L829,542.1 L830,541.9 L831,541.8 L832,541.6 L833,541.4 L834,541.2 L835,541.1 L836,540.9 L837,540.8 L838,540.7 L839,540.6 L840,540.5 L841,540.6 L842,540.7 L843,540.8 L844,540.9 L845,541.1 L846,541.2 L847,541.4 L848,541.6 L849,541.8 L850,541.9 L851,542.1 L852,542.3 L853,542.5 L854,542.7 L855,542.9 L856,543.1 L857,543.3 L858,543.5 L859,543.7 L860,543.8 L861,544.0 L862,544.1 L863,544.2 L864,542.9 L865,540.2 L866,536.8 L867,532.8 L868,528.3 L869,523.4 L870,518.2 L871,512.7 L872,507.1 L873,501.5 L874,496.0 L875,490.6 L876,485.6 L877,481.0 L878,476.8 L879,473.1 L880,470.0 L881,467.5 L882,470.0 L883,473.1 L884,476.8 L885,481.0 L886,485.6 L887,490.6 L888,496.0 L889,501.5 L890,507.1 L891,512.7 L892,518.2 L893,523.4 L894,528.3 L895,532.8 L896,536.8 L897,540.2 L898,543.1 L899,544.5 L900,544.5 L901,544.5 L902,542.3 L903,538.9 L904,535.0 L905,530.6 L906,525.6 L907,520.2 L908,514.4 L909,508.3 L910,501.9 L911,495.4 L912,488.9 L913,482.4 L914,476.0 L915,469.8 L916,463.9 L917,458.4 L918,453.4 L919,448.8 L920,444.8 L921,441.3 L922,438.5 L923,441.3 L924,444.8 L925,448.8 L926,453.4 L927,458.4 L928,463.9 L929,469.8 L930,476.0 L931,482.4 L932,488.9 L933,495.4 L934,501.9 L935,508.3 L936,514.4 L937,520.2 L938,525.6 L939,530.6 L940,535.0 L941,538.9 L942,542.3 L943,544.5 L944,544.5 L945,544.5 L946,544.5 L947,544.5 L948,544.5 L949,544.5 L950,544.5 L951,544.5 L952,544.5 L953,544.5 L954,544.5 L955,544.5 L956,544.5 L957,544.5 L958,544.5 L959,544.5 L960,544.5 L961,544.5 L962,544.0 L963,541.4 L964,538.2 L965,534.6 L966,530.4 L967,525.9 L968,520.9 L969,515.7 L970,510.1 L971,504.4 L972,498.7 L973,492.9 L974,487.1 L975,481.5 L976,476.2 L977,471.1 L978,466.3 L979,462.0 L980,458.2 L981,454.8 L982,452.0 L983,451.4 L984,454.2 L985,457.5 L986,461.2 L987,465.4 L988,470.1 L989,475.1 L990,480.4 L991,486.0 L992,491.7 L993,497.5 L994,503.3 L995,509.0 L996,514.6 L997,519.9 L998,524.6 L999,526.2 L1000,526.7 L1001,526.2 L1002,524.6 L1003,521.9 L1004,517.0 L1005,510.8 L1006,504.2 L1007,497.5 L1008,490.6 L1009,483.7 L1010,476.8 L1011,470.1 L1012,463.7 L1013,457.6 L1014,451.9 L1015,446.7 L1016,442.1 L1017,438.0 L1018,434.5 L1019,433.3 L1020,436.5 L1021,440.4 L1022,444.8 L1023,449.8 L1024,455.3 L1025,461.2 L1026,467.5 L1027,474.1 L1028,480.9 L1029,487.8 L1030,494.7 L1031,501.5 L1032,508.2 L1033,514.6 L1034,520.6 L1035,526.2 L1036,531.3 L1037,535.8 L1038,539.7 L1039,543.1 L1040,544.5 L1041,544.5 L1042,544.1 L1043,541.9 L1044,539.1 L1045,535.9 L1046,532.2 L1047,528.1 L1048,523.8 L1049,519.1 L1050,514.4 L1051,509.6 L1052,504.8 L1053,500.1 L1054,495.7 L1055,491.6 L1056,487.8 L1057,484.5 L1058,481.6 L1059,479.3 L1060,479.7 L1061,482.2 L1062,485.1 L1063,488.5 L1064,492.4 L1065,496.6 L1066,501.1 L1067,505.7 L1068,510.5 L1069,515.3 L1070,520.1 L1071,524.7 L1072,529.0 L1073,533.0 L1074,536.6 L1075,539.7 L1076,542.4 L1077,544.5 L1078,544.5 L1079,544.5 L1080,544.5 L1081,544.5 L1082,544.5 L1083,544.5 L1084,544.5 L1085,544.5 L1086,544.5 L1087,544.5 L1088,544.5 L1089,544.5 L1090,544.5 L1091,544.5 L1092,544.5 L1093,544.5 L1094,544.5 L1095,544.5 L1096,544.5 L1097,544.5 L1098,544.5 L1099,544.5 L1100,544.5 L1101,544.5 L1102,544.5 L1103,544.5 L1104,544.5 L1105,544.5 L1106,544.5 L1107,544.5 L1108,544.5 L1109,544.5 L1110,544.5 L1111,544.5 L1112,544.5 L1113,544.5 L1114,544.5 L1115,544.5 L1116,544.5 L1117,544.5 L1118,544.5 L1119,544.5 L1120,544.5 L1121,544.5 L1122,544.5 L1123,544.5 L1124,544.5 L1125,544.5 L1126,544.5 L1127,544.5 L1128,544.5 L1129,544.5 L1130,544.5 L1131,544.5 L1132,544.5 L1133,544.5 L1134,544.5 L1135,544.2 L1136,541.3 L1137,537.8 L1138,533.6 L1139,529.0 L1140,523.8 L1141,518.2 L1142,512.3 L1143,506.0 L1144,499.6 L1145,493.0 L1146,486.4 L1147,479.8 L1148,473.4 L1149,467.3 L1150,461.5 L1151,456.1 L1152,451.1 L1153,446.6 L1154,442.7 L1155,439.4 L1156,438.3 L1157,441.4 L1158,445.0 L1159,449.2 L1160,454.0 L1161,459.3 L1162,464.9 L1163,471.0 L1164,477.3 L1165,483.7 L1166,490.3 L1167,496.9 L1168,503.5 L1169,509.8 L1170,515.9 L1171,521.6 L1172,527.0 L1173,531.8 L1174,536.2 L1175,540.0 L1176,543.1 L1177,544.5 L1178,544.5 L1179,544.5 L1180,544.5 L1181,544.5 L1182,544.5 L1183,544.5 L1184,544.5 L1185,544.5 L1186,544.5 L1187,544.5 L1188,544.5 L1189,544.5 L1190,544.5 L1191,544.5 L1192,544.5 L1193,544.5 L1194,544.5 L1195,544.5 L1196,544.5 L1197,544.5 L1198,544.5 L1199,544.5 L1200,542.9 L1201,540.9 L1202,538.5 L1203,535.8 L1204,532.7 L1205,529.5 L1206,526.0 L1207,522.4 L1208,518.8 L1209,515.1 L1210,511.6 L1211,508.2 L1212,505.0 L1213,502.1 L1214,499.5 L1215,497.3 L1216,495.4 L1217,494.9 L1218,494.9 L1219,494.9 L1220,494.8 L1221,494.7 L1222,494.5 L1223,494.3 L1224,494.1 L1225,493.8 L1226,493.5 L1227,493.2 L1228,492.9 L1229,492.5 L1230,492.2 L1231,491.9 L1232,491.6 L1233,491.3 L1234,491.0 L1235,491.3 L1236,493.3 L1237,495.7 L1238,498.4 L1239,501.5 L1240,504.9 L1241,508.6 L1242,512.4 L1243,516.3 L1244,520.3 L1245,524.1 L1246,527.9 L1247,531.5 L1248,534.8 L1249,537.7 L1250,540.3 L1251,542.6 L1252,544.3 L1253,544.5 L1254,544.5 L1255,544.5 L1256,544.5 L1257,544.5 L1258,544.5 L1259,544.5 L1260,544.5 L1261,544.5 L1262,544.5 L1263,544.5 L1264,544.5 L1265,544.5 L1266,544.5 L1267,544.5 L1268,544.5 L1269,544.5 L1270,544.5 L1271,544.5 L1272,544.5 L1273,544.5 L1274,544.5 L1275,544.5 L1276,544.5 L1277,544.5 L1278,544.5 L1279,544.5 L1280,544.5 L1281,544.5 L1282,544.5 L1283,544.5 L1284,544.5 L1285,544.5 L1286,544.5 L1287,544.5 L1288,544.5 L1289,544.5 L1290,544.5 L1291,544.5 L1292,544.5 L1293,544.5 L1294,544.5 L1295,544.5 L1296,544.5 L1297,544.5 L1298,544.5 L1299,544.5 L1300,544.5 L1301,544.5 L1302,544.5 L1303,544.5 L1304,544.5 L1305,544.5 L1306,544.5 L1307,544.5 L1308,544.5 L1309,544.5 L1310,544.5 L1311,544.5 L1312,544.5 L1313,544.5 L1314,544.5 L1315,544.5 L1316,544.5 L1317,544.5 L1318,544.5 L1319,544.5 L1320,544.5 L1321,544.5 L1322,544.5 L1323,544.5 L1324,544.5 L1325,544.5 L1326,544.5 L1327,544.5 L1328,544.5 L1329,544.5 L1330,544.5 L1331,544.5 L1332,544.5 L1333,544.5 L1334,544.5 L1335,544.5 L1336,544.5 L1337,544.5 L1338,544.5 L1339,544.5 L1340,544.5 L1341,544.5 L1342,544.5 L1343,544.5 L1344,544.5 L1345,544.5 L1346,544.5 L1347,544.5 L1348,544.5 L1349,544.5 L1350,544.5 L1351,544.5 L1352,544.5 L1353,544.5 L1354,544.5 L1355,544.5 L1356,544.5 L1357,544.5 L1358,544.5 L1359,544.5 L1360,544.5 L1361,544.5 L1362,544.5 L1363,544.5 L1364,544.5 L1365,544.5 L1366,544.5 L1367,544.5 L1368,544.5 L1369,544.5 L1370,544.5 L1371,544.5 L1372,544.5 L1373,544.5 L1374,544.5 L1375,544.5 L1376,544.5 L1377,544.5 L1378,544.5 L1379,544.5 L1380,544.5 L1381,544.5 L1382,544.5 L1383,544.5 L1384,544.5 L1385,544.5 L1386,544.5 L1387,544.5 L1388,544.5 L1389,544.5 L1390,544.5 L1391,544.5 L1392,544.5 L1393,544.5 L1394,544.5 L1395,544.5 L1396,544.5 L1397,544.5 L1398,544.5 L1399,544.5 L1400,544.5 L1401,544.5 L1402,544.5 L1403,544.5 L1404,544.5 L1405,544.5 L1406,544.5 L1407,544.5 L1408,544.5 L1409,544.5 L1410,544.5 L1411,544.5 L1412,544.5 L1413,544.5 L1414,544.5 L1415,544.5 L1416,544.5 L1417,544.5 L1418,544.5 L1419,544.5 L1420,544.5 L1421,544.5 L1422,544.5 L1423,544.5 L1424,544.5 L1425,544.5 L1426,544.5 L1427,544.5 L1428,544.5 L1429,544.5 L1430,544.5 L1431,544.5 L1432,544.5 L1433,544.5 L1434,544.5 L1435,544.5 L1436,544.5 L1437,544.5 L1438,544.5 L1439,544.5 L1440,544.5 L1441,544.5 L1442,544.5 L1443,544.5 L1444,544.5 L1445,544.5 L1446,544.5 L1447,544.5 L1448,544.5 L1449,544.5 L1450,544.5 L1451,544.5 L1452,544.5 L1453,544.5 L1454,544.5 L1455,544.5 L1456,544.5 L1457,544.5 L1458,544.5 L1459,544.5 L1460,544.5 L1461,544.5 L1462,544.5 L1463,544.5 L1464,544.5 L1465,544.5 L1466,544.5 L1467,544.5 L1468,544.5 L1469,544.5 L1470,544.5 L1471,544.5 L1472,544.5 L1473,544.5 L1474,544.5 L1475,544.5 L1476,544.5 L1477,544.5 L1478,544.5 L1479,544.5 L1480,544.5 L1481,544.5 L1482,544.5 L1483,544.5 L1484,544.5 L1485,544.5 L1486,544.5 L1487,544.5 L1488,544.5 L1489,544.5 L1490,544.5 L1491,544.5 L1492,544.5 L1493,544.5 L1494,544.5 L1495,544.5 L1496,544.5 L1497,544.5 L1498,544.5 L1499,544.5 L1500,544.5 L1501,544.5 L1502,544.5 L1503,544.5 L1504,544.5 L1505,544.5 L1506,544.5 L1507,544.5 L1508,544.5 L1509,544.5 L1510,544.5 L1511,544.5 L1512,544.5 L1513,544.5 L1514,544.5 L1515,544.5 L1516,544.5 L1517,544.5 L1518,544.5 L1519,544.5 L1520,544.5 L1521,544.5 L1522,544.5 L1523,544.5 L1524,544.5 L1525,544.5 L1526,544.5 L1527,544.5 L1528,544.5 L1529,544.5 L1530,544.5 L1531,544.5 L1532,544.5 L1533,544.5 L1534,544.5 L1535,544.5 L1536,544.5 L1537,544.5 L1538,544.5 L1539,544.5 L1540,544.5 L1541,544.5 L1542,544.5 L1543,544.5 L1544,544.5 L1545,544.5 L1546,544.5 L1547,544.5 L1548,544.5 L1549,544.5 L1550,544.5 L1551,544.5 L1552,544.5 L1553,544.5 L1554,544.5 L1555,544.5 L1556,544.5 L1557,544.5 L1558,544.5 L1559,544.5 L1560,544.5 L1561,544.5 L1562,544.5 L1563,544.5 L1564,544.5 L1565,544.5 L1566,544.5 L1567,544.5 L1568,544.5 L1569,544.5 L1570,544.5 L1571,544.5 L1572,544.5 L1573,544.5 L1574,544.5 L1575,544.5 L1576,544.5 L1577,544.5 L1578,544.5 L1579,544.5 L1580,544.5 L1581,542.6 L1582,539.8 L1583,536.5 L1584,532.7 L1585,528.5 L1586,523.9 L1587,518.9 L1588,513.7 L1589,508.3 L1590,502.8 L1591,497.3 L1592,491.7 L1593,486.3 L1594,481.1" fill="none" stroke="#0000FF" stroke-width="2" stroke-linejoin="round" shape-rendering="crispEdges"/><path d="M477,781.8 L478,776.4 L479,770.4 L480,764.1 L481,757.4 L482,750.7 L483,743.9 L484,737.2 L485,730.8 L486,724.8 L487,719.2 L488,714.2 L489,709.8 L490,706.2 L491,703.8 L492,706.9 L493,710.7 L494,715.2 L495,720.3 L496,726.0 L497,732.1 L498,738.6 L499,745.3 L500,752.0 L501,758.8 L502,765.4 L503,771.6 L504,777.5 L505,782.9 L506,787.6 L507,791.7 L508,792.6 L509,790.3 L510,785.8 L511,780.7 L512,774.9 L513,768.6 L514,762.0 L515,755.1 L516,748.0 L517,740.9 L518,734.0 L519,727.4 L520,721.1 L521,715.3 L522,710.2 L523,705.7 L524,702.0 L525,700.1 L526,703.4 L527,707.4 L528,712.2 L529,717.6 L530,723.5 L531,730.0 L532,736.8 L533,743.8 L534,750.8 L535,757.9 L536,764.7 L537,771.2 L538,777.3 L539,782.8 L540,787.7 L541,791.9 L542,795.3 L543,796.5 L544,796.5 L545,796.5 L546,796.5 L547,796.5 L548,796.5 L549,796.5 L550,796.5 L551,796.5 L552,796.5 L553,796.5 L554,796.5 L555,796.5 L556,796.5 L557,796.5 L558,796.5 L559,796.5 L560,796.5 L561,796.5 L562,796.5 L563,796.5 L564,796.5 L565,796.5 L566,796.5 L567,796.5 L568,796.5 L569,796.5 L570,796.5 L571,796.5 L572,796.5 L573,796.5 L574,796.5 L575,796.5 L576,796.5 L577,796.5 L578,796.5 L579,796.5 L580,796.5 L581,796.5 L582,795.9 L583,794.5 L584,792.7 L585,790.7 L586,788.4 L587,785.9 L588,783.2 L589,780.4 L590,777.6 L591,774.8 L592,772.1 L593,769.6 L594,767.3 L595,765.3 L596,763.5 L597,762.1 L598,762.1 L599,763.5 L600,765.3 L601,767.3 L602,769.6 L603,772.1 L604,774.8 L605,777.6 L606,780.4 L607,783.2 L608,785.9 L609,788.4 L610,790.0 L611,788.3 L612,785.5 L613,781.5 L614,776.1 L615,769.4 L616,762.1 L617,754.5 L618,746.5 L619,738.3 L620,730.1 L621,721.9 L622,714.0 L623,706.4 L624,699.2 L625,692.7 L626,686.7 L627,681.5 L628,677.1 L629,673.5 L630,677.1 L631,681.5 L632,686.7 L633,692.7 L634,699.2 L635,706.4 L636,714.0 L637,721.9 L638,730.1 L639,738.3 L640,746.5 L641,754.5 L642,762.1 L643,769.4 L644,776.1 L645,782.1 L646,787.5 L647,792.1 L648,795.8 L649,796.5 L650,796.5 L651,796.5 L652,796.5 L653,796.5 L654,796.5 L655,796.5 L656,796.5 L657,796.5 L658,796.5 L659,796.5 L660,796.5 L661,796.5 L662,796.5 L663,796.5 L664,796.5 L665,796.5 L666,796.5 L667,796.5 L668,796.5 L669,796.5 L670,796.5 L671,796.5 L672,796.5 L673,796.5 L674,796.5 L675,796.5 L676,796.5 L677,796.5 L678,796.5 L679,796.5 L680,796.5 L681,796.5 L682,796.5 L683,796.5 L684,796.5 L685,796.5 L686,796.5 L687,796.5 L688,796.5 L689,796.5 L690,796.5 L691,796.5 L692,796.5 L693,796.5 L694,796.5 L695,796.5 L696,796.5 L697,796.5 L698,796.5 L699,796.5 L700,796.5 L701,796.5 L702,796.5 L703,796.5 L704,796.5 L705,796.5 L706,796.5 L707,796.5 L708,796.5 L709,796.5 L710,796.5 L711,796.5 L712,796.5 L713,796.5 L714,796.5 L715,796.5 L716,796.5 L717,796.5 L718,796.5 L719,796.5 L720,796.5 L721,796.5 L722,796.5 L723,796.5 L724,796.5 L725,796.5 L726,796.5 L727,796.5 L728,796.5 L729,796.5 L730,796.5 L731,796.5 L732,796.5 L733,796.5 L734,796.5 L735,796.5 L736,796.5 L737,796.5 L738,796.5 L739,796.5 L740,796.5 L741,796.5 L742,796.5 L743,796.5 L744,796.5 L745,796.5 L746,796.5 L747,796.5 L748,796.5 L749,796.5 L750,796.5 L751,796.5 L752,796.5 L753,796.5 L754,796.5 L755,796.5 L756,796.5 L757,796.5 L758,796.5 L759,796.5 L760,796.5 L761,796.5 L762,796.5 L763,796.5 L764,796.5 L765,796.5 L766,796.5 L767,796.5 L768,796.5 L769,796.5 L770,796.5 L771,796.5 L772,796.5 L773,796.5 L774,796.5 L775,796.5 L776,796.5 L777,796.5 L778,796.5 L779,796.5 L780,796.5 L781,796.5 L782,796.5 L783,796.5 L784,796.0 L785,792.9 L786,789.2 L787,784.8 L788,779.9 L789,774.4 L790,768.6 L791,762.3 L792,755.8 L793,749.2 L794,742.5 L795,735.9 L796,729.4 L797,723.2 L798,717.4 L799,712.1 L800,707.3 L801,703.0 L802,699.4 L803,696.5 L804,699.4 L805,703.0 L806,707.3 L807,712.1 L808,717.4 L809,723.2 L810,729.4 L811,735.9 L812,742.5 L813,749.2 L814,755.8 L815,762.3 L816,768.6 L817,774.4 L818,779.9 L819,784.8 L820,789.2 L821,792.9 L822,796.0 L823,796.5 L824,796.5 L825,796.5 L826,796.5 L827,796.5 L828,796.5 L829,796.5 L830,796.5 L831,796.5 L832,796.5 L833,796.5 L834,796.5 L835,796.5 L836,796.5 L837,796.5 L838,796.5 L839,796.5 L840,796.5 L841,796.5 L842,796.5 L843,796.5 L844,796.5 L845,796.5 L846,796.5 L847,796.5 L848,796.5 L849,796.5 L850,796.5 L851,796.5 L852,796.5 L853,796.5 L854,796.5 L855,796.5 L856,796.5 L857,796.5 L858,796.5 L859,796.5 L860,796.5 L861,796.5 L862,796.5 L863,796.5 L864,796.5 L865,796.5 L866,796.5 L867,796.5 L868,796.5 L869,796.5 L870,796.5 L871,796.5 L872,796.5 L873,796.5 L874,796.5 L875,796.5 L876,796.5 L877,796.5 L878,796.5 L879,796.5 L880,796.5 L881,796.5 L882,796.5 L883,796.5 L884,796.5 L885,796.5 L886,796.5 L887,796.5 L888,796.5 L889,796.5 L890,796.5 L891,796.5 L892,796.5 L893,796.5 L894,796.5 L895,796.5 L896,796.5 L897,796.5 L898,796.5 L899,796.5 L900,796.3 L901,796.1 L902,795.8 L903,795.5 L904,795.2 L905,794.8 L906,794.4 L907,794.1 L908,793.7 L909,793.3 L910,792.9 L911,792.5 L912,792.1 L913,791.8 L914,791.4 L915,791.1 L916,790.9 L917,790.7 L918,790.5 L919,790.7 L920,790.9 L921,791.1 L922,791.4 L923,791.8 L924,792.1 L925,792.5 L926,792.9 L927,793.3 L928,793.7 L929,794.1 L930,794.4 L931,794.8 L932,795.2 L933,795.5 L934,795.8 L935,796.1 L936,796.3 L937,796.5 L938,796.5 L939,796.5 L940,796.5 L941,796.5 L942,796.5 L943,796.5 L944,796.5 L945,796.5 L946,796.5 L947,796.5 L948,796.5 L949,796.5 L950,796.5 L951,796.5 L952,796.5 L953,796.5 L954,796.5 L955,796.5 L956,796.5 L957,796.5 L958,796.5 L959,796.5 L960,796.5 L961,796.5 L962,796.5 L963,796.5 L964,796.5 L965,796.5 L966,796.5 L967,796.5 L968,796.5 L969,796.5 L970,796.5 L971,796.5 L972,796.5 L973,796.5 L974,796.5 L975,796.5 L976,796.5 L977,796.5 L978,796.5 L979,796.5 L980,796.5 L981,796.5 L982,796.5 L983,796.5 L984,796.5 L985,796.5 L986,796.5 L987,796.5 L988,796.5 L989,796.5 L990,796.5 L991,796.5 L992,796.5 L993,796.5 L994,796.5 L995,796.5 L996,796.5 L997,796.5 L998,796.5 L999,796.5 L1000,796.5 L1001,796.5 L1002,796.5 L1003,796.5 L1004,796.5 L1005,796.5 L1006,796.5 L1007,796.5 L1008,796.5 L1009,796.5 L1010,796.5 L1011,796.5 L1012,796.5 L1013,796.5 L1014,796.5 L1015,796.5 L1016,796.5 L1017,796.5 L1018,796.5 L1019,796.5 L1020,796.5 L1021,796.5 L1022,796.5 L1023,796.5 L1024,796.5 L1025,796.5 L1026,796.5 L1027,796.5 L1028,796.5 L1029,796.5 L1030,796.5 L1031,796.5 L1032,796.5 L1033,796.5 L1034,796.5 L1035,796.5 L1036,796.5 L1037,796.5 L1038,796.5 L1039,796.5 L1040,796.5 L1041,796.5 L1042,796.5 L1043,796.5 L1044,796.5 L1045,796.5 L1046,796.5 L1047,796.5 L1048,796.5 L1049,796.5 L1050,796.5 L1051,796.5 L1052,796.5 L1053,796.5 L1054,796.5 L1055,796.5 L1056,796.5 L1057,796.5 L1058,796.5 L1059,796.5 L1060,796.5 L1061,796.5 L1062,796.5 L1063,796.5 L1064,796.5 L1065,796.5 L1066,796.5 L1067,796.5 L1068,796.5 L1069,796.5 L1070,796.5 L1071,796.5 L1072,796.5 L1073,796.5 L1074,796.5 L1075,796.5 L1076,796.5 L1077,796.5 L1078,796.5 L1079,796.5 L1080,796.5 L1081,796.5 L1082,796.5 L1083,796.5 L1084,796.5 L1085,796.5 L1086,796.5 L1087,796.5 L1088,796.5 L1089,796.5 L1090,796.5 L1091,796.5 L1092,796.5 L1093,796.5 L1094,796.5 L1095,796.5 L1096,796.5 L1097,796.5 L1098,794.0 L1099,790.2 L1100,785.7 L1101,780.6 L1102,774.9 L1103,768.7 L1104,762.0 L1105,755.0 L1106,747.8 L1107,740.5 L1108,733.3 L1109,726.2 L1110,719.3 L1111,712.8 L1112,706.8 L1113,701.3 L1114,696.4 L1115,692.2 L1116,688.7 L1117,689.3 L1118,693.0 L1119,697.3 L1120,702.3 L1121,707.9 L1122,714.1 L1123,720.6 L1124,727.6 L1125,734.7 L1126,742.0 L1127,749.3 L1128,756.4 L1129,763.4 L1130,769.9 L1131,776.1 L1132,781.7 L1133,786.7 L1134,791.0 L1135,794.7 L1136,796.5 L1137,796.5 L1138,796.5 L1139,796.5 L1140,796.5 L1141,796.5 L1142,796.5 L1143,796.5 L1144,796.5 L1145,796.5 L1146,796.5 L1147,796.5 L1148,796.5 L1149,796.5 L1150,796.5 L1151,796.5 L1152,796.5 L1153,796.5 L1154,796.5 L1155,796.5 L1156,796.5 L1157,796.5 L1158,796.5 L1159,796.5 L1160,796.5 L1161,796.5 L1162,796.5 L1163,796.5 L1164,796.5 L1165,796.5 L1166,796.5 L1167,796.5 L1168,796.5 L1169,796.5 L1170,796.5 L1171,796.1 L1172,795.3 L1173,794.4 L1174,793.4 L1175,792.2 L1176,790.9 L1177,789.5 L1178,788.0 L1179,786.5 L1180,785.0 L1181,783.5 L1182,782.0 L1183,780.5 L1184,779.1 L1185,777.8 L1186,776.6 L1187,775.6 L1188,774.7 L1189,773.9 L1190,773.8 L1191,774.5 L1192,775.4 L1193,776.4 L1194,777.6 L1195,778.8 L1196,780.2 L1197,781.7 L1198,783.2 L1199,784.7 L1200,786.2 L1201,787.7 L1202,789.2 L1203,790.6 L1204,791.9 L1205,793.1 L1206,794.2 L1207,795.2 L1208,796.0 L1209,796.5 L1210,796.5 L1211,796.5 L1212,796.5 L1213,796.5 L1214,796.5 L1215,796.5 L1216,796.5 L1217,796.5 L1218,796.5 L1219,796.5 L1220,796.5 L1221,796.5 L1222,796.5 L1223,796.5 L1224,796.5 L1225,796.5 L1226,796.5 L1227,796.5 L1228,796.5 L1229,796.5 L1230,796.5 L1231,796.5 L1232,796.5 L1233,796.5 L1234,796.5 L1235,796.5 L1236,796.5 L1237,796.5 L1238,796.5 L1239,796.5 L1240,796.5 L1241,796.5 L1242,796.5 L1243,796.5 L1244,796.5 L1245,796.5 L1246,796.5 L1247,796.5 L1248,796.5 L1249,796.5 L1250,796.5 L1251,796.5 L1252,796.5 L1253,796.5 L1254,796.5 L1255,796.5 L1256,796.5 L1257,796.5 L1258,796.5 L1259,796.5 L1260,796.5 L1261,796.5 L1262,796.5 L1263,796.5 L1264,796.5 L1265,796.5 L1266,796.5 L1267,796.5 L1268,796.5 L1269,796.5 L1270,796.5 L1271,796.5 L1272,796.5 L1273,796.5 L1274,796.5 L1275,796.5 L1276,796.5 L1277,796.5 L1278,796.5 L1279,796.5 L1280,796.5 L1281,796.5 L1282,796.5 L1283,796.5 L1284,796.5 L1285,796.5 L1286,796.5 L1287,796.5 L1288,796.5 L1289,796.5 L1290,796.5 L1291,796.5 L1292,796.5 L1293,796.5 L1294,796.5 L1295,796.5 L1296,796.5 L1297,796.5 L1298,796.5 L1299,796.5 L1300,796.5 L1301,796.5 L1302,796.5 L1303,796.5 L1304,796.5 L1305,796.5 L1306,796.5 L1307,796.5 L1308,796.5 L1309,796.5 L1310,796.5 L1311,796.5 L1312,796.5 L1313,796.1 L1314,793.6 L1315,790.6 L1316,787.0 L1317,783.0 L1318,778.6 L1319,773.9 L1320,768.8 L1321,763.6 L1322,758.2 L1323,752.7 L1324,747.4 L1325,742.2 L1326,737.2 L1327,732.5 L1328,728.1 L1329,724.2 L1330,720.8 L1331,717.9 L1332,715.5 L1333,717.9 L1334,720.8 L1335,724.2 L1336,728.1 L1337,732.5 L1338,737.2 L1339,742.2 L1340,747.4 L1341,752.7 L1342,758.2 L1343,763.6 L1344,768.8 L1345,773.9 L1346,778.6 L1347,783.0 L1348,787.0 L1349,790.6 L1350,793.6 L1351,796.1 L1352,796.5 L1353,796.5 L1354,796.5 L1355,796.5 L1356,796.5 L1357,796.5 L1358,796.5 L1359,796.5 L1360,796.5 L1361,796.5 L1362,796.5 L1363,796.5 L1364,796.5 L1365,796.5 L1366,796.5 L1367,796.5 L1368,796.5 L1369,796.5 L1370,796.5 L1371,796.5 L1372,796.5 L1373,796.5 L1374,796.0 L1375,792.8 L1376,788.9 L1377,784.4 L1378,779.2 L1379,773.4 L1380,767.3 L1381,760.8 L1382,754.1 L1383,747.3 L1384,740.6 L1385,734.0 L1386,727.8 L1387,721.9 L1388,716.6 L1389,711.9 L1390,707.9 L1391,704.6 L1392,705.2 L1393,708.7 L1394,712.8 L1395,717.6 L1396,723.1 L1397,729.0 L1398,735.3 L1399,741.9 L1400,748.6 L1401,755.4 L1402,762.1 L1403,768.5 L1404,774.6 L1405,780.3 L1406,785.3 L1407,787.2 L1408,787.1 L1409,785.5 L1410,780.2 L1411,774.2 L1412,767.8 L1413,760.9 L1414,753.8 L1415,746.5 L1416,739.2 L1417,732.1 L1418,725.2 L1419,718.8 L1420,712.8 L1421,707.5 L1422,702.9 L1423,699.0 L1424,697.1 L1425,700.5 L1426,704.7 L1427,709.6 L1428,715.1 L1429,721.3 L1430,727.9 L1431,734.9 L1432,742.1 L1433,749.4 L1434,756.7 L1435,763.7 L1436,770.4 L1437,776.7 L1438,782.4 L1439,787.4 L1440,790.3 L1441,789.4 L1442,785.2 L1443,779.0 L1444,771.9 L1445,764.2 L1446,755.8 L1447,747.1 L1448,738.1 L1449,729.1 L1450,720.1 L1451,711.5 L1452,703.2 L1453,695.6 L1454,688.7 L1455,682.6 L1456,677.4 L1457,673.2 L1458,675.6 L1459,680.4 L1460,686.2 L1461,692.7 L1462,700.1 L1463,708.1 L1464,716.6 L1465,725.5 L1466,734.5 L1467,743.5 L1468,752.4 L1469,760.9 L1470,768.9 L1471,776.3 L1472,782.8 L1473,788.6 L1474,793.4 L1475,796.5 L1476,796.5 L1477,796.5 L1478,796.5 L1479,796.5 L1480,796.5 L1481,796.5 L1482,796.5 L1483,796.5 L1484,796.5 L1485,796.5 L1486,796.5 L1487,796.5 L1488,796.5 L1489,796.5 L1490,796.5 L1491,796.5 L1492,796.5 L1493,796.5 L1494,796.5 L1495,796.5 L1496,796.5 L1497,796.5 L1498,796.5 L1499,796.5 L1500,796.5 L1501,796.5 L1502,796.5 L1503,796.5 L1504,796.5 L1505,796.5 L1506,796.5 L1507,796.5 L1508,796.5 L1509,796.5 L1510,795.5 L1511,791.5 L1512,786.6 L1513,780.9 L1514,774.4 L1515,767.3 L1516,759.6 L1517,751.5 L1518,743.2 L1519,734.8 L1520,726.5 L1521,718.4 L1522,710.7 L1523,703.6 L1524,697.1 L1525,691.4 L1526,686.5 L1527,682.5 L1528,684.0 L1529,688.4 L1530,693.6 L1531,699.6 L1532,706.4 L1533,713.8 L1534,721.6 L1535,729.8 L1536,738.2 L1537,746.5 L1538,754.8 L1539,762.7 L1540,770.2 L1541,777.1 L1542,783.3 L1543,788.7 L1544,793.2 L1545,794.5 L1546,790.5 L1547,785.7 L1548,780.1 L1549,773.8 L1550,766.9 L1551,759.6 L1552,751.9 L1553,744.1 L1554,736.2 L1555,728.5 L1556,721.0 L1557,713.9 L1558,707.4 L1559,701.5 L1560,696.3 L1561,692.0 L1562,688.5 L1563,692.0 L1564,696.3 L1565,701.5 L1566,707.4 L1567,713.9 L1568,721.0 L1569,728.5 L1570,736.2 L1571,744.1 L1572,751.9 L1573,759.6 L1574,766.9 L1575,773.8 L1576,780.1 L1577,785.7 L1578,790.5 L1579,794.5 L1580,796.5 L1581,796.5 L1582,796.5 L1583,796.5 L1584,796.5 L1585,796.5 L1586,796.5 L1587,796.5 L1588,796.5 L1589,796.5 L1590,796.5 L1591,796.5 L1592,796.5 L1593,796.5 L1594,796.5" fill="none" stroke="#000000" stroke-width="2" stroke-linejoin="round" shape-rendering="crispEdges"/><path d="M477,796.5 L478,796.5 L479,796.5 L480,796.5 L481,796.5 L482,796.3 L483,796.1 L484,795.9 L485,795.7 L486,795.4 L487,795.1 L488,794.8 L489,794.5 L490,794.1 L491,793.8 L492,793.5 L493,793.1 L494,792.8 L495,792.5 L496,792.3 L497,792.0 L498,791.8 L499,791.6 L500,791.5 L501,791.6 L502,791.8 L503,792.0 L504,792.3 L505,792.5 L506,792.8 L507,793.1 L508,793.5 L509,793.8 L510,794.1 L511,794.5 L512,794.8 L513,795.1 L514,795.4 L515,795.7 L516,795.9 L517,796.1 L518,796.3 L519,796.5 L520,796.5 L521,796.5 L522,796.5 L523,796.5 L524,796.5 L525,796.5 L526,796.5 L527,796.5 L528,796.5 L529,796.5 L530,796.5 L531,796.5 L532,796.5 L533,796.5 L534,796.5 L535,796.5 L536,796.5 L537,796.5 L538,796.5 L539,796.5 L540,796.5 L541,796.5 L542,796.5 L543,796.5 L544,796.5 L545,796.5 L546,796.5 L547,796.5 L548,796.5 L549,796.5 L550,796.5 L551,796.5 L552,796.5 L553,796.4 L554,796.1 L555,795.8 L556,795.3 L557,794.8 L558,794.3 L559,793.7 L560,793.1 L561,792.4 L562,791.8 L563,791.1 L564,790.4 L565,789.8 L566,789.2 L567,788.6 L568,788.1 L569,787.6 L570,787.2 L571,786.8 L572,786.5 L573,786.8 L574,787.2 L575,787.6 L576,788.1 L577,788.6 L578,789.2 L579,789.8 L580,790.4 L581,791.1 L582,791.8 L583,792.4 L584,793.1 L585,793.7 L586,794.3 L587,794.8 L588,795.3 L589,795.8 L590,796.1 L591,796.4 L592,796.5 L593,796.5 L594,796.5 L595,796.5 L596,796.5 L597,796.5 L598,796.5 L599,796.5 L600,796.5 L601,796.5 L602,796.5 L603,796.5 L604,796.5 L605,796.5 L606,796.5 L607,796.5 L608,796.5 L609,796.5 L610,796.5 L611,796.5 L612,796.5 L613,796.5 L614,796.5 L615,796.5 L616,796.5 L617,796.5 L618,796.5 L619,796.5 L620,796.5 L621,796.5 L622,796.5 L623,796.5 L624,796.5 L625,796.5 L626,796.5 L627,796.5 L628,796.5 L629,796.5 L630,796.5 L631,796.5 L632,796.5 L633,796.5 L634,796.5 L635,796.5 L636,796.5 L637,796.5 L638,796.5 L639,796.5 L640,796.5 L641,796.5 L642,796.5 L643,796.5 L644,796.5 L645,796.5 L646,796.5 L647,796.5 L648,796.5 L649,796.5 L650,796.5 L651,796.5 L652,796.5 L653,796.5 L654,796.5 L655,796.5 L656,796.5 L657,796.5 L658,796.5 L659,796.5 L660,796.5 L661,796.5 L662,796.5 L663,796.5 L664,796.5 L665,796.5 L666,796.5 L667,796.5 L668,796.5 L669,796.5 L670,796.5 L671,796.5 L672,796.5 L673,796.5 L674,796.5 L675,796.5 L676,796.5 L677,796.5 L678,796.5 L679,796.0 L680,789.8 L681,782.2 L682,773.2 L683,762.9 L684,751.6 L685,739.3 L686,726.4 L687,713.0 L688,699.4 L689,685.9 L690,672.8 L691,660.2 L692,648.5 L693,637.8 L694,628.3 L695,620.1 L696,613.3 L697,613.3 L698,620.1 L699,628.3 L700,637.8 L701,648.5 L702,660.2 L703,672.8 L704,685.9 L705,699.4 L706,713.0 L707,726.4 L708,739.3 L709,751.6 L710,762.9 L711,773.2 L712,782.2 L713,789.8 L714,796.0 L715,796.5 L716,796.5 L717,796.5 L718,796.5 L719,796.5 L720,796.5 L721,796.5 L722,796.5 L723,796.5 L724,796.5 L725,796.5 L726,796.5 L727,796.5 L728,796.5 L729,796.5 L730,796.5 L731,796.5 L732,796.5 L733,796.5 L734,796.5 L735,796.5 L736,796.5 L737,796.5 L738,796.5 L739,796.5 L740,796.5 L741,796.5 L742,796.5 L743,796.5 L744,796.5 L745,796.5 L746,796.5 L747,796.5 L748,796.5 L749,796.5 L750,796.5 L751,796.5 L752,796.5 L753,796.5 L754,796.5 L755,796.5 L756,796.5 L757,796.5 L758,796.5 L759,796.5 L760,796.5 L761,796.5 L762,796.5 L763,796.5 L764,796.5 L765,796.5 L766,796.5 L767,796.5 L768,796.5 L769,796.5 L770,796.5 L771,796.5 L772,796.5 L773,796.5 L774,796.5 L775,796.5 L776,796.5 L777,796.5 L778,796.5 L779,796.5 L780,796.5 L781,796.5 L782,796.5 L783,796.5 L784,796.5 L785,796.5 L786,796.5 L787,796.5 L788,796.5 L789,796.4 L790,796.2 L791,796.0 L792,795.7 L793,795.5 L794,795.2 L795,794.8 L796,794.5 L797,794.1 L798,793.8 L799,793.4 L800,793.0 L801,792.6 L802,792.2 L803,791.8 L804,791.4 L805,791.0 L806,790.6 L807,790.3 L808,790.0 L809,789.6 L810,789.4 L811,789.1 L812,788.9 L813,788.7 L814,788.5 L815,788.7 L816,788.9 L817,789.1 L818,789.4 L819,789.6 L820,790.0 L821,790.3 L822,790.6 L823,791.0 L824,791.4 L825,791.8 L826,792.2 L827,792.6 L828,793.0 L829,793.4 L830,793.8 L831,794.1 L832,794.5 L833,794.8 L834,795.2 L835,795.5 L836,795.7 L837,796.0 L838,796.2 L839,796.4 L840,796.5 L841,796.5 L842,796.5 L843,796.5 L844,796.5 L845,796.5 L846,796.5 L847,796.5 L848,796.5 L849,796.5 L850,796.5 L851,796.5 L852,796.5 L853,796.5 L854,796.5 L855,796.5 L856,796.5 L857,795.2 L858,793.6 L859,791.7 L860,789.6 L861,787.1 L862,784.5 L863,781.8 L864,779.0 L865,776.2 L866,773.5 L867,770.9 L868,768.4 L869,766.3 L870,764.4 L871,762.8 L872,761.5 L873,762.8 L874,764.4 L875,766.3 L876,768.4 L877,770.9 L878,773.5 L879,776.2 L880,779.0 L881,781.8 L882,784.5 L883,787.1 L884,789.6 L885,791.7 L886,793.6 L887,795.2 L888,796.5 L889,796.5 L890,796.5 L891,796.5 L892,796.5 L893,796.5 L894,796.5 L895,796.5 L896,796.5 L897,796.5 L898,796.5 L899,796.5 L900,796.5 L901,796.5 L902,796.5 L903,796.5 L904,796.5 L905,796.5 L906,796.5 L907,796.5 L908,796.5 L909,796.5 L910,796.5 L911,796.5 L912,796.5 L913,796.5 L914,796.5 L915,796.5 L916,796.5 L917,796.5 L918,796.5 L919,796.5 L920,796.5 L921,796.5 L922,796.5 L923,796.5 L924,796.5 L925,796.5 L926,796.5 L927,796.5 L928,796.5 L929,796.5 L930,796.5 L931,796.5 L932,796.5 L933,796.5 L934,796.5 L935,796.5 L936,796.5 L937,796.5 L938,796.5 L939,796.5 L940,796.5 L941,796.5 L942,796.5 L943,796.5 L944,796.5 L945,796.5 L946,796.5 L947,796.5 L948,796.5 L949,796.5 L950,796.5 L951,796.5 L952,796.5 L953,796.5 L954,796.5 L955,796.5 L956,796.5 L957,796.5 L958,796.5 L959,796.5 L960,796.5 L961,796.5 L962,796.5 L963,796.2 L964,795.8 L965,795.3 L966,794.7 L967,794.1 L968,793.4 L969,792.6 L970,791.9 L971,791.1 L972,790.3 L973,789.5 L974,788.7 L975,787.9 L976,787.2 L977,786.6 L978,786.0 L979,785.4 L980,785.0 L981,784.6 L982,784.7 L983,785.1 L984,785.6 L985,786.2 L986,786.8 L987,787.5 L988,788.2 L989,789.0 L990,789.8 L991,790.6 L992,791.4 L993,792.2 L994,792.9 L995,793.6 L996,794.3 L997,794.9 L998,795.5 L999,795.9 L1000,796.3 L1001,796.5 L1002,796.5 L1003,796.5 L1004,796.5 L1005,796.5 L1006,796.5 L1007,796.5 L1008,796.5 L1009,796.5 L1010,796.4 L1011,796.3 L1012,796.2 L1013,796.0 L1014,795.9 L1015,795.7 L1016,795.5 L1017,795.3 L1018,795.0 L1019,794.8 L1020,794.5 L1021,794.3 L1022,794.1 L1023,793.8 L1024,793.6 L1025,793.3 L1026,793.1 L1027,792.8 L1028,792.6 L1029,792.4 L1030,792.2 L1031,792.0 L1032,791.9 L1033,791.7 L1034,791.6 L1035,791.5 L1036,791.6 L1037,791.7 L1038,791.9 L1039,792.0 L1040,792.2 L1041,792.4 L1042,792.6 L1043,792.8 L1044,793.1 L1045,793.3 L1046,793.6 L1047,793.8 L1048,794.1 L1049,794.3 L1050,794.5 L1051,794.8 L1052,795.0 L1053,795.3 L1054,795.5 L1055,795.7 L1056,795.9 L1057,796.0 L1058,796.2 L1059,796.3 L1060,796.4 L1061,796.5 L1062,796.5 L1063,796.5 L1064,796.5 L1065,796.5 L1066,796.5 L1067,796.5 L1068,796.5 L1069,796.5 L1070,796.5 L1071,796.5 L1072,796.5 L1073,796.5 L1074,796.5 L1075,796.5 L1076,796.5 L1077,796.5 L1078,796.5 L1079,796.5 L1080,796.5 L1081,796.5 L1082,796.5 L1083,796.5 L1084,796.5 L1085,796.5 L1086,796.5 L1087,796.5 L1088,796.5 L1089,796.5 L1090,796.5 L1091,796.5 L1092,796.5 L1093,796.5 L1094,796.5 L1095,796.5 L1096,796.5 L1097,796.5 L1098,796.5 L1099,796.5 L1100,796.5 L1101,796.5 L1102,796.5 L1103,796.5 L1104,796.5 L1105,796.5 L1106,796.5 L1107,796.5 L1108,796.5 L1109,796.5 L1110,796.5 L1111,796.5 L1112,796.5 L1113,796.5 L1114,796.5 L1115,796.5 L1116,796.5 L1117,796.5 L1118,796.5 L1119,796.5 L1120,796.5 L1121,796.5 L1122,796.5 L1123,796.5 L1124,796.5 L1125,796.5 L1126,796.5 L1127,796.5 L1128,796.5 L1129,796.5 L1130,796.5 L1131,796.5 L1132,796.5 L1133,796.5 L1134,796.5 L1135,796.5 L1136,796.5 L1137,796.5 L1138,796.5 L1139,796.5 L1140,796.5 L1141,796.5 L1142,796.5 L1143,796.5 L1144,796.5 L1145,796.5 L1146,796.5 L1147,796.5 L1148,796.5 L1149,796.5 L1150,796.5 L1151,796.5 L1152,796.5 L1153,796.5 L1154,796.5 L1155,796.5 L1156,796.5 L1157,796.5 L1158,796.5 L1159,796.5 L1160,796.5 L1161,796.5 L1162,796.5 L1163,796.5 L1164,796.5 L1165,796.5 L1166,796.5 L1167,796.5 L1168,796.5 L1169,796.5 L1170,796.5 L1171,796.5 L1172,796.5 L1173,796.5 L1174,796.5 L1175,796.5 L1176,796.5 L1177,796.5 L1178,796.5 L1179,796.5 L1180,796.5 L1181,796.5 L1182,796.5 L1183,796.5 L1184,796.5 L1185,796.5 L1186,796.5 L1187,796.5 L1188,796.5 L1189,796.5 L1190,796.5 L1191,796.5 L1192,796.5 L1193,796.5 L1194,796.5 L1195,796.5 L1196,796.5 L1197,796.5 L1198,796.5 L1199,796.5 L1200,796.5 L1201,796.5 L1202,796.5 L1203,796.5 L1204,796.5 L1205,796.5 L1206,796.5 L1207,796.5 L1208,796.5 L1209,796.5 L1210,796.5 L1211,796.5 L1212,796.5 L1213,796.5 L1214,796.5 L1215,796.5 L1216,796.5 L1217,796.5 L1218,796.5 L1219,796.5 L1220,796.5 L1221,796.5 L1222,796.5 L1223,796.5 L1224,796.5 L1225,796.5 L1226,796.2 L1227,795.9 L1228,795.6 L1229,795.2 L1230,794.7 L1231,794.3 L1232,793.8 L1233,793.2 L1234,792.7 L1235,792.2 L1236,791.6 L1237,791.1 L1238,790.6 L1239,790.2 L1240,789.7 L1241,789.4 L1242,789.0 L1243,788.7 L1244,788.5 L1245,788.7 L1246,789.0 L1247,789.4 L1248,789.7 L1249,790.2 L1250,790.6 L1251,791.1 L1252,791.6 L1253,792.2 L1254,792.7 L1255,793.2 L1256,793.8 L1257,794.3 L1258,794.7 L1259,795.2 L1260,795.6 L1261,795.9 L1262,796.2 L1263,796.5 L1264,796.5 L1265,796.5 L1266,796.5 L1267,796.5 L1268,796.5 L1269,796.5 L1270,796.5 L1271,796.5 L1272,796.5 L1273,796.5 L1274,796.5 L1275,796.5 L1276,796.5 L1277,796.5 L1278,796.5 L1279,796.5 L1280,796.5 L1281,796.5 L1282,796.5 L1283,796.5 L1284,796.5 L1285,796.5 L1286,796.5 L1287,796.5 L1288,796.5 L1289,796.5 L1290,796.5 L1291,796.5 L1292,796.5 L1293,796.5 L1294,796.5 L1295,796.5 L1296,796.5 L1297,796.5 L1298,796.5 L1299,796.5 L1300,796.5 L1301,796.5 L1302,796.5 L1303,796.5 L1304,796.5 L1305,796.5 L1306,796.5 L1307,796.5 L1308,796.5 L1309,796.5 L1310,796.5 L1311,796.5 L1312,796.5 L1313,796.5 L1314,796.5 L1315,796.5 L1316,796.5 L1317,796.5 L1318,796.5 L1319,796.5 L1320,796.5 L1321,796.5 L1322,796.5 L1323,796.5 L1324,796.5 L1325,796.5 L1326,796.5 L1327,796.5 L1328,796.5 L1329,796.5 L1330,796.5 L1331,796.5 L1332,796.5 L1333,796.5 L1334,796.5 L1335,796.5 L1336,796.5 L1337,796.5 L1338,796.5 L1339,796.5 L1340,796.5 L1341,796.5 L1342,796.5 L1343,796.5 L1344,796.5 L1345,796.5 L1346,796.5 L1347,794.9 L1348,791.8 L1349,788.1 L1350,783.7 L1351,778.8 L1352,773.5 L1353,767.8 L1354,761.8 L1355,755.7 L1356,749.6 L1357,743.6 L1358,737.8 L1359,732.3 L1360,727.2 L1361,722.6 L1362,718.6 L1363,715.2 L1364,712.5 L1365,715.2 L1366,718.6 L1367,722.6 L1368,727.2 L1369,732.3 L1370,737.8 L1371,743.6 L1372,749.6 L1373,755.7 L1374,761.8 L1375,767.8 L1376,773.5 L1377,778.8 L1378,783.7 L1379,788.1 L1380,791.8 L1381,794.9 L1382,796.5 L1383,796.5 L1384,796.5 L1385,796.5 L1386,796.5 L1387,796.5 L1388,796.5 L1389,796.5 L1390,796.5 L1391,796.5 L1392,796.5 L1393,796.5 L1394,796.5 L1395,796.5 L1396,796.5 L1397,796.5 L1398,796.5 L1399,796.5 L1400,796.5 L1401,796.5 L1402,796.5 L1403,796.5 L1404,796.5 L1405,796.5 L1406,796.5 L1407,796.5 L1408,796.5 L1409,796.5 L1410,796.5 L1411,796.5 L1412,796.5 L1413,796.5 L1414,796.5 L1415,796.5 L1416,796.5 L1417,796.5 L1418,796.5 L1419,796.5 L1420,796.5 L1421,796.5 L1422,796.5 L1423,796.5 L1424,796.5 L1425,796.5 L1426,796.5 L1427,796.5 L1428,796.5 L1429,796.5 L1430,796.5 L1431,796.5 L1432,796.5 L1433,796.5 L1434,796.5 L1435,796.5 L1436,796.5 L1437,796.5 L1438,796.5 L1439,796.5 L1440,796.5 L1441,796.5 L1442,796.5 L1443,796.5 L1444,796.5 L1445,796.5 L1446,796.5 L1447,796.5 L1448,796.5 L1449,796.5 L1450,796.5 L1451,796.5 L1452,796.5 L1453,796.5 L1454,796.5 L1455,796.5 L1456,796.5 L1457,796.5 L1458,796.5 L1459,796.5 L1460,796.5 L1461,796.5 L1462,796.5 L1463,796.5 L1464,796.5 L1465,796.5 L1466,796.5 L1467,796.5 L1468,796.5 L1469,796.5 L1470,796.5 L1471,796.5 L1472,796.5 L1473,796.5 L1474,796.5 L1475,796.5 L1476,796.5 L1477,796.5 L1478,796.5 L1479,796.5 L1480,796.5 L1481,796.5 L1482,796.5 L1483,796.5 L1484,796.5 L1485,796.5 L1486,796.5 L1487,796.5 L1488,796.5 L1489,796.5 L1490,796.5 L1491,796.5 L1492,796.5 L1493,796.5 L1494,796.5 L1495,796.5 L1496,796.5 L1497,796.5 L1498,796.5 L1499,796.5 L1500,796.5 L1501,796.5 L1502,796.5 L1503,796.5 L1504,796.5 L1505,796.5 L1506,796.5 L1507,796.5 L1508,796.5 L1509,796.5 L1510,796.5 L1511,796.5 L1512,796.5 L1513,796.5 L1514,796.5 L1515,796.5 L1516,796.5 L1517,796.5 L1518,796.5 L1519,796.5 L1520,796.5 L1521,796.5 L1522,796.5 L1523,796.5 L1524,796.5 L1525,796.5 L1526,796.5 L1527,796.5 L1528,796.5 L1529,796.5 L1530,796.5 L1531,796.5 L1532,796.5 L1533,796.5 L1534,796.5 L1535,796.5 L1536,796.5 L1537,796.5 L1538,796.5 L1539,796.5 L1540,796.5 L1541,796.5 L1542,796.5 L1543,796.5 L1544,796.5 L1545,796.5 L1546,796.5 L1547,796.5 L1548,796.5 L1549,796.5 L1550,796.5 L1551,796.5 L1552,796.5 L1553,796.5 L1554,796.5 L1555,796.5 L1556,796.5 L1557,796.5 L1558,796.5 L1559,796.5 L1560,796.5 L1561,796.5 L1562,796.5 L1563,796.5 L1564,796.5 L1565,796.5 L1566,796.5 L1567,796.5 L1568,796.5 L1569,796.5 L1570,796.5 L1571,796.5 L1572,796.5 L1573,796.5 L1574,796.5 L1575,796.5 L1576,796.5 L1577,796.5 L1578,796.5 L1579,796.5 L1580,796.5 L1581,796.5 L1582,796.5 L1583,796.5 L1584,796.5 L1585,796.5 L1586,796.5 L1587,796.5 L1588,796.5 L1589,796.5 L1590,796.5 L1591,796.5 L1592,796.5 L1593,796.5 L1594,796.5" fill="none" stroke="#FF0000" stroke-width="2" stroke-linejoin="round" shape-rendering="crispEdges"/><path d="M477,796.5 L478,796.5 L479,796.5 L480,796.5 L481,796.5 L482,796.5 L483,796.5 L484,796.5 L485,796.5 L486,796.5 L487,796.5 L488,796.5 L489,796.5 L490,796.5 L491,796.5 L492,796.5 L493,796.5 L494,796.5 L495,796.5 L496,796.5 L497,796.5 L498,796.5 L499,796.5 L500,796.5 L501,796.5 L502,796.5 L503,796.5 L504,796.5 L505,796.5 L506,796.5 L507,796.5 L508,796.5 L509,796.5 L510,796.5 L511,796.5 L512,796.5 L513,796.5 L514,796.5 L515,796.5 L516,796.5 L517,796.5 L518,796.5 L519,796.2 L520,795.9 L521,795.6 L522,795.2 L523,794.7 L524,794.3 L525,793.8 L526,793.2 L527,792.7 L528,792.2 L529,791.6 L530,791.1 L531,790.6 L532,790.2 L533,789.7 L534,789.4 L535,789.0 L536,788.7 L537,788.5 L538,788.7 L539,789.0 L540,789.4 L541,789.7 L542,790.2 L543,790.6 L544,791.1 L545,791.6 L546,792.2 L547,792.7 L548,793.2 L549,793.8 L550,794.3 L551,794.7 L552,795.2 L553,795.6 L554,795.9 L555,796.2 L556,796.5 L557,796.5 L558,796.5 L559,796.5 L560,796.5 L561,796.5 L562,796.5 L563,796.5 L564,796.5 L565,796.5 L566,796.5 L567,796.5 L568,796.5 L569,796.5 L570,796.5 L571,796.5 L572,796.5 L573,796.5 L574,796.5 L575,795.4 L576,792.2 L577,788.3 L578,783.8 L579,778.7 L580,773.0 L581,767.0 L582,760.6 L583,754.1 L584,747.6 L585,741.1 L586,734.8 L587,728.8 L588,723.3 L589,718.3 L590,713.8 L591,710.1 L592,707.0 L593,708.8 L594,712.3 L595,716.4 L596,721.2 L597,726.5 L598,732.3 L599,738.5 L600,744.9 L601,751.5 L602,758.1 L603,764.5 L604,770.7 L605,776.5 L606,781.8 L607,786.6 L608,790.7 L609,794.2 L610,796.5 L611,796.5 L612,796.5 L613,796.5 L614,796.5 L615,796.5 L616,796.5 L617,796.5 L618,796.5 L619,796.5 L620,796.5 L621,796.5 L622,796.5 L623,796.5 L624,796.5 L625,796.5 L626,796.5 L627,796.5 L628,796.5 L629,796.5 L630,796.5 L631,796.5 L632,796.5 L633,796.5 L634,796.5 L635,796.5 L636,796.5 L637,796.5 L638,796.5 L639,796.5 L640,796.5 L641,796.5 L642,796.5 L643,796.5 L644,796.5 L645,796.5 L646,796.5 L647,796.5 L648,796.5 L649,796.5 L650,796.5 L651,796.5 L652,796.5 L653,796.5 L654,796.5 L655,796.5 L656,796.5 L657,796.5 L658,796.5 L659,796.5 L660,796.5 L661,796.5 L662,796.5 L663,796.5 L664,796.5 L665,796.5 L666,796.5 L667,796.5 L668,796.5 L669,796.5 L670,796.5 L671,796.5 L672,796.5 L673,796.5 L674,796.5 L675,796.5 L676,796.5 L677,796.5 L678,796.5 L679,796.5 L680,796.5 L681,796.5 L682,796.5 L683,796.5 L684,796.5 L685,796.5 L686,796.5 L687,796.5 L688,796.5 L689,796.5 L690,796.5 L691,796.5 L692,796.5 L693,796.5 L694,796.5 L695,796.5 L696,796.5 L697,796.5 L698,796.5 L699,796.5 L700,796.5 L701,796.5 L702,796.5 L703,796.5 L704,796.5 L705,796.5 L706,796.5 L707,796.5 L708,796.5 L709,796.5 L710,796.5 L711,796.5 L712,796.5 L713,796.5 L714,796.5 L715,796.5 L716,796.5 L717,796.5 L718,796.5 L719,796.5 L720,796.5 L721,796.5 L722,796.5 L723,796.5 L724,796.5 L725,796.5 L726,796.5 L727,796.5 L728,796.5 L729,796.5 L730,796.5 L731,796.5 L732,796.5 L733,796.5 L734,796.5 L735,796.5 L736,796.5 L737,796.5 L738,796.5 L739,796.5 L740,796.5 L741,796.5 L742,796.5 L743,796.5 L744,796.5 L745,796.5 L746,796.5 L747,796.5 L748,796.5 L749,796.1 L750,793.5 L751,790.4 L752,786.8 L753,782.7 L754,778.2 L755,773.3 L756,768.1 L757,762.7 L758,757.2 L759,751.7 L760,746.2 L761,740.8 L762,735.7 L763,730.9 L764,726.4 L765,722.4 L766,718.9 L767,715.9 L768,713.5 L769,715.9 L770,718.9 L771,722.4 L772,726.4 L773,730.9 L774,735.7 L775,740.8 L776,746.2 L777,751.7 L778,757.2 L779,762.7 L780,768.1 L781,773.3 L782,778.2 L783,782.7 L784,786.8 L785,790.4 L786,793.5 L787,796.1 L788,796.5 L789,796.5 L790,796.5 L791,796.5 L792,796.5 L793,796.5 L794,796.5 L795,796.5 L796,796.5 L797,796.5 L798,796.5 L799,796.5 L800,796.5 L801,796.5 L802,796.5 L803,796.5 L804,796.5 L805,796.5 L806,796.5 L807,796.5 L808,796.5 L809,796.5 L810,796.5 L811,796.5 L812,796.5 L813,796.5 L814,796.5 L815,796.5 L816,796.5 L817,796.0 L818,793.0 L819,789.3 L820,785.1 L821,780.2 L822,774.9 L823,769.1 L824,763.0 L825,756.6 L826,750.1 L827,743.6 L828,737.1 L829,730.8 L830,724.7 L831,719.0 L832,713.8 L833,709.0 L834,704.9 L835,701.4 L836,698.5 L837,701.4 L838,704.9 L839,709.0 L840,713.8 L841,719.0 L842,724.7 L843,730.8 L844,737.1 L845,743.6 L846,750.1 L847,756.6 L848,763.0 L849,769.1 L850,774.9 L851,780.2 L852,785.1 L853,789.3 L854,793.0 L855,796.0 L856,796.5 L857,796.5 L858,796.5 L859,796.5 L860,796.5 L861,796.5 L862,796.5 L863,796.5 L864,796.5 L865,796.5 L866,796.5 L867,796.5 L868,796.5 L869,796.5 L870,796.5 L871,796.5 L872,796.5 L873,796.5 L874,796.5 L875,796.5 L876,796.5 L877,796.5 L878,796.5 L879,796.5 L880,796.5 L881,796.5 L882,796.5 L883,796.5 L884,796.5 L885,796.5 L886,796.5 L887,796.5 L888,796.5 L889,796.5 L890,796.5 L891,796.5 L892,796.5 L893,796.5 L894,796.5 L895,796.5 L896,796.5 L897,796.5 L898,796.5 L899,796.5 L900,796.5 L901,796.5 L902,796.5 L903,796.5 L904,796.5 L905,796.5 L906,796.5 L907,796.5 L908,796.5 L909,796.5 L910,796.5 L911,796.5 L912,796.5 L913,796.5 L914,796.5 L915,796.5 L916,796.5 L917,796.5 L918,796.5 L919,796.5 L920,796.0 L921,792.9 L922,789.2 L923,784.8 L924,779.9 L925,774.4 L926,768.6 L927,762.3 L928,755.8 L929,749.2 L930,742.5 L931,735.9 L932,729.4 L933,723.2 L934,717.4 L935,712.1 L936,707.3 L937,703.0 L938,699.4 L939,696.5 L940,699.4 L941,703.0 L942,707.3 L943,712.1 L944,717.4 L945,723.2 L946,729.4 L947,735.9 L948,742.5 L949,749.2 L950,755.8 L951,762.3 L952,768.6 L953,774.4 L954,779.9 L955,784.8 L956,789.2 L957,792.9 L958,796.0 L959,796.5 L960,796.5 L961,796.5 L962,796.5 L963,796.5 L964,796.5 L965,796.5 L966,796.5 L967,796.5 L968,796.5 L969,796.5 L970,796.5 L971,796.5 L972,796.5 L973,796.5 L974,796.5 L975,796.5 L976,796.5 L977,796.5 L978,796.5 L979,796.5 L980,796.5 L981,796.5 L982,796.5 L983,796.5 L984,796.5 L985,796.5 L986,796.5 L987,796.5 L988,796.5 L989,796.5 L990,796.5 L991,796.5 L992,796.5 L993,796.5 L994,796.5 L995,796.5 L996,796.5 L997,796.5 L998,796.5 L999,796.5 L1000,796.5 L1001,796.5 L1002,796.5 L1003,796.5 L1004,796.5 L1005,796.5 L1006,796.5 L1007,796.5 L1008,796.5 L1009,796.5 L1010,796.5 L1011,796.5 L1012,796.5 L1013,796.5 L1014,796.5 L1015,796.5 L1016,796.5 L1017,796.5 L1018,796.5 L1019,796.5 L1020,796.5 L1021,796.5 L1022,796.5 L1023,796.5 L1024,796.5 L1025,796.5 L1026,796.5 L1027,796.5 L1028,796.5 L1029,794.7 L1030,791.2 L1031,786.9 L1032,781.9 L1033,776.3 L1034,770.2 L1035,763.7 L1036,756.9 L1037,749.9 L1038,742.9 L1039,736.0 L1040,729.4 L1041,723.1 L1042,717.3 L1043,712.0 L1044,707.5 L1045,703.6 L1046,700.5 L1047,703.6 L1048,707.5 L1049,712.0 L1050,717.3 L1051,723.1 L1052,729.4 L1053,736.0 L1054,742.9 L1055,749.9 L1056,756.9 L1057,763.7 L1058,770.2 L1059,776.3 L1060,781.9 L1061,786.9 L1062,791.2 L1063,793.8 L1064,792.1 L1065,787.8 L1066,782.8 L1067,777.1 L1068,770.8 L1069,764.1 L1070,757.0 L1071,749.7 L1072,742.3 L1073,735.0 L1074,727.9 L1075,721.2 L1076,714.9 L1077,709.2 L1078,704.2 L1079,699.9 L1080,696.4 L1081,697.7 L1082,701.5 L1083,706.1 L1084,711.4 L1085,717.4 L1086,723.8 L1087,730.7 L1088,737.9 L1089,745.3 L1090,752.6 L1091,759.9 L1092,766.8 L1093,773.4 L1094,779.4 L1095,784.9 L1096,789.6 L1097,793.6 L1098,796.5 L1099,796.5 L1100,796.5 L1101,796.5 L1102,796.5 L1103,796.5 L1104,796.5 L1105,796.5 L1106,796.5 L1107,796.5 L1108,796.5 L1109,796.5 L1110,796.5 L1111,796.5 L1112,796.5 L1113,796.5 L1114,796.5 L1115,796.5 L1116,796.5 L1117,796.5 L1118,796.5 L1119,796.5 L1120,796.5 L1121,796.5 L1122,796.5 L1123,796.5 L1124,796.5 L1125,796.5 L1126,796.5 L1127,796.5 L1128,796.5 L1129,796.5 L1130,796.5 L1131,796.5 L1132,796.5 L1133,796.5 L1134,796.5 L1135,796.5 L1136,796.5 L1137,796.5 L1138,796.5 L1139,796.5 L1140,796.5 L1141,796.5 L1142,796.5 L1143,796.5 L1144,796.5 L1145,796.5 L1146,796.5 L1147,796.5 L1148,796.5 L1149,796.5 L1150,796.5 L1151,796.5 L1152,796.5 L1153,796.5 L1154,796.5 L1155,796.5 L1156,796.5 L1157,796.5 L1158,796.5 L1159,796.5 L1160,796.5 L1161,796.5 L1162,796.5 L1163,796.5 L1164,796.5 L1165,796.5 L1166,796.5 L1167,796.5 L1168,795.0 L1169,791.9 L1170,788.3 L1171,784.0 L1172,779.3 L1173,774.0 L1174,768.5 L1175,762.7 L1176,756.7 L1177,750.7 L1178,744.8 L1179,739.2 L1180,733.8 L1181,728.8 L1182,724.4 L1183,720.5 L1184,717.2 L1185,714.5 L1186,717.2 L1187,720.5 L1188,724.4 L1189,728.8 L1190,733.8 L1191,739.2 L1192,744.8 L1193,750.7 L1194,756.7 L1195,762.7 L1196,768.5 L1197,774.0 L1198,779.3 L1199,784.0 L1200,788.3 L1201,791.9 L1202,795.0 L1203,796.5 L1204,796.5 L1205,796.5 L1206,796.5 L1207,796.5 L1208,796.5 L1209,796.5 L1210,796.5 L1211,796.5 L1212,796.5 L1213,796.5 L1214,796.5 L1215,796.5 L1216,796.5 L1217,796.5 L1218,796.5 L1219,796.5 L1220,796.5 L1221,796.5 L1222,796.5 L1223,796.5 L1224,796.5 L1225,796.5 L1226,796.5 L1227,796.5 L1228,796.5 L1229,796.5 L1230,796.5 L1231,796.5 L1232,796.5 L1233,796.5 L1234,796.5 L1235,796.5 L1236,796.5 L1237,796.5 L1238,796.5 L1239,794.9 L1240,790.3 L1241,784.7 L1242,778.2 L1243,770.9 L1244,762.9 L1245,754.2 L1246,745.1 L1247,735.6 L1248,725.9 L1249,716.2 L1250,706.7 L1251,697.4 L1252,688.5 L1253,680.2 L1254,672.6 L1255,665.8 L1256,659.9 L1257,654.8 L1258,652.3 L1259,656.7 L1260,662.1 L1261,668.4 L1262,675.6 L1263,683.5 L1264,692.0 L1265,701.1 L1266,710.5 L1267,720.1 L1268,729.8 L1269,739.4 L1270,748.8 L1271,757.7 L1272,766.2 L1273,773.9 L1274,780.9 L1275,786.5 L1276,788.4 L1277,788.7 L1278,784.1 L1279,778.9 L1280,773.1 L1281,766.9 L1282,760.3 L1283,753.4 L1284,746.3 L1285,739.2 L1286,732.2 L1287,725.4 L1288,718.8 L1289,712.7 L1290,707.0 L1291,701.9 L1292,697.4 L1293,693.6 L1294,690.5 L1295,693.6 L1296,697.4 L1297,701.9 L1298,707.0 L1299,712.7 L1300,718.8 L1301,725.4 L1302,732.2 L1303,739.2 L1304,746.3 L1305,753.4 L1306,760.3 L1307,766.9 L1308,773.1 L1309,778.9 L1310,784.1 L1311,788.7 L1312,792.7 L1313,795.9 L1314,796.5 L1315,796.5 L1316,796.5 L1317,796.5 L1318,796.5 L1319,796.5 L1320,796.5 L1321,796.5 L1322,796.5 L1323,796.5 L1324,796.5 L1325,796.5 L1326,796.5 L1327,796.5 L1328,796.5 L1329,796.5 L1330,796.5 L1331,796.5 L1332,796.5 L1333,796.5 L1334,796.5 L1335,796.5 L1336,796.5 L1337,796.5 L1338,796.5 L1339,796.5 L1340,796.5 L1341,796.5 L1342,796.5 L1343,796.5 L1344,796.5 L1345,796.5 L1346,796.5 L1347,796.5 L1348,796.5 L1349,796.5 L1350,796.5 L1351,796.5 L1352,796.5 L1353,796.5 L1354,796.5 L1355,796.5 L1356,796.5 L1357,796.5 L1358,796.5 L1359,796.5 L1360,796.5 L1361,796.5 L1362,796.5 L1363,796.5 L1364,796.5 L1365,796.5 L1366,796.5 L1367,796.5 L1368,796.5 L1369,796.5 L1370,796.5 L1371,796.5 L1372,796.5 L1373,796.5 L1374,796.5 L1375,796.5 L1376,796.5 L1377,796.5 L1378,796.5 L1379,796.5 L1380,796.5 L1381,796.5 L1382,796.5 L1383,796.5 L1384,796.5 L1385,796.5 L1386,796.5 L1387,796.5 L1388,796.5 L1389,796.5 L1390,796.5 L1391,796.5 L1392,796.5 L1393,796.5 L1394,796.5 L1395,796.5 L1396,796.5 L1397,796.5 L1398,796.5 L1399,796.5 L1400,796.5 L1401,796.5 L1402,796.5 L1403,796.5 L1404,796.5 L1405,796.5 L1406,796.5 L1407,796.5 L1408,796.5 L1409,796.5 L1410,796.5 L1411,796.5 L1412,796.5 L1413,796.5 L1414,796.5 L1415,796.5 L1416,796.5 L1417,796.5 L1418,796.5 L1419,796.5 L1420,796.5 L1421,796.5 L1422,796.3 L1423,796.1 L1424,795.8 L1425,795.5 L1426,795.2 L1427,794.8 L1428,794.4 L1429,794.1 L1430,793.7 L1431,793.3 L1432,792.9 L1433,792.5 L1434,792.1 L1435,791.8 L1436,791.4 L1437,791.1 L1438,790.9 L1439,790.7 L1440,790.5 L1441,790.7 L1442,790.9 L1443,791.1 L1444,791.4 L1445,791.8 L1446,792.1 L1447,792.5 L1448,792.9 L1449,793.3 L1450,793.7 L1451,794.1 L1452,794.4 L1453,794.8 L1454,795.2 L1455,795.5 L1456,795.8 L1457,796.1 L1458,796.3 L1459,796.5 L1460,796.5 L1461,796.5 L1462,796.5 L1463,796.5 L1464,796.5 L1465,796.5 L1466,796.5 L1467,796.5 L1468,796.5 L1469,796.5 L1470,796.5 L1471,795.4 L1472,792.4 L1473,788.7 L1474,784.4 L1475,779.5 L1476,774.2 L1477,768.5 L1478,762.5 L1479,756.2 L1480,749.8 L1481,743.4 L1482,737.0 L1483,730.9 L1484,725.0 L1485,719.5 L1486,714.5 L1487,710.0 L1488,706.0 L1489,702.7 L1490,701.0 L1491,704.0 L1492,707.5 L1493,711.7 L1494,716.4 L1495,721.7 L1496,727.3 L1497,733.3 L1498,739.6 L1499,745.9 L1500,752.4 L1501,758.7 L1502,764.9 L1503,770.8 L1504,776.4 L1505,781.5 L1506,786.2 L1507,790.2 L1508,793.7 L1509,796.5 L1510,796.5 L1511,796.5 L1512,796.5 L1513,796.5 L1514,796.5 L1515,796.5 L1516,796.5 L1517,796.5 L1518,796.5 L1519,796.5 L1520,796.5 L1521,796.5 L1522,796.3 L1523,796.1 L1524,795.8 L1525,795.5 L1526,795.2 L1527,794.8 L1528,794.4 L1529,794.1 L1530,793.7 L1531,793.3 L1532,792.9 L1533,792.5 L1534,792.1 L1535,791.8 L1536,791.4 L1537,791.1 L1538,790.9 L1539,790.7 L1540,790.5 L1541,790.7 L1542,790.9 L1543,791.1 L1544,791.4 L1545,791.8 L1546,792.1 L1547,792.5 L1548,792.9 L1549,793.3 L1550,793.7 L1551,794.1 L1552,794.4 L1553,794.8 L1554,795.2 L1555,795.5 L1556,795.8 L1557,796.1 L1558,796.3 L1559,796.5 L1560,796.5 L1561,796.5 L1562,796.5 L1563,796.5 L1564,796.5 L1565,796.5 L1566,796.5 L1567,796.5 L1568,796.5 L1569,796.5 L1570,796.5 L1571,796.5 L1572,796.5 L1573,796.5 L1574,796.5 L1575,796.5 L1576,796.5 L1577,796.5 L1578,796.5 L1579,796.5 L1580,796.5 L1581,796.5 L1582,796.5 L1583,796.5 L1584,796.5 L1585,796.5 L1586,796.5 L1587,796.5 L1588,796.5 L1589,796.5 L1590,796.5 L1591,796.5 L1592,796.5 L1593,796.5 L1594,796.5" fill="none" stroke="#00C800" stroke-width="2" stroke-linejoin="round" shape-rendering="crispEdges"/><path d="M477,796.5 L478,796.5 L479,796.5 L480,796.5 L481,796.5 L482,796.5 L483,796.5 L484,796.5 L485,796.5 L486,796.3 L487,795.8 L488,795.1 L489,794.3 L490,793.3 L491,792.3 L492,791.3 L493,790.2 L494,789.1 L495,787.9 L496,786.9 L497,785.8 L498,784.9 L499,784.1 L500,783.4 L501,782.8 L502,782.7 L503,783.2 L504,783.9 L505,784.7 L506,785.7 L507,786.7 L508,787.7 L509,788.8 L510,789.9 L511,791.1 L512,792.1 L513,793.2 L514,794.1 L515,794.9 L516,795.6 L517,796.2 L518,796.5 L519,796.5 L520,796.5 L521,796.5 L522,796.5 L523,796.5 L524,796.5 L525,796.5 L526,796.5 L527,796.5 L528,796.5 L529,796.5 L530,796.5 L531,796.5 L532,796.5 L533,796.5 L534,796.5 L535,796.5 L536,796.5 L537,796.5 L538,796.5 L539,796.5 L540,796.5 L541,795.1 L542,791.1 L543,786.2 L544,780.5 L545,774.1 L546,767.0 L547,759.4 L548,751.5 L549,743.3 L550,735.1 L551,726.9 L552,719.0 L553,711.5 L554,704.6 L555,698.3 L556,692.7 L557,688.0 L558,684.2 L559,686.4 L560,690.7 L561,695.9 L562,702.0 L563,708.7 L564,716.0 L565,723.7 L566,731.8 L567,740.0 L568,748.2 L569,756.3 L570,764.0 L571,771.3 L572,778.0 L573,784.1 L574,789.3 L575,793.6 L576,796.5 L577,796.5 L578,796.5 L579,796.5 L580,796.5 L581,796.5 L582,796.5 L583,796.5 L584,796.5 L585,796.5 L586,796.5 L587,796.5 L588,796.5 L589,796.5 L590,796.5 L591,796.5 L592,796.5 L593,796.5 L594,796.5 L595,796.5 L596,796.5 L597,796.5 L598,796.5 L599,796.5 L600,796.5 L601,796.5 L602,796.5 L603,796.5 L604,796.5 L605,796.5 L606,796.5 L607,796.5 L608,796.5 L609,796.5 L610,796.5 L611,796.5 L612,796.5 L613,796.5 L614,796.5 L615,796.5 L616,796.5 L617,796.5 L618,796.5 L619,796.5 L620,796.5 L621,796.5 L622,796.5 L623,796.5 L624,796.5 L625,796.5 L626,796.5 L627,796.5 L628,796.5 L629,796.5 L630,796.5 L631,796.5 L632,796.5 L633,796.5 L634,796.5 L635,796.5 L636,796.5 L637,796.5 L638,796.5 L639,796.5 L640,796.5 L641,796.5 L642,796.5 L643,796.5 L644,796.5 L645,796.5 L646,796.5 L647,796.5 L648,796.5 L649,794.7 L650,792.3 L651,789.5 L652,786.2 L653,782.5 L654,778.6 L655,774.4 L656,770.0 L657,765.6 L658,761.1 L659,756.8 L660,752.6 L661,748.7 L662,745.1 L663,741.9 L664,739.1 L665,736.8 L666,736.0 L667,738.2 L668,740.8 L669,743.8 L670,747.2 L671,751.0 L672,755.1 L673,759.4 L674,763.8 L675,768.2 L676,772.6 L677,776.9 L678,781.0 L679,784.8 L680,788.2 L681,791.2 L682,793.8 L683,796.0 L684,796.5 L685,796.5 L686,796.5 L687,796.5 L688,796.5 L689,796.5 L690,796.5 L691,796.5 L692,796.5 L693,796.5 L694,796.5 L695,796.5 L696,796.5 L697,796.5 L698,796.5 L699,796.5 L700,796.5 L701,796.5 L702,796.5 L703,796.5 L704,796.5 L705,796.5 L706,796.5 L707,796.5 L708,796.5 L709,796.5 L710,796.5 L711,796.5 L712,796.5 L713,796.5 L714,796.5 L715,794.5 L716,790.6 L717,785.9 L718,780.4 L719,774.2 L720,767.5 L721,760.3 L722,752.7 L723,745.0 L724,737.3 L725,729.7 L726,722.4 L727,715.4 L728,709.0 L729,703.2 L730,698.2 L731,693.9 L732,690.5 L733,693.9 L734,698.2 L735,703.2 L736,709.0 L737,715.4 L738,722.4 L739,729.7 L740,737.3 L741,745.0 L742,752.7 L743,760.3 L744,767.5 L745,774.2 L746,780.4 L747,785.9 L748,790.6 L749,794.5 L750,796.5 L751,796.5 L752,796.5 L753,796.5 L754,796.5 L755,796.5 L756,796.5 L757,796.5 L758,796.5 L759,796.5 L760,796.5 L761,796.5 L762,796.5 L763,796.5 L764,796.5 L765,796.5 L766,796.5 L767,796.5 L768,796.5 L769,796.5 L770,796.5 L771,796.5 L772,796.5 L773,796.5 L774,796.5 L775,796.5 L776,796.5 L777,796.5 L778,796.5 L779,796.5 L780,796.5 L781,796.5 L782,796.5 L783,796.5 L784,796.5 L785,796.5 L786,796.5 L787,796.5 L788,796.5 L789,796.5 L790,796.5 L791,796.5 L792,796.5 L793,796.5 L794,796.5 L795,796.5 L796,796.5 L797,796.5 L798,796.5 L799,796.5 L800,796.5 L801,796.5 L802,796.5 L803,796.5 L804,796.5 L805,796.5 L806,796.5 L807,796.5 L808,796.5 L809,796.5 L810,796.5 L811,796.5 L812,796.5 L813,796.5 L814,796.5 L815,796.5 L816,796.5 L817,796.5 L818,796.5 L819,796.5 L820,796.5 L821,796.5 L822,796.5 L823,796.5 L824,796.5 L825,796.5 L826,796.5 L827,796.5 L828,796.5 L829,796.5 L830,796.5 L831,796.5 L832,796.5 L833,796.5 L834,796.5 L835,796.5 L836,796.5 L837,796.5 L838,796.5 L839,796.5 L840,796.5 L841,796.5 L842,796.5 L843,796.5 L844,796.5 L845,796.5 L846,796.5 L847,796.5 L848,796.5 L849,796.5 L850,794.7 L851,791.2 L852,787.0 L853,782.0 L854,776.5 L855,770.5 L856,764.0 L857,757.3 L858,750.4 L859,743.5 L860,736.6 L861,730.1 L862,723.8 L863,718.1 L864,712.9 L865,708.4 L866,704.6 L867,701.5 L868,704.6 L869,708.4 L870,712.9 L871,718.1 L872,723.8 L873,730.1 L874,736.6 L875,743.5 L876,750.4 L877,757.3 L878,764.0 L879,770.5 L880,776.5 L881,782.0 L882,787.0 L883,791.2 L884,794.7 L885,796.5 L886,796.5 L887,796.5 L888,793.6 L889,787.7 L890,780.7 L891,772.5 L892,763.3 L893,753.2 L894,742.5 L895,731.3 L896,719.8 L897,708.3 L898,696.9 L899,686.0 L900,675.7 L901,666.1 L902,657.5 L903,650.0 L904,643.6 L905,638.5 L906,643.6 L907,650.0 L908,657.5 L909,666.1 L910,675.7 L911,686.0 L912,696.9 L913,708.3 L914,719.8 L915,731.3 L916,742.5 L917,753.2 L918,763.3 L919,772.5 L920,780.7 L921,787.7 L922,793.6 L923,796.5 L924,796.5 L925,796.5 L926,796.5 L927,796.5 L928,796.5 L929,796.5 L930,796.5 L931,796.5 L932,796.5 L933,796.5 L934,796.5 L935,796.5 L936,796.5 L937,796.5 L938,796.5 L939,796.5 L940,796.5 L941,796.5 L942,796.5 L943,796.5 L944,796.5 L945,796.5 L946,796.5 L947,796.5 L948,796.5 L949,796.5 L950,796.5 L951,796.5 L952,796.5 L953,796.5 L954,796.5 L955,796.5 L956,796.5 L957,796.5 L958,796.0 L959,792.9 L960,789.1 L961,784.6 L962,779.5 L963,773.9 L964,767.9 L965,761.5 L966,755.0 L967,748.3 L968,741.8 L969,735.3 L970,729.2 L971,723.5 L972,718.4 L973,713.8 L974,709.8 L975,706.6 L976,707.2 L977,710.6 L978,714.6 L979,719.3 L980,724.6 L981,730.4 L982,736.6 L983,743.1 L984,749.7 L985,756.3 L986,762.8 L987,769.1 L988,775.1 L989,780.6 L990,785.6 L991,789.9 L992,793.6 L993,796.5 L994,796.5 L995,793.5 L996,787.6 L997,780.5 L998,772.2 L999,762.8 L1000,752.7 L1001,741.8 L1002,730.5 L1003,718.8 L1004,707.2 L1005,695.7 L1006,684.6 L1007,674.1 L1008,664.5 L1009,655.7 L1010,648.1 L1011,641.7 L1012,636.5 L1013,641.7 L1014,648.1 L1015,655.7 L1016,664.5 L1017,674.1 L1018,684.6 L1019,695.7 L1020,707.2 L1021,718.8 L1022,730.5 L1023,741.8 L1024,752.7 L1025,762.8 L1026,772.2 L1027,780.5 L1028,787.6 L1029,793.5 L1030,796.5 L1031,796.5 L1032,796.5 L1033,796.2 L1034,795.8 L1035,795.3 L1036,794.8 L1037,794.1 L1038,793.4 L1039,792.7 L1040,791.9 L1041,791.1 L1042,790.3 L1043,789.5 L1044,788.8 L1045,788.0 L1046,787.3 L1047,786.6 L1048,786.0 L1049,785.5 L1050,785.0 L1051,784.6 L1052,784.7 L1053,785.1 L1054,785.6 L1055,786.1 L1056,786.7 L1057,787.4 L1058,788.1 L1059,788.9 L1060,789.7 L1061,790.5 L1062,791.3 L1063,792.1 L1064,792.9 L1065,793.6 L1066,794.3 L1067,794.9 L1068,795.4 L1069,795.9 L1070,796.2 L1071,796.0 L1072,795.5 L1073,795.0 L1074,794.4 L1075,793.7 L1076,793.0 L1077,792.2 L1078,791.5 L1079,790.7 L1080,789.9 L1081,789.1 L1082,788.3 L1083,787.6 L1084,786.9 L1085,786.2 L1086,785.7 L1087,785.2 L1088,784.8 L1089,784.6 L1090,784.9 L1091,785.4 L1092,785.9 L1093,786.5 L1094,787.1 L1095,787.9 L1096,788.6 L1097,789.4 L1098,790.2 L1099,791.0 L1100,791.8 L1101,792.6 L1102,793.3 L1103,794.0 L1104,794.3 L1105,794.6 L1106,794.6 L1107,794.6 L1108,794.4 L1109,793.8 L1110,793.1 L1111,792.5 L1112,791.9 L1113,791.2 L1114,790.6 L1115,790.1 L1116,789.6 L1117,789.2 L1118,788.8 L1119,788.5 L1120,788.8 L1121,789.2 L1122,789.6 L1123,790.1 L1124,790.6 L1125,791.2 L1126,791.9 L1127,792.5 L1128,793.1 L1129,793.8 L1130,794.4 L1131,794.9 L1132,795.4 L1133,795.8 L1134,793.7 L1135,789.0 L1136,783.0 L1137,776.0 L1138,768.1 L1139,759.5 L1140,750.4 L1141,740.8 L1142,731.0 L1143,721.1 L1144,711.4 L1145,702.1 L1146,693.2 L1147,685.1 L1148,677.7 L1149,671.3 L1150,665.9 L1151,661.5 L1152,665.9 L1153,671.3 L1154,677.7 L1155,685.1 L1156,693.2 L1157,702.1 L1158,711.4 L1159,721.1 L1160,731.0 L1161,740.8 L1162,750.4 L1163,759.5 L1164,768.1 L1165,776.0 L1166,783.0 L1167,789.0 L1168,794.0 L1169,796.5 L1170,796.5 L1171,796.5 L1172,796.5 L1173,796.5 L1174,796.5 L1175,796.5 L1176,796.5 L1177,796.5 L1178,796.5 L1179,796.5 L1180,796.5 L1181,796.5 L1182,796.5 L1183,796.5 L1184,796.5 L1185,796.5 L1186,796.5 L1187,796.5 L1188,796.5 L1189,796.5 L1190,796.5 L1191,796.5 L1192,796.5 L1193,796.5 L1194,796.5 L1195,796.5 L1196,796.5 L1197,796.5 L1198,796.5 L1199,796.5 L1200,796.5 L1201,796.5 L1202,796.5 L1203,796.5 L1204,796.5 L1205,796.5 L1206,794.0 L1207,789.1 L1208,783.2 L1209,776.3 L1210,768.5 L1211,760.1 L1212,751.0 L1213,741.6 L1214,731.9 L1215,722.2 L1216,712.7 L1217,703.5 L1218,694.8 L1219,686.7 L1220,679.5 L1221,673.2 L1222,667.8 L1223,663.5 L1224,667.8 L1225,673.2 L1226,679.5 L1227,686.7 L1228,694.8 L1229,703.5 L1230,712.7 L1231,722.2 L1232,731.9 L1233,741.6 L1234,751.0 L1235,760.1 L1236,768.5 L1237,776.3 L1238,783.2 L1239,789.1 L1240,794.0 L1241,796.5 L1242,796.5 L1243,796.5 L1244,796.5 L1245,796.5 L1246,796.5 L1247,796.5 L1248,796.5 L1249,796.5 L1250,796.5 L1251,796.5 L1252,796.5 L1253,796.5 L1254,796.5 L1255,796.5 L1256,796.5 L1257,796.5 L1258,796.5 L1259,796.5 L1260,796.5 L1261,796.5 L1262,796.5 L1263,796.5 L1264,796.5 L1265,796.5 L1266,796.5 L1267,796.5 L1268,796.5 L1269,796.5 L1270,796.5 L1271,796.5 L1272,796.5 L1273,796.5 L1274,796.5 L1275,796.5 L1276,796.5 L1277,796.5 L1278,796.5 L1279,796.5 L1280,796.5 L1281,796.5 L1282,796.5 L1283,796.5 L1284,796.5 L1285,796.5 L1286,796.5 L1287,796.5 L1288,796.5 L1289,796.5 L1290,796.5 L1291,796.5 L1292,796.5 L1293,796.5 L1294,796.5 L1295,796.5 L1296,796.5 L1297,796.5 L1298,796.5 L1299,796.5 L1300,796.5 L1301,796.5 L1302,796.5 L1303,796.5 L1304,796.5 L1305,796.5 L1306,796.5 L1307,796.5 L1308,796.5 L1309,796.5 L1310,796.5 L1311,796.5 L1312,796.5 L1313,796.5 L1314,796.5 L1315,796.5 L1316,796.5 L1317,796.5 L1318,796.5 L1319,796.5 L1320,796.5 L1321,796.5 L1322,796.5 L1323,796.5 L1324,796.5 L1325,796.5 L1326,796.5 L1327,796.5 L1328,796.5 L1329,796.5 L1330,796.5 L1331,796.5 L1332,796.5 L1333,796.5 L1334,796.5 L1335,796.5 L1336,796.5 L1337,796.5 L1338,796.5 L1339,796.5 L1340,796.5 L1341,796.5 L1342,796.5 L1343,796.5 L1344,796.5 L1345,796.5 L1346,796.5 L1347,796.5 L1348,796.5 L1349,796.5 L1350,796.5 L1351,796.5 L1352,796.5 L1353,796.5 L1354,796.5 L1355,796.5 L1356,796.5 L1357,796.5 L1358,796.5 L1359,796.5 L1360,796.5 L1361,796.5 L1362,796.5 L1363,796.5 L1364,796.5 L1365,796.5 L1366,796.5 L1367,796.5 L1368,796.5 L1369,796.5 L1370,796.5 L1371,796.5 L1372,796.5 L1373,796.5 L1374,796.5 L1375,796.5 L1376,796.5 L1377,796.5 L1378,796.5 L1379,796.5 L1380,796.5 L1381,796.5 L1382,796.5 L1383,796.5 L1384,796.5 L1385,796.5 L1386,796.5 L1387,796.5 L1388,796.5 L1389,796.5 L1390,796.5 L1391,796.5 L1392,796.5 L1393,796.5 L1394,796.5 L1395,796.5 L1396,796.5 L1397,796.5 L1398,796.5 L1399,796.5 L1400,796.5 L1401,796.5 L1402,796.5 L1403,796.5 L1404,796.5 L1405,796.5 L1406,796.5 L1407,796.5 L1408,796.5 L1409,796.5 L1410,796.5 L1411,796.5 L1412,796.5 L1413,796.5 L1414,796.5 L1415,796.5 L1416,796.5 L1417,796.5 L1418,796.5 L1419,796.5 L1420,796.5 L1421,796.5 L1422,796.5 L1423,796.5 L1424,796.5 L1425,796.5 L1426,796.5 L1427,796.5 L1428,796.5 L1429,796.5 L1430,796.5 L1431,796.5 L1432,796.5 L1433,796.5 L1434,796.5 L1435,796.5 L1436,796.5 L1437,796.5 L1438,796.5 L1439,796.5 L1440,796.5 L1441,796.5 L1442,796.5 L1443,796.5 L1444,796.5 L1445,796.5 L1446,796.5 L1447,796.5 L1448,796.5 L1449,796.5 L1450,796.5 L1451,796.5 L1452,796.5 L1453,796.5 L1454,796.5 L1455,796.5 L1456,796.5 L1457,796.5 L1458,796.5 L1459,796.5 L1460,796.5 L1461,796.5 L1462,796.5 L1463,796.5 L1464,796.5 L1465,796.5 L1466,796.5 L1467,796.5 L1468,796.5 L1469,796.5 L1470,796.5 L1471,796.5 L1472,796.5 L1473,796.5 L1474,796.5 L1475,796.5 L1476,796.5 L1477,796.5 L1478,796.5 L1479,796.5 L1480,796.5 L1481,796.5 L1482,796.5 L1483,796.5 L1484,796.5 L1485,796.5 L1486,796.5 L1487,796.5 L1488,796.5 L1489,796.5 L1490,796.5 L1491,796.5 L1492,796.5 L1493,796.5 L1494,796.5 L1495,796.5 L1496,796.5 L1497,796.5 L1498,796.5 L1499,796.5 L1500,796.5 L1501,796.5 L1502,796.5 L1503,796.5 L1504,796.5 L1505,796.5 L1506,796.5 L1507,796.5 L1508,796.5 L1509,796.5 L1510,796.5 L1511,796.5 L1512,796.5 L1513,796.5 L1514,796.5 L1515,796.5 L1516,796.5 L1517,796.5 L1518,796.5 L1519,796.5 L1520,796.5 L1521,796.5 L1522,796.5 L1523,796.5 L1524,796.5 L1525,796.5 L1526,796.5 L1527,796.5 L1528,796.5 L1529,796.5 L1530,796.5 L1531,796.5 L1532,796.5 L1533,796.5 L1534,796.5 L1535,796.5 L1536,796.5 L1537,796.5 L1538,796.5 L1539,796.5 L1540,796.5 L1541,796.5 L1542,796.5 L1543,796.5 L1544,796.5 L1545,796.5 L1546,796.5 L1547,796.5 L1548,796.5 L1549,796.5 L1550,796.5 L1551,796.5 L1552,796.5 L1553,796.5 L1554,796.5 L1555,796.5 L1556,796.5 L1557,796.5 L1558,796.5 L1559,796.5 L1560,796.5 L1561,796.5 L1562,796.5 L1563,796.5 L1564,796.5 L1565,796.5 L1566,796.5 L1567,796.5 L1568,796.5 L1569,796.5 L1570,796.5 L1571,796.5 L1572,796.5 L1573,796.5 L1574,796.5 L1575,796.5 L1576,796.5 L1577,796.5 L1578,796.5 L1579,796.5 L1580,796.5 L1581,795.9 L1582,792.2 L1583,787.7 L1584,782.5 L1585,776.6 L1586,770.0 L1587,763.0 L1588,755.5 L1589,747.7 L1590,739.7 L1591,731.7 L1592,723.7 L1593,716.0 L1594,708.6" fill="none" stroke="#0000FF" stroke-width="2" stroke-linejoin="round" shape-rendering="crispEdges"/></g></svg>
<div style="left:1036px;top:293px;width:18px;height:518px;border:1px solid #00E0F0"></div>
<div style="left:476px;top:811px;width:1118px;height:16px;background:repeating-conic-gradient(#D4D0C8 0 25%,#FFFFFF 0 50%) 0 0/2px 2px"></div>
<div class="raised" style="left:476px;top:811px;width:16px;height:16px"></div>
<svg style="left:476px;top:811px" width="16" height="16" viewBox="0 0 16 16"><path d="M6 8l4 -4v8z" fill="#000"/></svg>
<div class="raised" style="left:1048px;top:811px;width:56px;height:16px"></div>
<div class="raised" style="left:1578px;top:811px;width:16px;height:16px"></div>
<svg style="left:1578px;top:811px" width="16" height="16" viewBox="0 0 16 16"><path d="M10 8l-4 -4v8z" fill="#000"/></svg>
<div style="left:2px;top:834px;width:444px;height:22px;box-shadow:inset 1px 1px #808080,inset -1px -1px #fff"></div>
<div style="left:448px;top:834px;width:86px;height:22px;box-shadow:inset 1px 1px #808080,inset -1px -1px #fff"></div>
<div class="t" style="left:538px;top:838px;font:13.5px 'Liberation Serif',serif;color:#000;letter-spacing:0.25px">Z00343063  Exon: 3  Codon: 144.1 Pos: 502  Code: MAG (?)</div>
<div class="t" style="left:3.0px;top:836px;font-family:'Liberation Sans',sans-serif;font-size:15px;color:#A05028">R</div>
<div class="t" style="left:13.8px;top:836px;font-family:'Liberation Sans',sans-serif;font-size:15px;color:#A05028">-</div>
<div class="t" style="left:18.8px;top:836px;font-family:'Liberation Sans',sans-serif;font-size:15px;color:#00E000">A</div>
<div class="t" style="left:28.8px;top:836px;font-family:'Liberation Sans',sans-serif;font-size:15px;color:#000">G</div>
<div class="t" style="left:43.0px;top:836px;font-family:'Liberation Sans',sans-serif;font-size:15px;color:#A05028">Y</div>
<div class="t" style="left:53.0px;top:836px;font-family:'Liberation Sans',sans-serif;font-size:15px;color:#A05028">-</div>
<div class="t" style="left:58.0px;top:836px;font-family:'Liberation Sans',sans-serif;font-size:15px;color:#FF0000">T</div>
<div class="t" style="left:67.2px;top:836px;font-family:'Liberation Sans',sans-serif;font-size:15px;color:#0000FF">C</div>
<div class="t" style="left:82.0px;top:836px;font-family:'Liberation Sans',sans-serif;font-size:15px;color:#A05028">K</div>
<div class="t" style="left:92.0px;top:836px;font-family:'Liberation Sans',sans-serif;font-size:15px;color:#A05028">-</div>
<div class="t" style="left:97.0px;top:836px;font-family:'Liberation Sans',sans-serif;font-size:15px;color:#000">G</div>
<div class="t" style="left:108.7px;top:836px;font-family:'Liberation Sans',sans-serif;font-size:15px;color:#FF0000">T</div>
<div class="t" style="left:120.0px;top:836px;font-family:'Liberation Sans',sans-serif;font-size:15px;color:#A05028">M</div>
<div class="t" style="left:132.5px;top:836px;font-family:'Liberation Sans',sans-serif;font-size:15px;color:#A05028">-</div>
<div class="t" style="left:137.5px;top:836px;font-family:'Liberation Sans',sans-serif;font-size:15px;color:#00E000">A</div>
<div class="t" style="left:147.5px;top:836px;font-family:'Liberation Sans',sans-serif;font-size:15px;color:#0000FF">C</div>
<div class="t" style="left:160.0px;top:836px;font-family:'Liberation Sans',sans-serif;font-size:15px;color:#A05028">S</div>
<div class="t" style="left:170.0px;top:836px;font-family:'Liberation Sans',sans-serif;font-size:15px;color:#A05028">-</div>
<div class="t" style="left:175.0px;top:836px;font-family:'Liberation Sans',sans-serif;font-size:15px;color:#000">G</div>
<div class="t" style="left:186.7px;top:836px;font-family:'Liberation Sans',sans-serif;font-size:15px;color:#0000FF">C</div>
<div class="t" style="left:200.0px;top:836px;font-family:'Liberation Sans',sans-serif;font-size:15px;color:#A05028">W</div>
<div class="t" style="left:214.2px;top:836px;font-family:'Liberation Sans',sans-serif;font-size:15px;color:#A05028">-</div>
<div class="t" style="left:219.2px;top:836px;font-family:'Liberation Sans',sans-serif;font-size:15px;color:#00E000">A</div>
<div class="t" style="left:229.2px;top:836px;font-family:'Liberation Sans',sans-serif;font-size:15px;color:#FF0000">T</div>
<div class="t" style="left:243.0px;top:836px;font-family:'Liberation Sans',sans-serif;font-size:15px;color:#A05028">B</div>
<div class="t" style="left:253.0px;top:836px;font-family:'Liberation Sans',sans-serif;font-size:15px;color:#A05028">-</div>
<div class="t" style="left:258.0px;top:836px;font-family:'Liberation Sans',sans-serif;font-size:15px;color:#000">G</div>
<div class="t" style="left:269.7px;top:836px;font-family:'Liberation Sans',sans-serif;font-size:15px;color:#FF0000">T</div>
<div class="t" style="left:278.8px;top:836px;font-family:'Liberation Sans',sans-serif;font-size:15px;color:#0000FF">C</div>
<div class="t" style="left:293.0px;top:836px;font-family:'Liberation Sans',sans-serif;font-size:15px;color:#A05028">D</div>
<div class="t" style="left:303.8px;top:836px;font-family:'Liberation Sans',sans-serif;font-size:15px;color:#A05028">-</div>
<div class="t" style="left:308.8px;top:836px;font-family:'Liberation Sans',sans-serif;font-size:15px;color:#000">G</div>
<div class="t" style="left:320.5px;top:836px;font-family:'Liberation Sans',sans-serif;font-size:15px;color:#00E000">A</div>
<div class="t" style="left:330.5px;top:836px;font-family:'Liberation Sans',sans-serif;font-size:15px;color:#FF0000">T</div>
<div class="t" style="left:341.0px;top:836px;font-family:'Liberation Sans',sans-serif;font-size:15px;color:#A05028">H</div>
<div class="t" style="left:351.8px;top:836px;font-family:'Liberation Sans',sans-serif;font-size:15px;color:#A05028">-</div>
<div class="t" style="left:356.8px;top:836px;font-family:'Liberation Sans',sans-serif;font-size:15px;color:#00E000">A</div>
<div class="t" style="left:366.8px;top:836px;font-family:'Liberation Sans',sans-serif;font-size:15px;color:#0000FF">C</div>
<div class="t" style="left:377.7px;top:836px;font-family:'Liberation Sans',sans-serif;font-size:15px;color:#FF0000">T</div>
<div class="t" style="left:389.0px;top:836px;font-family:'Liberation Sans',sans-serif;font-size:15px;color:#A05028">V</div>
<div class="t" style="left:399.0px;top:836px;font-family:'Liberation Sans',sans-serif;font-size:15px;color:#A05028">-</div>
<div class="t" style="left:404.0px;top:836px;font-family:'Liberation Sans',sans-serif;font-size:15px;color:#000">G</div>
<div class="t" style="left:415.7px;top:836px;font-family:'Liberation Sans',sans-serif;font-size:15px;color:#0000FF">C</div>
<div class="t" style="left:426.5px;top:836px;font-family:'Liberation Sans',sans-serif;font-size:15px;color:#00E000">A</div>
<div style="left:0px;top:857px;width:1600px;height:1px;background:#fff"></div>
</body></html>
